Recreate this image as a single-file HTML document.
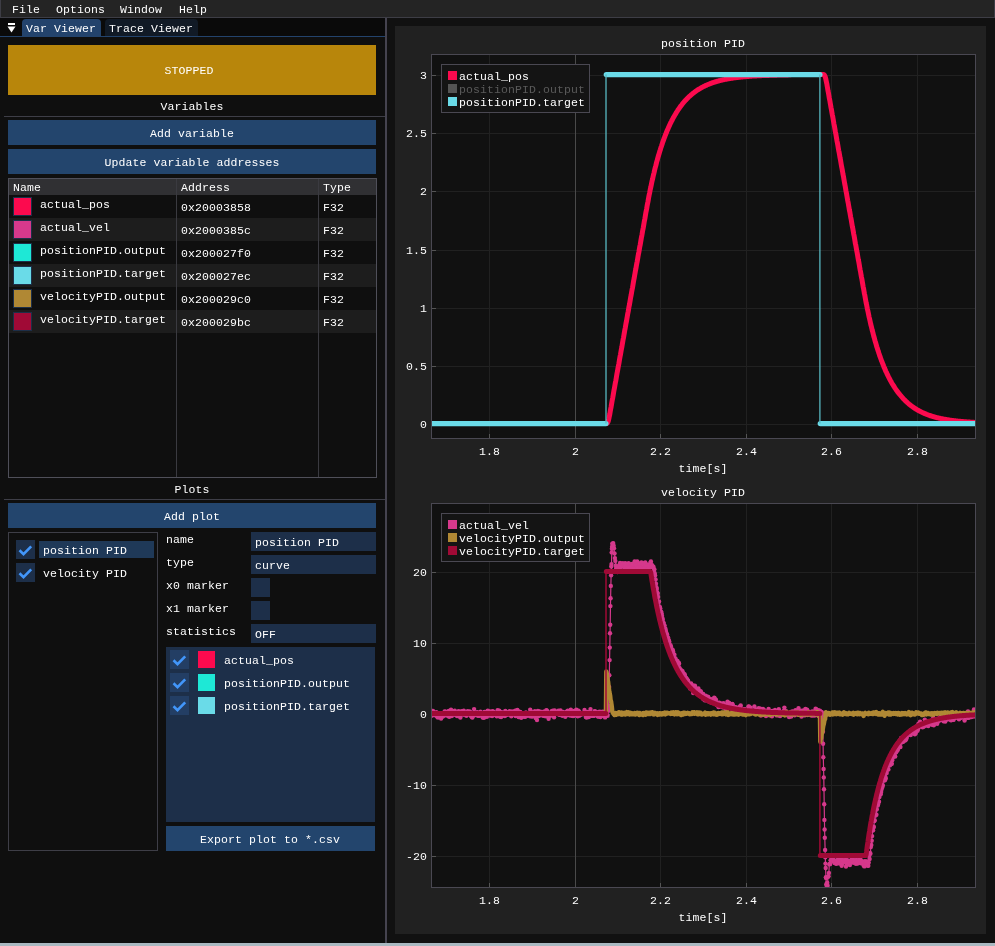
<!DOCTYPE html><html><head><meta charset="utf-8"><style>
html,body{margin:0;padding:0;background:#0f0f0f;width:995px;height:946px;overflow:hidden;position:relative}
.t{position:absolute;white-space:pre;font-family:"Liberation Mono", monospace;font-size:11.5px;line-height:14px;letter-spacing:0.1px;height:14px}
</style></head><body>
<div style="position:absolute;left:0px;top:0px;width:995px;height:17px;background:#242424;"></div><div style="position:absolute;left:0px;top:17px;width:995px;height:1px;background:#3d3d45;"></div><div style="position:absolute;left:0px;top:0px;width:1px;height:17px;background:#3d3d45;"></div><div style="position:absolute;left:994px;top:0px;width:1px;height:17px;background:#3d3d45;"></div><div style="position:absolute;left:0px;top:18px;width:385px;height:925px;background:#0f0f0f;"></div><div style="position:absolute;left:0px;top:18px;width:385px;height:18px;background:#0a0a0a;"></div><div style="position:absolute;left:0px;top:36px;width:385px;height:1px;background:#23436c;"></div><div style="position:absolute;left:8px;top:23px;width:7px;height:2px;background:#fff;"></div><svg style="position:absolute;left:7px;top:26px" width="10" height="8"><path d="M0.5 0.5 L8.5 0.5 L4.5 6.5 Z" fill="#fff"/></svg><div style="position:absolute;left:22px;top:19px;width:79px;height:17px;background:#23436c;border-radius:4px 4px 0 0;"></div><div style="position:absolute;left:105px;top:19px;width:93px;height:17px;background:#111a26;border-radius:4px 4px 0 0;"></div><div style="position:absolute;left:8px;top:45px;width:368px;height:50px;background:#b8860b;"></div><div style="position:absolute;left:4px;top:116px;width:381px;height:1px;background:#3e3e47;"></div><div style="position:absolute;left:8px;top:120px;width:368px;height:25px;background:#23456d;"></div><div style="position:absolute;left:8px;top:149px;width:368px;height:25px;background:#23456d;"></div><div style="position:absolute;left:8px;top:178px;width:369px;height:17px;background:#303033;"></div><div style="position:absolute;left:13px;top:197px;width:19px;height:19px;background:#1d2f49;"></div><div style="position:absolute;left:14px;top:198px;width:17px;height:17px;background:#fc0a4e;"></div><div style="position:absolute;left:9px;top:218px;width:367px;height:23px;background:#1d1d1d;"></div><div style="position:absolute;left:13px;top:220px;width:19px;height:19px;background:#1d2f49;"></div><div style="position:absolute;left:14px;top:221px;width:17px;height:17px;background:#d6398c;"></div><div style="position:absolute;left:13px;top:243px;width:19px;height:19px;background:#1d2f49;"></div><div style="position:absolute;left:14px;top:244px;width:17px;height:17px;background:#1ee8d6;"></div><div style="position:absolute;left:9px;top:264px;width:367px;height:23px;background:#1d1d1d;"></div><div style="position:absolute;left:13px;top:266px;width:19px;height:19px;background:#1d2f49;"></div><div style="position:absolute;left:14px;top:267px;width:17px;height:17px;background:#6adbe8;"></div><div style="position:absolute;left:13px;top:289px;width:19px;height:19px;background:#1d2f49;"></div><div style="position:absolute;left:14px;top:290px;width:17px;height:17px;background:#b08834;"></div><div style="position:absolute;left:9px;top:310px;width:367px;height:23px;background:#1d1d1d;"></div><div style="position:absolute;left:13px;top:312px;width:19px;height:19px;background:#1d2f49;"></div><div style="position:absolute;left:14px;top:313px;width:17px;height:17px;background:#a00a36;"></div><div style="position:absolute;left:176px;top:179px;width:1px;height:298px;background:#3a3a40;"></div><div style="position:absolute;left:318px;top:179px;width:1px;height:298px;background:#3a3a40;"></div><div style="position:absolute;left:8px;top:178px;width:369px;height:300px;background:transparent;box-shadow:inset 0 0 0 1px #4f4f59;"></div><div style="position:absolute;left:4px;top:499px;width:381px;height:1px;background:#3e3e47;"></div><div style="position:absolute;left:8px;top:503px;width:368px;height:25px;background:#23456d;"></div><div style="position:absolute;left:8px;top:532px;width:150px;height:319px;background:transparent;box-shadow:inset 0 0 0 1px #3e3e47;"></div><div style="position:absolute;left:39px;top:541px;width:115px;height:17px;background:#1f3958;"></div><div style="position:absolute;left:16px;top:540px;width:19px;height:19px;background:#1d2f49;"></div><svg style="position:absolute;left:16px;top:540px" width="19" height="19"><path d="M3.5 10.3 L7.5 14.2 L15.2 6.3" stroke="#4296fa" stroke-width="2.6" fill="none"/></svg><div style="position:absolute;left:16px;top:563px;width:19px;height:19px;background:#1d2f49;"></div><svg style="position:absolute;left:16px;top:563px" width="19" height="19"><path d="M3.5 10.3 L7.5 14.2 L15.2 6.3" stroke="#4296fa" stroke-width="2.6" fill="none"/></svg><div style="position:absolute;left:251px;top:532px;width:125px;height:19px;background:#1d2f49;"></div><div style="position:absolute;left:251px;top:555px;width:125px;height:19px;background:#1d2f49;"></div><div style="position:absolute;left:251px;top:578px;width:19px;height:19px;background:#1d2f49;"></div><div style="position:absolute;left:251px;top:601px;width:19px;height:19px;background:#1d2f49;"></div><div style="position:absolute;left:251px;top:624px;width:125px;height:19px;background:#1d2f49;"></div><div style="position:absolute;left:166px;top:647px;width:209px;height:175px;background:#1d2f49;"></div><div style="position:absolute;left:170px;top:650px;width:19px;height:19px;background:#233e64;"></div><svg style="position:absolute;left:170px;top:650px" width="19" height="19"><path d="M3.5 10.3 L7.5 14.2 L15.2 6.3" stroke="#4296fa" stroke-width="2.6" fill="none"/></svg><div style="position:absolute;left:198px;top:651px;width:17px;height:17px;background:#fc0a4e;"></div><div style="position:absolute;left:170px;top:673px;width:19px;height:19px;background:#233e64;"></div><svg style="position:absolute;left:170px;top:673px" width="19" height="19"><path d="M3.5 10.3 L7.5 14.2 L15.2 6.3" stroke="#4296fa" stroke-width="2.6" fill="none"/></svg><div style="position:absolute;left:198px;top:674px;width:17px;height:17px;background:#1ee8d6;"></div><div style="position:absolute;left:170px;top:696px;width:19px;height:19px;background:#233e64;"></div><svg style="position:absolute;left:170px;top:696px" width="19" height="19"><path d="M3.5 10.3 L7.5 14.2 L15.2 6.3" stroke="#4296fa" stroke-width="2.6" fill="none"/></svg><div style="position:absolute;left:198px;top:697px;width:17px;height:17px;background:#6adbe8;"></div><div style="position:absolute;left:166px;top:826px;width:209px;height:25px;background:#23456d;"></div><div style="position:absolute;left:385px;top:18px;width:2px;height:925px;background:#45434f;"></div><div style="position:absolute;left:387px;top:18px;width:608px;height:925px;background:#111111;"></div><div style="position:absolute;left:395px;top:26px;width:591px;height:908px;background:#212121;"></div><div style="position:absolute;left:0px;top:943px;width:995px;height:3px;background:#a9b9c1;"></div><svg style="position:absolute;left:0;top:0" width="995" height="946"><defs><clipPath id="c1"><rect x="432" y="55" width="543" height="383"/></clipPath><clipPath id="c2"><rect x="432" y="504" width="543" height="383"/></clipPath></defs><rect x="431" y="54" width="545" height="385" fill="#111111"/><line x1="489.5" y1="55" x2="489.5" y2="438" stroke="#212121" stroke-width="1"/><line x1="489.5" y1="434" x2="489.5" y2="438" stroke="#555555" stroke-width="1"/><line x1="575.5" y1="55" x2="575.5" y2="438" stroke="#4a4a4a" stroke-width="1"/><line x1="575.5" y1="434" x2="575.5" y2="438" stroke="#555555" stroke-width="1"/><line x1="660.5" y1="55" x2="660.5" y2="438" stroke="#212121" stroke-width="1"/><line x1="660.5" y1="434" x2="660.5" y2="438" stroke="#555555" stroke-width="1"/><line x1="746.5" y1="55" x2="746.5" y2="438" stroke="#212121" stroke-width="1"/><line x1="746.5" y1="434" x2="746.5" y2="438" stroke="#555555" stroke-width="1"/><line x1="831.5" y1="55" x2="831.5" y2="438" stroke="#212121" stroke-width="1"/><line x1="831.5" y1="434" x2="831.5" y2="438" stroke="#555555" stroke-width="1"/><line x1="917.5" y1="55" x2="917.5" y2="438" stroke="#212121" stroke-width="1"/><line x1="917.5" y1="434" x2="917.5" y2="438" stroke="#555555" stroke-width="1"/><line x1="432" y1="424.5" x2="975" y2="424.5" stroke="#212121" stroke-width="1"/><line x1="432" y1="424.5" x2="436" y2="424.5" stroke="#555555" stroke-width="1"/><line x1="432" y1="366.5" x2="975" y2="366.5" stroke="#212121" stroke-width="1"/><line x1="432" y1="366.5" x2="436" y2="366.5" stroke="#555555" stroke-width="1"/><line x1="432" y1="308.5" x2="975" y2="308.5" stroke="#212121" stroke-width="1"/><line x1="432" y1="308.5" x2="436" y2="308.5" stroke="#555555" stroke-width="1"/><line x1="432" y1="250.5" x2="975" y2="250.5" stroke="#212121" stroke-width="1"/><line x1="432" y1="250.5" x2="436" y2="250.5" stroke="#555555" stroke-width="1"/><line x1="432" y1="191.5" x2="975" y2="191.5" stroke="#212121" stroke-width="1"/><line x1="432" y1="191.5" x2="436" y2="191.5" stroke="#555555" stroke-width="1"/><line x1="432" y1="133.5" x2="975" y2="133.5" stroke="#212121" stroke-width="1"/><line x1="432" y1="133.5" x2="436" y2="133.5" stroke="#555555" stroke-width="1"/><line x1="432" y1="75.5" x2="975" y2="75.5" stroke="#212121" stroke-width="1"/><line x1="432" y1="75.5" x2="436" y2="75.5" stroke="#555555" stroke-width="1"/><line x1="575.5" y1="55" x2="575.5" y2="438" stroke="#4a4a4a" stroke-width="1"/><rect x="431.5" y="54.5" width="544" height="384" fill="none" stroke="#4a4852" stroke-width="1"/><rect x="431" y="503" width="545" height="385" fill="#111111"/><line x1="489.5" y1="504" x2="489.5" y2="887" stroke="#212121" stroke-width="1"/><line x1="489.5" y1="883" x2="489.5" y2="887" stroke="#555555" stroke-width="1"/><line x1="575.5" y1="504" x2="575.5" y2="887" stroke="#4a4a4a" stroke-width="1"/><line x1="575.5" y1="883" x2="575.5" y2="887" stroke="#555555" stroke-width="1"/><line x1="660.5" y1="504" x2="660.5" y2="887" stroke="#212121" stroke-width="1"/><line x1="660.5" y1="883" x2="660.5" y2="887" stroke="#555555" stroke-width="1"/><line x1="746.5" y1="504" x2="746.5" y2="887" stroke="#212121" stroke-width="1"/><line x1="746.5" y1="883" x2="746.5" y2="887" stroke="#555555" stroke-width="1"/><line x1="831.5" y1="504" x2="831.5" y2="887" stroke="#212121" stroke-width="1"/><line x1="831.5" y1="883" x2="831.5" y2="887" stroke="#555555" stroke-width="1"/><line x1="917.5" y1="504" x2="917.5" y2="887" stroke="#212121" stroke-width="1"/><line x1="917.5" y1="883" x2="917.5" y2="887" stroke="#555555" stroke-width="1"/><line x1="432" y1="856.5" x2="975" y2="856.5" stroke="#212121" stroke-width="1"/><line x1="432" y1="856.5" x2="436" y2="856.5" stroke="#555555" stroke-width="1"/><line x1="432" y1="785.5" x2="975" y2="785.5" stroke="#212121" stroke-width="1"/><line x1="432" y1="785.5" x2="436" y2="785.5" stroke="#555555" stroke-width="1"/><line x1="432" y1="714.5" x2="975" y2="714.5" stroke="#212121" stroke-width="1"/><line x1="432" y1="714.5" x2="436" y2="714.5" stroke="#555555" stroke-width="1"/><line x1="432" y1="643.5" x2="975" y2="643.5" stroke="#212121" stroke-width="1"/><line x1="432" y1="643.5" x2="436" y2="643.5" stroke="#555555" stroke-width="1"/><line x1="432" y1="572.5" x2="975" y2="572.5" stroke="#212121" stroke-width="1"/><line x1="432" y1="572.5" x2="436" y2="572.5" stroke="#555555" stroke-width="1"/><line x1="575.5" y1="504" x2="575.5" y2="887" stroke="#4a4a4a" stroke-width="1"/><rect x="431.5" y="503.5" width="544" height="384" fill="none" stroke="#4a4852" stroke-width="1"/><g clip-path="url(#c1)"><polyline points="430.0,423.6 430.4,423.6 430.9,423.6 431.3,423.6 431.7,423.6 432.1,423.6 432.6,423.6 433.0,423.6 433.4,423.6 433.9,423.6 434.3,423.6 434.7,423.6 435.1,423.6 435.6,423.6 436.0,423.6 436.4,423.6 436.9,423.6 437.3,423.6 437.7,423.6 438.1,423.6 438.6,423.6 439.0,423.6 439.4,423.6 439.9,423.6 440.3,423.6 440.7,423.6 441.1,423.6 441.6,423.6 442.0,423.6 442.4,423.6 442.8,423.6 443.3,423.6 443.7,423.6 444.1,423.6 444.6,423.6 445.0,423.6 445.4,423.6 445.8,423.6 446.3,423.6 446.7,423.6 447.1,423.6 447.6,423.6 448.0,423.6 448.4,423.6 448.8,423.6 449.3,423.6 449.7,423.6 450.1,423.6 450.6,423.6 451.0,423.6 451.4,423.6 451.8,423.6 452.3,423.6 452.7,423.6 453.1,423.6 453.5,423.6 454.0,423.6 454.4,423.6 454.8,423.6 455.3,423.6 455.7,423.6 456.1,423.6 456.5,423.6 457.0,423.6 457.4,423.6 457.8,423.6 458.3,423.6 458.7,423.6 459.1,423.6 459.5,423.6 460.0,423.6 460.4,423.6 460.8,423.6 461.3,423.6 461.7,423.6 462.1,423.6 462.5,423.6 463.0,423.6 463.4,423.6 463.8,423.6 464.2,423.6 464.7,423.6 465.1,423.6 465.5,423.6 466.0,423.6 466.4,423.6 466.8,423.6 467.2,423.6 467.7,423.6 468.1,423.6 468.5,423.6 469.0,423.6 469.4,423.6 469.8,423.6 470.2,423.6 470.7,423.6 471.1,423.6 471.5,423.6 472.0,423.6 472.4,423.6 472.8,423.6 473.2,423.6 473.7,423.6 474.1,423.6 474.5,423.6 474.9,423.6 475.4,423.6 475.8,423.6 476.2,423.6 476.7,423.6 477.1,423.6 477.5,423.6 477.9,423.6 478.4,423.6 478.8,423.6 479.2,423.6 479.7,423.6 480.1,423.6 480.5,423.6 480.9,423.6 481.4,423.6 481.8,423.6 482.2,423.6 482.7,423.6 483.1,423.6 483.5,423.6 483.9,423.6 484.4,423.6 484.8,423.6 485.2,423.6 485.6,423.6 486.1,423.6 486.5,423.6 486.9,423.6 487.4,423.6 487.8,423.6 488.2,423.6 488.6,423.6 489.1,423.6 489.5,423.6 489.9,423.6 490.4,423.6 490.8,423.6 491.2,423.6 491.6,423.6 492.1,423.6 492.5,423.6 492.9,423.6 493.4,423.6 493.8,423.6 494.2,423.6 494.6,423.6 495.1,423.6 495.5,423.6 495.9,423.6 496.3,423.6 496.8,423.6 497.2,423.6 497.6,423.6 498.1,423.6 498.5,423.6 498.9,423.6 499.3,423.6 499.8,423.6 500.2,423.6 500.6,423.6 501.1,423.6 501.5,423.6 501.9,423.6 502.3,423.6 502.8,423.6 503.2,423.6 503.6,423.6 504.1,423.6 504.5,423.6 504.9,423.6 505.3,423.6 505.8,423.6 506.2,423.6 506.6,423.6 507.0,423.6 507.5,423.6 507.9,423.6 508.3,423.6 508.8,423.6 509.2,423.6 509.6,423.6 510.0,423.6 510.5,423.6 510.9,423.6 511.3,423.6 511.8,423.6 512.2,423.6 512.6,423.6 513.0,423.6 513.5,423.6 513.9,423.6 514.3,423.6 514.8,423.6 515.2,423.6 515.6,423.6 516.0,423.6 516.5,423.6 516.9,423.6 517.3,423.6 517.7,423.6 518.2,423.6 518.6,423.6 519.0,423.6 519.5,423.6 519.9,423.6 520.3,423.6 520.7,423.6 521.2,423.6 521.6,423.6 522.0,423.6 522.5,423.6 522.9,423.6 523.3,423.6 523.7,423.6 524.2,423.6 524.6,423.6 525.0,423.6 525.5,423.6 525.9,423.6 526.3,423.6 526.7,423.6 527.2,423.6 527.6,423.6 528.0,423.6 528.4,423.6 528.9,423.6 529.3,423.6 529.7,423.6 530.2,423.6 530.6,423.6 531.0,423.6 531.4,423.6 531.9,423.6 532.3,423.6 532.7,423.6 533.2,423.6 533.6,423.6 534.0,423.6 534.4,423.6 534.9,423.6 535.3,423.6 535.7,423.6 536.2,423.6 536.6,423.6 537.0,423.6 537.4,423.6 537.9,423.6 538.3,423.6 538.7,423.6 539.1,423.6 539.6,423.6 540.0,423.6 540.4,423.6 540.9,423.6 541.3,423.6 541.7,423.6 542.1,423.6 542.6,423.6 543.0,423.6 543.4,423.6 543.9,423.6 544.3,423.6 544.7,423.6 545.1,423.6 545.6,423.6 546.0,423.6 546.4,423.6 546.9,423.6 547.3,423.6 547.7,423.6 548.1,423.6 548.6,423.6 549.0,423.6 549.4,423.6 549.8,423.6 550.3,423.6 550.7,423.6 551.1,423.6 551.6,423.6 552.0,423.6 552.4,423.6 552.8,423.6 553.3,423.6 553.7,423.6 554.1,423.6 554.6,423.6 555.0,423.6 555.4,423.6 555.8,423.6 556.3,423.6 556.7,423.6 557.1,423.6 557.6,423.6 558.0,423.6 558.4,423.6 558.8,423.6 559.3,423.6 559.7,423.6 560.1,423.6 560.5,423.6 561.0,423.6 561.4,423.6 561.8,423.6 562.3,423.6 562.7,423.6 563.1,423.6 563.5,423.6 564.0,423.6 564.4,423.6 564.8,423.6 565.3,423.6 565.7,423.6 566.1,423.6 566.5,423.6 567.0,423.6 567.4,423.6 567.8,423.6 568.3,423.6 568.7,423.6 569.1,423.6 569.5,423.6 570.0,423.6 570.4,423.6 570.8,423.6 571.2,423.6 571.7,423.6 572.1,423.6 572.5,423.6 573.0,423.6 573.4,423.6 573.8,423.6 574.2,423.6 574.7,423.6 575.1,423.6 575.5,423.6 576.0,423.6 576.4,423.6 576.8,423.6 577.2,423.6 577.7,423.6 578.1,423.6 578.5,423.6 579.0,423.6 579.4,423.6 579.8,423.6 580.2,423.6 580.7,423.6 581.1,423.6 581.5,423.6 581.9,423.6 582.4,423.6 582.8,423.6 583.2,423.6 583.7,423.6 584.1,423.6 584.5,423.6 584.9,423.6 585.4,423.6 585.8,423.6 586.2,423.6 586.7,423.6 587.1,423.6 587.5,423.6 587.9,423.6 588.4,423.6 588.8,423.6 589.2,423.6 589.7,423.6 590.1,423.6 590.5,423.6 590.9,423.6 591.4,423.6 591.8,423.6 592.2,423.6 592.6,423.6 593.1,423.6 593.5,423.6 593.9,423.6 594.4,423.6 594.8,423.6 595.2,423.6 595.6,423.6 596.1,423.6 596.5,423.6 596.9,423.6 597.4,423.6 597.8,423.6 598.2,423.6 598.6,423.6 599.1,423.6 599.5,423.6 599.9,423.6 600.4,423.6 600.8,423.6 601.2,423.6 601.6,423.6 602.1,423.6 602.5,423.6 602.9,423.6 603.3,423.6 603.8,423.6 604.2,423.6 604.6,423.6 605.1,423.6 605.5,423.6 605.9,423.6 606.3,423.6 606.8,423.6 607.2,423.3 607.6,422.6 608.1,421.6 608.5,420.2 608.9,418.5 609.3,416.4 609.8,414.1 610.2,411.7 610.6,409.3 611.1,406.9 611.5,404.5 611.9,402.1 612.3,399.8 612.8,397.4 613.2,395.0 613.6,392.6 614.0,390.2 614.5,387.8 614.9,385.4 615.3,383.1 615.8,380.7 616.2,378.3 616.6,375.9 617.0,373.5 617.5,371.1 617.9,368.8 618.3,366.4 618.8,364.0 619.2,361.6 619.6,359.2 620.0,356.8 620.5,354.4 620.9,352.1 621.3,349.7 621.8,347.3 622.2,344.9 622.6,342.5 623.0,340.1 623.5,337.7 623.9,335.4 624.3,333.0 624.7,330.6 625.2,328.2 625.6,325.8 626.0,323.4 626.5,321.1 626.9,318.7 627.3,316.3 627.7,313.9 628.2,311.5 628.6,309.1 629.0,306.7 629.5,304.4 629.9,302.0 630.3,299.6 630.7,297.2 631.2,294.8 631.6,292.4 632.0,290.1 632.5,287.7 632.9,285.3 633.3,282.9 633.7,280.5 634.2,278.1 634.6,275.7 635.0,273.4 635.4,271.0 635.9,268.6 636.3,266.2 636.7,263.8 637.2,261.4 637.6,259.1 638.0,256.7 638.4,254.3 638.9,251.9 639.3,249.5 639.7,247.1 640.2,244.7 640.6,242.4 641.0,240.0 641.4,237.6 641.9,235.2 642.3,232.8 642.7,230.4 643.2,228.0 643.6,225.7 644.0,223.3 644.4,220.9 644.9,218.5 645.3,216.1 645.7,213.7 646.1,211.4 646.6,209.0 647.0,206.6 647.4,204.3 647.9,202.0 648.3,199.7 648.7,197.4 649.1,195.2 649.6,193.0 650.0,190.9 650.4,188.8 650.9,186.7 651.3,184.7 651.7,182.7 652.1,180.8 652.6,178.9 653.0,177.0 653.4,175.2 653.9,173.3 654.3,171.6 654.7,169.8 655.1,168.1 655.6,166.4 656.0,164.8 656.4,163.1 656.8,161.5 657.3,160.0 657.7,158.4 658.1,156.9 658.6,155.4 659.0,154.0 659.4,152.6 659.8,151.2 660.3,149.8 660.7,148.4 661.1,147.1 661.6,145.8 662.0,144.5 662.4,143.2 662.8,142.0 663.3,140.8 663.7,139.6 664.1,138.4 664.6,137.3 665.0,136.1 665.4,135.0 665.8,134.0 666.3,132.9 666.7,131.8 667.1,130.8 667.5,129.8 668.0,128.8 668.4,127.8 668.8,126.9 669.3,125.9 669.7,125.0 670.1,124.1 670.5,123.2 671.0,122.3 671.4,121.5 671.8,120.6 672.3,119.8 672.7,119.0 673.1,118.2 673.5,117.4 674.0,116.6 674.4,115.9 674.8,115.1 675.3,114.4 675.7,113.7 676.1,113.0 676.5,112.3 677.0,111.6 677.4,110.9 677.8,110.3 678.2,109.6 678.7,109.0 679.1,108.4 679.5,107.8 680.0,107.2 680.4,106.6 680.8,106.0 681.2,105.4 681.7,104.9 682.1,104.3 682.5,103.8 683.0,103.3 683.4,102.8 683.8,102.3 684.2,101.8 684.7,101.3 685.1,100.8 685.5,100.3 686.0,99.9 686.4,99.4 686.8,99.0 687.2,98.5 687.7,98.1 688.1,97.7 688.5,97.2 688.9,96.8 689.4,96.4 689.8,96.0 690.2,95.7 690.7,95.3 691.1,94.9 691.5,94.5 691.9,94.2 692.4,93.8 692.8,93.5 693.2,93.1 693.7,92.8 694.1,92.5 694.5,92.2 694.9,91.8 695.4,91.5 695.8,91.2 696.2,90.9 696.7,90.6 697.1,90.3 697.5,90.1 697.9,89.8 698.4,89.5 698.8,89.2 699.2,89.0 699.6,88.7 700.1,88.5 700.5,88.2 700.9,88.0 701.4,87.7 701.8,87.5 702.2,87.3 702.6,87.0 703.1,86.8 703.5,86.6 703.9,86.4 704.4,86.2 704.8,86.0 705.2,85.8 705.6,85.5 706.1,85.4 706.5,85.2 706.9,85.0 707.4,84.8 707.8,84.6 708.2,84.4 708.6,84.2 709.1,84.1 709.5,83.9 709.9,83.7 710.3,83.6 710.8,83.4 711.2,83.2 711.6,83.1 712.1,82.9 712.5,82.8 712.9,82.6 713.3,82.5 713.8,82.4 714.2,82.2 714.6,82.1 715.1,81.9 715.5,81.8 715.9,81.7 716.3,81.6 716.8,81.4 717.2,81.3 717.6,81.2 718.1,81.1 718.5,81.0 718.9,80.8 719.3,80.7 719.8,80.6 720.2,80.5 720.6,80.4 721.0,80.3 721.5,80.2 721.9,80.1 722.3,80.0 722.8,79.9 723.2,79.8 723.6,79.7 724.0,79.6 724.5,79.5 724.9,79.4 725.3,79.3 725.8,79.3 726.2,79.2 726.6,79.1 727.0,79.0 727.5,78.9 727.9,78.9 728.3,78.8 728.8,78.7 729.2,78.6 729.6,78.6 730.0,78.5 730.5,78.4 730.9,78.4 731.3,78.3 731.7,78.2 732.2,78.2 732.6,78.1 733.0,78.0 733.5,78.0 733.9,77.9 734.3,77.8 734.7,77.8 735.2,77.7 735.6,77.7 736.0,77.6 736.5,77.6 736.9,77.5 737.3,77.5 737.7,77.4 738.2,77.4 738.6,77.3 739.0,77.3 739.5,77.2 739.9,77.2 740.3,77.1 740.7,77.1 741.2,77.0 741.6,77.0 742.0,76.9 742.4,76.9 742.9,76.9 743.3,76.8 743.7,76.8 744.2,76.7 744.6,76.7 745.0,76.7 745.4,76.6 745.9,76.6 746.3,76.6 746.7,76.5 747.2,76.5 747.6,76.5 748.0,76.4 748.4,76.4 748.9,76.4 749.3,76.3 749.7,76.3 750.2,76.3 750.6,76.2 751.0,76.2 751.4,76.2 751.9,76.1 752.3,76.1 752.7,76.1 753.1,76.1 753.6,76.0 754.0,76.0 754.4,76.0 754.9,76.0 755.3,75.9 755.7,75.9 756.1,75.9 756.6,75.9 757.0,75.8 757.4,75.8 757.9,75.8 758.3,75.8 758.7,75.8 759.1,75.7 759.6,75.7 760.0,75.7 760.4,75.7 760.9,75.7 761.3,75.6 761.7,75.6 762.1,75.6 762.6,75.6 763.0,75.6 763.4,75.5 763.8,75.5 764.3,75.5 764.7,75.5 765.1,75.5 765.6,75.5 766.0,75.5 766.4,75.4 766.8,75.4 767.3,75.4 767.7,75.4 768.1,75.4 768.6,75.4 769.0,75.4 769.4,75.3 769.8,75.3 770.3,75.3 770.7,75.3 771.1,75.3 771.6,75.3 772.0,75.3 772.4,75.3 772.8,75.2 773.3,75.2 773.7,75.2 774.1,75.2 774.5,75.2 775.0,75.2 775.4,75.2 775.8,75.2 776.3,75.2 776.7,75.1 777.1,75.1 777.5,75.1 778.0,75.1 778.4,75.1 778.8,75.1 779.3,75.1 779.7,75.1 780.1,75.1 780.5,75.1 781.0,75.1 781.4,75.0 781.8,75.0 782.3,75.0 782.7,75.0 783.1,75.0 783.5,75.0 784.0,75.0 784.4,75.0 784.8,75.0 785.2,75.0 785.7,75.0 786.1,75.0 786.5,75.0 787.0,75.0 787.4,74.9 787.8,74.9 788.2,74.9 788.7,74.8 789.1,74.8 789.5,74.7 790.0,74.7 790.4,74.7 790.8,74.6 791.2,74.6 791.7,74.6 792.1,74.6 792.5,74.6 793.0,74.6 793.4,74.6 793.8,74.6 794.2,74.6 794.7,74.6 795.1,74.6 795.5,74.6 795.9,74.6 796.4,74.6 796.8,74.6 797.2,74.6 797.7,74.6 798.1,74.6 798.5,74.6 798.9,74.6 799.4,74.6 799.8,74.6 800.2,74.6 800.7,74.6 801.1,74.6 801.5,74.6 801.9,74.6 802.4,74.6 802.8,74.6 803.2,74.6 803.7,74.6 804.1,74.6 804.5,74.6 804.9,74.6 805.4,74.6 805.8,74.6 806.2,74.6 806.6,74.6 807.1,74.6 807.5,74.6 807.9,74.6 808.4,74.6 808.8,74.6 809.2,74.6 809.6,74.6 810.1,74.6 810.5,74.6 810.9,74.6 811.4,74.6 811.8,74.6 812.2,74.6 812.6,74.6 813.1,74.6 813.5,74.6 813.9,74.6 814.4,74.6 814.8,74.6 815.2,74.6 815.6,74.6 816.1,74.6 816.5,74.6 816.9,74.6 817.3,74.6 817.8,74.6 818.2,74.6 818.6,74.6 819.1,74.6 819.5,74.6 819.9,74.6 820.3,74.6 820.8,74.6 821.2,74.6 821.6,74.6 822.1,74.6 822.5,74.6 822.9,74.6 823.3,74.6 823.8,74.6 824.2,74.9 824.6,75.5 825.1,76.4 825.5,77.7 825.9,79.4 826.3,81.4 826.8,83.7 827.2,86.1 827.6,88.4 828.0,90.8 828.5,93.2 828.9,95.6 829.3,98.0 829.8,100.4 830.2,102.8 830.6,105.1 831.0,107.5 831.5,109.9 831.9,112.3 832.3,114.7 832.8,117.1 833.2,119.4 833.6,121.8 834.0,124.2 834.5,126.6 834.9,129.0 835.3,131.4 835.8,133.8 836.2,136.1 836.6,138.5 837.0,140.9 837.5,143.3 837.9,145.7 838.3,148.1 838.7,150.4 839.2,152.8 839.6,155.2 840.0,157.6 840.5,160.0 840.9,162.4 841.3,164.8 841.7,167.1 842.2,169.5 842.6,171.9 843.0,174.3 843.5,176.7 843.9,179.1 844.3,181.4 844.7,183.8 845.2,186.2 845.6,188.6 846.0,191.0 846.5,193.4 846.9,195.8 847.3,198.1 847.7,200.5 848.2,202.9 848.6,205.3 849.0,207.7 849.4,210.1 849.9,212.4 850.3,214.8 850.7,217.2 851.2,219.6 851.6,222.0 852.0,224.4 852.4,226.8 852.9,229.1 853.3,231.5 853.7,233.9 854.2,236.3 854.6,238.7 855.0,241.1 855.4,243.5 855.9,245.8 856.3,248.2 856.7,250.6 857.2,253.0 857.6,255.4 858.0,257.8 858.4,260.1 858.9,262.5 859.3,264.9 859.7,267.3 860.1,269.7 860.6,272.1 861.0,274.5 861.4,276.8 861.9,279.2 862.3,281.6 862.7,284.0 863.1,286.4 863.6,288.8 864.0,291.1 864.4,293.5 864.9,295.8 865.3,298.1 865.7,300.4 866.1,302.6 866.6,304.8 867.0,306.9 867.4,309.0 867.9,311.1 868.3,313.1 868.7,315.1 869.1,317.0 869.6,319.0 870.0,320.8 870.4,322.7 870.8,324.5 871.3,326.3 871.7,328.0 872.1,329.8 872.6,331.5 873.0,333.1 873.4,334.8 873.8,336.4 874.3,337.9 874.7,339.5 875.1,341.0 875.6,342.5 876.0,343.9 876.4,345.4 876.8,346.8 877.3,348.2 877.7,349.5 878.1,350.9 878.6,352.2 879.0,353.5 879.4,354.7 879.8,356.0 880.3,357.2 880.7,358.4 881.1,359.5 881.5,360.7 882.0,361.8 882.4,362.9 882.8,364.0 883.3,365.1 883.7,366.2 884.1,367.2 884.5,368.2 885.0,369.2 885.4,370.2 885.8,371.2 886.3,372.1 886.7,373.0 887.1,373.9 887.5,374.8 888.0,375.7 888.4,376.6 888.8,377.4 889.3,378.3 889.7,379.1 890.1,379.9 890.5,380.7 891.0,381.4 891.4,382.2 891.8,382.9 892.2,383.7 892.7,384.4 893.1,385.1 893.5,385.8 894.0,386.5 894.4,387.1 894.8,387.8 895.2,388.4 895.7,389.1 896.1,389.7 896.5,390.3 897.0,390.9 897.4,391.5 897.8,392.1 898.2,392.6 898.7,393.2 899.1,393.8 899.5,394.3 900.0,394.8 900.4,395.3 900.8,395.8 901.2,396.3 901.7,396.8 902.1,397.3 902.5,397.8 902.9,398.3 903.4,398.7 903.8,399.2 904.2,399.6 904.7,400.0 905.1,400.5 905.5,400.9 905.9,401.3 906.4,401.7 906.8,402.1 907.2,402.5 907.7,402.9 908.1,403.2 908.5,403.6 908.9,404.0 909.4,404.3 909.8,404.7 910.2,405.0 910.7,405.3 911.1,405.7 911.5,406.0 911.9,406.3 912.4,406.6 912.8,406.9 913.2,407.2 913.6,407.5 914.1,407.8 914.5,408.1 914.9,408.4 915.4,408.6 915.8,408.9 916.2,409.2 916.6,409.4 917.1,409.7 917.5,409.9 917.9,410.2 918.4,410.4 918.8,410.7 919.2,410.9 919.6,411.1 920.1,411.4 920.5,411.6 920.9,411.8 921.4,412.0 921.8,412.2 922.2,412.4 922.6,412.6 923.1,412.8 923.5,413.0 923.9,413.2 924.3,413.4 924.8,413.6 925.2,413.8 925.6,413.9 926.1,414.1 926.5,414.3 926.9,414.4 927.3,414.6 927.8,414.8 928.2,414.9 928.6,415.1 929.1,415.2 929.5,415.4 929.9,415.5 930.3,415.7 930.8,415.8 931.2,416.0 931.6,416.1 932.1,416.2 932.5,416.4 932.9,416.5 933.3,416.6 933.8,416.8 934.2,416.9 934.6,417.0 935.0,417.1 935.5,417.2 935.9,417.4 936.3,417.5 936.8,417.6 937.2,417.7 937.6,417.8 938.0,417.9 938.5,418.0 938.9,418.1 939.3,418.2 939.8,418.3 940.2,418.4 940.6,418.5 941.0,418.6 941.5,418.7 941.9,418.8 942.3,418.8 942.8,418.9 943.2,419.0 943.6,419.1 944.0,419.2 944.5,419.3 944.9,419.3 945.3,419.4 945.7,419.5 946.2,419.6 946.6,419.6 947.0,419.7 947.5,419.8 947.9,419.8 948.3,419.9 948.7,420.0 949.2,420.0 949.6,420.1 950.0,420.2 950.5,420.2 950.9,420.3 951.3,420.4 951.7,420.4 952.2,420.5 952.6,420.5 953.0,420.6 953.5,420.6 953.9,420.7 954.3,420.7 954.7,420.8 955.2,420.8 955.6,420.9 956.0,420.9 956.4,421.0 956.9,421.0 957.3,421.1 957.7,421.1 958.2,421.2 958.6,421.2 959.0,421.3 959.4,421.3 959.9,421.3 960.3,421.4 960.7,421.4 961.2,421.5 961.6,421.5 962.0,421.5 962.4,421.6 962.9,421.6 963.3,421.6 963.7,421.7 964.2,421.7 964.6,421.8 965.0,421.8 965.4,421.8 965.9,421.8 966.3,421.9 966.7,421.9 967.1,421.9 967.6,422.0 968.0,422.0 968.4,422.0 968.9,422.1 969.3,422.1 969.7,422.1 970.1,422.1 970.6,422.2 971.0,422.2 971.4,422.2 971.9,422.2 972.3,422.3 972.7,422.3 973.1,422.3 973.6,422.3 974.0,422.4 974.4,422.4 974.9,422.4 975.3,422.4 975.7,422.4 976.1,422.5 976.6,422.5 977.0,422.5 977.4,422.5" fill="none" stroke="#fc0a4e" stroke-width="5" stroke-linejoin="round" stroke-linecap="round"/><polyline points="430.0,423.6 430.4,423.6 430.9,423.6 431.3,423.6 431.7,423.6 432.1,423.6 432.6,423.6 433.0,423.6 433.4,423.6 433.9,423.6 434.3,423.6 434.7,423.6 435.1,423.6 435.6,423.6 436.0,423.6 436.4,423.6 436.9,423.6 437.3,423.6 437.7,423.6 438.1,423.6 438.6,423.6 439.0,423.6 439.4,423.6 439.9,423.6 440.3,423.6 440.7,423.6 441.1,423.6 441.6,423.6 442.0,423.6 442.4,423.6 442.8,423.6 443.3,423.6 443.7,423.6 444.1,423.6 444.6,423.6 445.0,423.6 445.4,423.6 445.8,423.6 446.3,423.6 446.7,423.6 447.1,423.6 447.6,423.6 448.0,423.6 448.4,423.6 448.8,423.6 449.3,423.6 449.7,423.6 450.1,423.6 450.6,423.6 451.0,423.6 451.4,423.6 451.8,423.6 452.3,423.6 452.7,423.6 453.1,423.6 453.5,423.6 454.0,423.6 454.4,423.6 454.8,423.6 455.3,423.6 455.7,423.6 456.1,423.6 456.5,423.6 457.0,423.6 457.4,423.6 457.8,423.6 458.3,423.6 458.7,423.6 459.1,423.6 459.5,423.6 460.0,423.6 460.4,423.6 460.8,423.6 461.3,423.6 461.7,423.6 462.1,423.6 462.5,423.6 463.0,423.6 463.4,423.6 463.8,423.6 464.2,423.6 464.7,423.6 465.1,423.6 465.5,423.6 466.0,423.6 466.4,423.6 466.8,423.6 467.2,423.6 467.7,423.6 468.1,423.6 468.5,423.6 469.0,423.6 469.4,423.6 469.8,423.6 470.2,423.6 470.7,423.6 471.1,423.6 471.5,423.6 472.0,423.6 472.4,423.6 472.8,423.6 473.2,423.6 473.7,423.6 474.1,423.6 474.5,423.6 474.9,423.6 475.4,423.6 475.8,423.6 476.2,423.6 476.7,423.6 477.1,423.6 477.5,423.6 477.9,423.6 478.4,423.6 478.8,423.6 479.2,423.6 479.7,423.6 480.1,423.6 480.5,423.6 480.9,423.6 481.4,423.6 481.8,423.6 482.2,423.6 482.7,423.6 483.1,423.6 483.5,423.6 483.9,423.6 484.4,423.6 484.8,423.6 485.2,423.6 485.6,423.6 486.1,423.6 486.5,423.6 486.9,423.6 487.4,423.6 487.8,423.6 488.2,423.6 488.6,423.6 489.1,423.6 489.5,423.6 489.9,423.6 490.4,423.6 490.8,423.6 491.2,423.6 491.6,423.6 492.1,423.6 492.5,423.6 492.9,423.6 493.4,423.6 493.8,423.6 494.2,423.6 494.6,423.6 495.1,423.6 495.5,423.6 495.9,423.6 496.3,423.6 496.8,423.6 497.2,423.6 497.6,423.6 498.1,423.6 498.5,423.6 498.9,423.6 499.3,423.6 499.8,423.6 500.2,423.6 500.6,423.6 501.1,423.6 501.5,423.6 501.9,423.6 502.3,423.6 502.8,423.6 503.2,423.6 503.6,423.6 504.1,423.6 504.5,423.6 504.9,423.6 505.3,423.6 505.8,423.6 506.2,423.6 506.6,423.6 507.0,423.6 507.5,423.6 507.9,423.6 508.3,423.6 508.8,423.6 509.2,423.6 509.6,423.6 510.0,423.6 510.5,423.6 510.9,423.6 511.3,423.6 511.8,423.6 512.2,423.6 512.6,423.6 513.0,423.6 513.5,423.6 513.9,423.6 514.3,423.6 514.8,423.6 515.2,423.6 515.6,423.6 516.0,423.6 516.5,423.6 516.9,423.6 517.3,423.6 517.7,423.6 518.2,423.6 518.6,423.6 519.0,423.6 519.5,423.6 519.9,423.6 520.3,423.6 520.7,423.6 521.2,423.6 521.6,423.6 522.0,423.6 522.5,423.6 522.9,423.6 523.3,423.6 523.7,423.6 524.2,423.6 524.6,423.6 525.0,423.6 525.5,423.6 525.9,423.6 526.3,423.6 526.7,423.6 527.2,423.6 527.6,423.6 528.0,423.6 528.4,423.6 528.9,423.6 529.3,423.6 529.7,423.6 530.2,423.6 530.6,423.6 531.0,423.6 531.4,423.6 531.9,423.6 532.3,423.6 532.7,423.6 533.2,423.6 533.6,423.6 534.0,423.6 534.4,423.6 534.9,423.6 535.3,423.6 535.7,423.6 536.2,423.6 536.6,423.6 537.0,423.6 537.4,423.6 537.9,423.6 538.3,423.6 538.7,423.6 539.1,423.6 539.6,423.6 540.0,423.6 540.4,423.6 540.9,423.6 541.3,423.6 541.7,423.6 542.1,423.6 542.6,423.6 543.0,423.6 543.4,423.6 543.9,423.6 544.3,423.6 544.7,423.6 545.1,423.6 545.6,423.6 546.0,423.6 546.4,423.6 546.9,423.6 547.3,423.6 547.7,423.6 548.1,423.6 548.6,423.6 549.0,423.6 549.4,423.6 549.8,423.6 550.3,423.6 550.7,423.6 551.1,423.6 551.6,423.6 552.0,423.6 552.4,423.6 552.8,423.6 553.3,423.6 553.7,423.6 554.1,423.6 554.6,423.6 555.0,423.6 555.4,423.6 555.8,423.6 556.3,423.6 556.7,423.6 557.1,423.6 557.6,423.6 558.0,423.6 558.4,423.6 558.8,423.6 559.3,423.6 559.7,423.6 560.1,423.6 560.5,423.6 561.0,423.6 561.4,423.6 561.8,423.6 562.3,423.6 562.7,423.6 563.1,423.6 563.5,423.6 564.0,423.6 564.4,423.6 564.8,423.6 565.3,423.6 565.7,423.6 566.1,423.6 566.5,423.6 567.0,423.6 567.4,423.6 567.8,423.6 568.3,423.6 568.7,423.6 569.1,423.6 569.5,423.6 570.0,423.6 570.4,423.6 570.8,423.6 571.2,423.6 571.7,423.6 572.1,423.6 572.5,423.6 573.0,423.6 573.4,423.6 573.8,423.6 574.2,423.6 574.7,423.6 575.1,423.6 575.5,423.6 576.0,423.6 576.4,423.6 576.8,423.6 577.2,423.6 577.7,423.6 578.1,423.6 578.5,423.6 579.0,423.6 579.4,423.6 579.8,423.6 580.2,423.6 580.7,423.6 581.1,423.6 581.5,423.6 581.9,423.6 582.4,423.6 582.8,423.6 583.2,423.6 583.7,423.6 584.1,423.6 584.5,423.6 584.9,423.6 585.4,423.6 585.8,423.6 586.2,423.6 586.7,423.6 587.1,423.6 587.5,423.6 587.9,423.6 588.4,423.6 588.8,423.6 589.2,423.6 589.7,423.6 590.1,423.6 590.5,423.6 590.9,423.6 591.4,423.6 591.8,423.6 592.2,423.6 592.6,423.6 593.1,423.6 593.5,423.6 593.9,423.6 594.4,423.6 594.8,423.6 595.2,423.6 595.6,423.6 596.1,423.6 596.5,423.6 596.9,423.6 597.4,423.6 597.8,423.6 598.2,423.6 598.6,423.6 599.1,423.6 599.5,423.6 599.9,423.6 600.4,423.6 600.8,423.6 601.2,423.6 601.6,423.6 602.1,423.6 602.5,423.6 602.9,423.6 603.3,423.6 603.8,423.6 604.2,423.6 604.6,423.6 605.1,423.6 605.5,423.6 605.9,423.6" fill="none" stroke="#6adbe8" stroke-width="5.3" stroke-linejoin="round" stroke-linecap="round"/><polyline points="606.3,74.6 606.8,74.6 607.2,74.6 607.6,74.6 608.1,74.6 608.5,74.6 608.9,74.6 609.3,74.6 609.8,74.6 610.2,74.6 610.6,74.6 611.1,74.6 611.5,74.6 611.9,74.6 612.3,74.6 612.8,74.6 613.2,74.6 613.6,74.6 614.0,74.6 614.5,74.6 614.9,74.6 615.3,74.6 615.8,74.6 616.2,74.6 616.6,74.6 617.0,74.6 617.5,74.6 617.9,74.6 618.3,74.6 618.8,74.6 619.2,74.6 619.6,74.6 620.0,74.6 620.5,74.6 620.9,74.6 621.3,74.6 621.8,74.6 622.2,74.6 622.6,74.6 623.0,74.6 623.5,74.6 623.9,74.6 624.3,74.6 624.7,74.6 625.2,74.6 625.6,74.6 626.0,74.6 626.5,74.6 626.9,74.6 627.3,74.6 627.7,74.6 628.2,74.6 628.6,74.6 629.0,74.6 629.5,74.6 629.9,74.6 630.3,74.6 630.7,74.6 631.2,74.6 631.6,74.6 632.0,74.6 632.5,74.6 632.9,74.6 633.3,74.6 633.7,74.6 634.2,74.6 634.6,74.6 635.0,74.6 635.4,74.6 635.9,74.6 636.3,74.6 636.7,74.6 637.2,74.6 637.6,74.6 638.0,74.6 638.4,74.6 638.9,74.6 639.3,74.6 639.7,74.6 640.2,74.6 640.6,74.6 641.0,74.6 641.4,74.6 641.9,74.6 642.3,74.6 642.7,74.6 643.2,74.6 643.6,74.6 644.0,74.6 644.4,74.6 644.9,74.6 645.3,74.6 645.7,74.6 646.1,74.6 646.6,74.6 647.0,74.6 647.4,74.6 647.9,74.6 648.3,74.6 648.7,74.6 649.1,74.6 649.6,74.6 650.0,74.6 650.4,74.6 650.9,74.6 651.3,74.6 651.7,74.6 652.1,74.6 652.6,74.6 653.0,74.6 653.4,74.6 653.9,74.6 654.3,74.6 654.7,74.6 655.1,74.6 655.6,74.6 656.0,74.6 656.4,74.6 656.8,74.6 657.3,74.6 657.7,74.6 658.1,74.6 658.6,74.6 659.0,74.6 659.4,74.6 659.8,74.6 660.3,74.6 660.7,74.6 661.1,74.6 661.6,74.6 662.0,74.6 662.4,74.6 662.8,74.6 663.3,74.6 663.7,74.6 664.1,74.6 664.6,74.6 665.0,74.6 665.4,74.6 665.8,74.6 666.3,74.6 666.7,74.6 667.1,74.6 667.5,74.6 668.0,74.6 668.4,74.6 668.8,74.6 669.3,74.6 669.7,74.6 670.1,74.6 670.5,74.6 671.0,74.6 671.4,74.6 671.8,74.6 672.3,74.6 672.7,74.6 673.1,74.6 673.5,74.6 674.0,74.6 674.4,74.6 674.8,74.6 675.3,74.6 675.7,74.6 676.1,74.6 676.5,74.6 677.0,74.6 677.4,74.6 677.8,74.6 678.2,74.6 678.7,74.6 679.1,74.6 679.5,74.6 680.0,74.6 680.4,74.6 680.8,74.6 681.2,74.6 681.7,74.6 682.1,74.6 682.5,74.6 683.0,74.6 683.4,74.6 683.8,74.6 684.2,74.6 684.7,74.6 685.1,74.6 685.5,74.6 686.0,74.6 686.4,74.6 686.8,74.6 687.2,74.6 687.7,74.6 688.1,74.6 688.5,74.6 688.9,74.6 689.4,74.6 689.8,74.6 690.2,74.6 690.7,74.6 691.1,74.6 691.5,74.6 691.9,74.6 692.4,74.6 692.8,74.6 693.2,74.6 693.7,74.6 694.1,74.6 694.5,74.6 694.9,74.6 695.4,74.6 695.8,74.6 696.2,74.6 696.7,74.6 697.1,74.6 697.5,74.6 697.9,74.6 698.4,74.6 698.8,74.6 699.2,74.6 699.6,74.6 700.1,74.6 700.5,74.6 700.9,74.6 701.4,74.6 701.8,74.6 702.2,74.6 702.6,74.6 703.1,74.6 703.5,74.6 703.9,74.6 704.4,74.6 704.8,74.6 705.2,74.6 705.6,74.6 706.1,74.6 706.5,74.6 706.9,74.6 707.4,74.6 707.8,74.6 708.2,74.6 708.6,74.6 709.1,74.6 709.5,74.6 709.9,74.6 710.3,74.6 710.8,74.6 711.2,74.6 711.6,74.6 712.1,74.6 712.5,74.6 712.9,74.6 713.3,74.6 713.8,74.6 714.2,74.6 714.6,74.6 715.1,74.6 715.5,74.6 715.9,74.6 716.3,74.6 716.8,74.6 717.2,74.6 717.6,74.6 718.1,74.6 718.5,74.6 718.9,74.6 719.3,74.6 719.8,74.6 720.2,74.6 720.6,74.6 721.0,74.6 721.5,74.6 721.9,74.6 722.3,74.6 722.8,74.6 723.2,74.6 723.6,74.6 724.0,74.6 724.5,74.6 724.9,74.6 725.3,74.6 725.8,74.6 726.2,74.6 726.6,74.6 727.0,74.6 727.5,74.6 727.9,74.6 728.3,74.6 728.8,74.6 729.2,74.6 729.6,74.6 730.0,74.6 730.5,74.6 730.9,74.6 731.3,74.6 731.7,74.6 732.2,74.6 732.6,74.6 733.0,74.6 733.5,74.6 733.9,74.6 734.3,74.6 734.7,74.6 735.2,74.6 735.6,74.6 736.0,74.6 736.5,74.6 736.9,74.6 737.3,74.6 737.7,74.6 738.2,74.6 738.6,74.6 739.0,74.6 739.5,74.6 739.9,74.6 740.3,74.6 740.7,74.6 741.2,74.6 741.6,74.6 742.0,74.6 742.4,74.6 742.9,74.6 743.3,74.6 743.7,74.6 744.2,74.6 744.6,74.6 745.0,74.6 745.4,74.6 745.9,74.6 746.3,74.6 746.7,74.6 747.2,74.6 747.6,74.6 748.0,74.6 748.4,74.6 748.9,74.6 749.3,74.6 749.7,74.6 750.2,74.6 750.6,74.6 751.0,74.6 751.4,74.6 751.9,74.6 752.3,74.6 752.7,74.6 753.1,74.6 753.6,74.6 754.0,74.6 754.4,74.6 754.9,74.6 755.3,74.6 755.7,74.6 756.1,74.6 756.6,74.6 757.0,74.6 757.4,74.6 757.9,74.6 758.3,74.6 758.7,74.6 759.1,74.6 759.6,74.6 760.0,74.6 760.4,74.6 760.9,74.6 761.3,74.6 761.7,74.6 762.1,74.6 762.6,74.6 763.0,74.6 763.4,74.6 763.8,74.6 764.3,74.6 764.7,74.6 765.1,74.6 765.6,74.6 766.0,74.6 766.4,74.6 766.8,74.6 767.3,74.6 767.7,74.6 768.1,74.6 768.6,74.6 769.0,74.6 769.4,74.6 769.8,74.6 770.3,74.6 770.7,74.6 771.1,74.6 771.6,74.6 772.0,74.6 772.4,74.6 772.8,74.6 773.3,74.6 773.7,74.6 774.1,74.6 774.5,74.6 775.0,74.6 775.4,74.6 775.8,74.6 776.3,74.6 776.7,74.6 777.1,74.6 777.5,74.6 778.0,74.6 778.4,74.6 778.8,74.6 779.3,74.6 779.7,74.6 780.1,74.6 780.5,74.6 781.0,74.6 781.4,74.6 781.8,74.6 782.3,74.6 782.7,74.6 783.1,74.6 783.5,74.6 784.0,74.6 784.4,74.6 784.8,74.6 785.2,74.6 785.7,74.6 786.1,74.6 786.5,74.6 787.0,74.6 787.4,74.6 787.8,74.6 788.2,74.6 788.7,74.6 789.1,74.6 789.5,74.6 790.0,74.6 790.4,74.6 790.8,74.6 791.2,74.6 791.7,74.6 792.1,74.6 792.5,74.6 793.0,74.6 793.4,74.6 793.8,74.6 794.2,74.6 794.7,74.6 795.1,74.6 795.5,74.6 795.9,74.6 796.4,74.6 796.8,74.6 797.2,74.6 797.7,74.6 798.1,74.6 798.5,74.6 798.9,74.6 799.4,74.6 799.8,74.6 800.2,74.6 800.7,74.6 801.1,74.6 801.5,74.6 801.9,74.6 802.4,74.6 802.8,74.6 803.2,74.6 803.7,74.6 804.1,74.6 804.5,74.6 804.9,74.6 805.4,74.6 805.8,74.6 806.2,74.6 806.6,74.6 807.1,74.6 807.5,74.6 807.9,74.6 808.4,74.6 808.8,74.6 809.2,74.6 809.6,74.6 810.1,74.6 810.5,74.6 810.9,74.6 811.4,74.6 811.8,74.6 812.2,74.6 812.6,74.6 813.1,74.6 813.5,74.6 813.9,74.6 814.4,74.6 814.8,74.6 815.2,74.6 815.6,74.6 816.1,74.6 816.5,74.6 816.9,74.6 817.3,74.6 817.8,74.6 818.2,74.6 818.6,74.6 819.1,74.6 819.5,74.6 819.9,74.6" fill="none" stroke="#6adbe8" stroke-width="5.3" stroke-linejoin="round" stroke-linecap="round"/><polyline points="820.3,423.6 820.8,423.6 821.2,423.6 821.6,423.6 822.1,423.6 822.5,423.6 822.9,423.6 823.3,423.6 823.8,423.6 824.2,423.6 824.6,423.6 825.1,423.6 825.5,423.6 825.9,423.6 826.3,423.6 826.8,423.6 827.2,423.6 827.6,423.6 828.0,423.6 828.5,423.6 828.9,423.6 829.3,423.6 829.8,423.6 830.2,423.6 830.6,423.6 831.0,423.6 831.5,423.6 831.9,423.6 832.3,423.6 832.8,423.6 833.2,423.6 833.6,423.6 834.0,423.6 834.5,423.6 834.9,423.6 835.3,423.6 835.8,423.6 836.2,423.6 836.6,423.6 837.0,423.6 837.5,423.6 837.9,423.6 838.3,423.6 838.7,423.6 839.2,423.6 839.6,423.6 840.0,423.6 840.5,423.6 840.9,423.6 841.3,423.6 841.7,423.6 842.2,423.6 842.6,423.6 843.0,423.6 843.5,423.6 843.9,423.6 844.3,423.6 844.7,423.6 845.2,423.6 845.6,423.6 846.0,423.6 846.5,423.6 846.9,423.6 847.3,423.6 847.7,423.6 848.2,423.6 848.6,423.6 849.0,423.6 849.4,423.6 849.9,423.6 850.3,423.6 850.7,423.6 851.2,423.6 851.6,423.6 852.0,423.6 852.4,423.6 852.9,423.6 853.3,423.6 853.7,423.6 854.2,423.6 854.6,423.6 855.0,423.6 855.4,423.6 855.9,423.6 856.3,423.6 856.7,423.6 857.2,423.6 857.6,423.6 858.0,423.6 858.4,423.6 858.9,423.6 859.3,423.6 859.7,423.6 860.1,423.6 860.6,423.6 861.0,423.6 861.4,423.6 861.9,423.6 862.3,423.6 862.7,423.6 863.1,423.6 863.6,423.6 864.0,423.6 864.4,423.6 864.9,423.6 865.3,423.6 865.7,423.6 866.1,423.6 866.6,423.6 867.0,423.6 867.4,423.6 867.9,423.6 868.3,423.6 868.7,423.6 869.1,423.6 869.6,423.6 870.0,423.6 870.4,423.6 870.8,423.6 871.3,423.6 871.7,423.6 872.1,423.6 872.6,423.6 873.0,423.6 873.4,423.6 873.8,423.6 874.3,423.6 874.7,423.6 875.1,423.6 875.6,423.6 876.0,423.6 876.4,423.6 876.8,423.6 877.3,423.6 877.7,423.6 878.1,423.6 878.6,423.6 879.0,423.6 879.4,423.6 879.8,423.6 880.3,423.6 880.7,423.6 881.1,423.6 881.5,423.6 882.0,423.6 882.4,423.6 882.8,423.6 883.3,423.6 883.7,423.6 884.1,423.6 884.5,423.6 885.0,423.6 885.4,423.6 885.8,423.6 886.3,423.6 886.7,423.6 887.1,423.6 887.5,423.6 888.0,423.6 888.4,423.6 888.8,423.6 889.3,423.6 889.7,423.6 890.1,423.6 890.5,423.6 891.0,423.6 891.4,423.6 891.8,423.6 892.2,423.6 892.7,423.6 893.1,423.6 893.5,423.6 894.0,423.6 894.4,423.6 894.8,423.6 895.2,423.6 895.7,423.6 896.1,423.6 896.5,423.6 897.0,423.6 897.4,423.6 897.8,423.6 898.2,423.6 898.7,423.6 899.1,423.6 899.5,423.6 900.0,423.6 900.4,423.6 900.8,423.6 901.2,423.6 901.7,423.6 902.1,423.6 902.5,423.6 902.9,423.6 903.4,423.6 903.8,423.6 904.2,423.6 904.7,423.6 905.1,423.6 905.5,423.6 905.9,423.6 906.4,423.6 906.8,423.6 907.2,423.6 907.7,423.6 908.1,423.6 908.5,423.6 908.9,423.6 909.4,423.6 909.8,423.6 910.2,423.6 910.7,423.6 911.1,423.6 911.5,423.6 911.9,423.6 912.4,423.6 912.8,423.6 913.2,423.6 913.6,423.6 914.1,423.6 914.5,423.6 914.9,423.6 915.4,423.6 915.8,423.6 916.2,423.6 916.6,423.6 917.1,423.6 917.5,423.6 917.9,423.6 918.4,423.6 918.8,423.6 919.2,423.6 919.6,423.6 920.1,423.6 920.5,423.6 920.9,423.6 921.4,423.6 921.8,423.6 922.2,423.6 922.6,423.6 923.1,423.6 923.5,423.6 923.9,423.6 924.3,423.6 924.8,423.6 925.2,423.6 925.6,423.6 926.1,423.6 926.5,423.6 926.9,423.6 927.3,423.6 927.8,423.6 928.2,423.6 928.6,423.6 929.1,423.6 929.5,423.6 929.9,423.6 930.3,423.6 930.8,423.6 931.2,423.6 931.6,423.6 932.1,423.6 932.5,423.6 932.9,423.6 933.3,423.6 933.8,423.6 934.2,423.6 934.6,423.6 935.0,423.6 935.5,423.6 935.9,423.6 936.3,423.6 936.8,423.6 937.2,423.6 937.6,423.6 938.0,423.6 938.5,423.6 938.9,423.6 939.3,423.6 939.8,423.6 940.2,423.6 940.6,423.6 941.0,423.6 941.5,423.6 941.9,423.6 942.3,423.6 942.8,423.6 943.2,423.6 943.6,423.6 944.0,423.6 944.5,423.6 944.9,423.6 945.3,423.6 945.7,423.6 946.2,423.6 946.6,423.6 947.0,423.6 947.5,423.6 947.9,423.6 948.3,423.6 948.7,423.6 949.2,423.6 949.6,423.6 950.0,423.6 950.5,423.6 950.9,423.6 951.3,423.6 951.7,423.6 952.2,423.6 952.6,423.6 953.0,423.6 953.5,423.6 953.9,423.6 954.3,423.6 954.7,423.6 955.2,423.6 955.6,423.6 956.0,423.6 956.4,423.6 956.9,423.6 957.3,423.6 957.7,423.6 958.2,423.6 958.6,423.6 959.0,423.6 959.4,423.6 959.9,423.6 960.3,423.6 960.7,423.6 961.2,423.6 961.6,423.6 962.0,423.6 962.4,423.6 962.9,423.6 963.3,423.6 963.7,423.6 964.2,423.6 964.6,423.6 965.0,423.6 965.4,423.6 965.9,423.6 966.3,423.6 966.7,423.6 967.1,423.6 967.6,423.6 968.0,423.6 968.4,423.6 968.9,423.6 969.3,423.6 969.7,423.6 970.1,423.6 970.6,423.6 971.0,423.6 971.4,423.6 971.9,423.6 972.3,423.6 972.7,423.6 973.1,423.6 973.6,423.6 974.0,423.6 974.4,423.6 974.9,423.6 975.3,423.6 975.7,423.6 976.1,423.6 976.6,423.6 977.0,423.6 977.4,423.6" fill="none" stroke="#6adbe8" stroke-width="5.3" stroke-linejoin="round" stroke-linecap="round"/><line x1="606.0" y1="423.6" x2="606.0" y2="74.6" stroke="#58b8c2" stroke-width="1.3"/><line x1="819.9" y1="423.6" x2="819.9" y2="74.6" stroke="#58b8c2" stroke-width="1.3"/></g><g clip-path="url(#c2)"><polyline points="430.0,713.6 430.4,713.0 430.9,714.1 431.3,715.4 431.7,714.5 432.1,715.6 432.6,713.5 433.0,710.9 433.4,714.6 433.9,714.8 434.3,712.6 434.7,712.9 435.1,713.4 435.6,715.4 436.0,713.7 436.4,712.2 436.9,716.3 437.3,714.5 437.7,717.4 438.1,716.2 438.6,717.3 439.0,714.1 439.4,716.1 439.9,713.1 440.3,713.3 440.7,714.0 441.1,718.6 441.6,714.7 442.0,713.7 442.4,713.4 442.8,716.6 443.3,714.5 443.7,715.5 444.1,715.2 444.6,711.5 445.0,715.2 445.4,713.7 445.8,711.8 446.3,714.8 446.7,713.8 447.1,713.4 447.6,713.5 448.0,716.0 448.4,713.4 448.8,710.9 449.3,716.7 449.7,711.9 450.1,713.4 450.6,714.9 451.0,709.6 451.4,712.1 451.8,716.0 452.3,713.5 452.7,712.5 453.1,714.0 453.5,712.2 454.0,713.7 454.4,712.3 454.8,710.7 455.3,714.9 455.7,713.2 456.1,714.5 456.5,713.3 457.0,716.0 457.4,714.8 457.8,714.0 458.3,711.8 458.7,711.3 459.1,716.2 459.5,715.2 460.0,712.3 460.4,717.6 460.8,714.5 461.3,713.8 461.7,711.1 462.1,712.2 462.5,714.3 463.0,714.3 463.4,714.1 463.8,710.6 464.2,714.5 464.7,714.2 465.1,712.9 465.5,713.8 466.0,714.0 466.4,715.8 466.8,713.6 467.2,714.5 467.7,711.3 468.1,712.3 468.5,713.6 469.0,712.3 469.4,714.3 469.8,711.5 470.2,713.6 470.7,712.4 471.1,716.2 471.5,712.9 472.0,717.0 472.4,717.6 472.8,714.2 473.2,715.4 473.7,713.3 474.1,709.1 474.5,715.3 474.9,714.8 475.4,713.2 475.8,712.6 476.2,714.0 476.7,714.0 477.1,712.2 477.5,712.6 477.9,715.7 478.4,713.8 478.8,713.5 479.2,715.7 479.7,713.1 480.1,715.3 480.5,711.7 480.9,713.2 481.4,713.4 481.8,714.8 482.2,713.8 482.7,717.6 483.1,715.8 483.5,712.9 483.9,717.8 484.4,711.9 484.8,717.1 485.2,712.1 485.6,715.3 486.1,712.1 486.5,713.3 486.9,716.7 487.4,711.1 487.8,710.7 488.2,713.7 488.6,714.1 489.1,713.9 489.5,715.5 489.9,711.4 490.4,714.7 490.8,713.7 491.2,715.2 491.6,714.8 492.1,716.1 492.5,711.1 492.9,713.9 493.4,711.7 493.8,713.6 494.2,715.0 494.6,714.2 495.1,714.7 495.5,713.6 495.9,714.3 496.3,714.2 496.8,716.3 497.2,715.2 497.6,710.3 498.1,714.9 498.5,715.7 498.9,712.9 499.3,710.8 499.8,716.5 500.2,714.0 500.6,714.9 501.1,717.1 501.5,712.1 501.9,713.6 502.3,713.5 502.8,715.1 503.2,712.7 503.6,714.7 504.1,713.9 504.5,715.8 504.9,716.0 505.3,710.9 505.8,714.6 506.2,713.0 506.6,713.7 507.0,714.5 507.5,714.6 507.9,712.3 508.3,714.2 508.8,713.9 509.2,713.6 509.6,711.3 510.0,712.2 510.5,712.8 510.9,714.7 511.3,716.3 511.8,711.7 512.2,711.7 512.6,713.9 513.0,712.5 513.5,712.0 513.9,711.9 514.3,711.8 514.8,714.5 515.2,710.6 515.6,716.1 516.0,711.9 516.5,712.6 516.9,711.9 517.3,709.9 517.7,710.6 518.2,715.9 518.6,717.0 519.0,712.0 519.5,715.6 519.9,713.6 520.3,711.9 520.7,716.9 521.2,717.8 521.6,713.1 522.0,713.5 522.5,714.1 522.9,713.5 523.3,715.3 523.7,716.6 524.2,713.9 524.6,715.5 525.0,716.9 525.5,712.6 525.9,713.7 526.3,712.8 526.7,715.6 527.2,714.9 527.6,715.6 528.0,715.4 528.4,713.2 528.9,715.2 529.3,712.9 529.7,712.9 530.2,709.6 530.6,716.4 531.0,711.8 531.4,713.8 531.9,713.6 532.3,716.5 532.7,714.5 533.2,712.1 533.6,713.8 534.0,713.4 534.4,714.2 534.9,711.3 535.3,713.6 535.7,718.0 536.2,715.0 536.6,717.5 537.0,720.1 537.4,714.7 537.9,710.9 538.3,713.5 538.7,715.9 539.1,715.5 539.6,711.4 540.0,713.3 540.4,713.5 540.9,713.7 541.3,713.5 541.7,712.0 542.1,712.5 542.6,713.2 543.0,715.7 543.4,712.6 543.9,715.0 544.3,711.4 544.7,716.1 545.1,713.9 545.6,713.6 546.0,716.2 546.4,710.2 546.9,710.7 547.3,714.5 547.7,712.1 548.1,712.8 548.6,718.8 549.0,713.1 549.4,713.7 549.8,713.4 550.3,715.7 550.7,714.1 551.1,714.0 551.6,711.2 552.0,712.9 552.4,713.6 552.8,710.6 553.3,714.7 553.7,714.4 554.1,717.2 554.6,710.5 555.0,711.7 555.4,711.8 555.8,712.3 556.3,713.4 556.7,713.2 557.1,714.1 557.6,714.0 558.0,713.5 558.4,710.6 558.8,712.5 559.3,713.7 559.7,714.8 560.1,714.9 560.5,710.4 561.0,712.6 561.4,713.5 561.8,714.3 562.3,715.8 562.7,713.7 563.1,711.9 563.5,714.4 564.0,714.1 564.4,714.0 564.8,713.4 565.3,716.8 565.7,714.1 566.1,715.3 566.5,711.8 567.0,715.1 567.4,712.5 567.8,710.6 568.3,714.2 568.7,714.8 569.1,713.2 569.5,713.6 570.0,715.6 570.4,712.7 570.8,709.6 571.2,714.1 571.7,714.0 572.1,715.7 572.5,713.0 573.0,716.1 573.4,715.8 573.8,711.1 574.2,715.4 574.7,711.5 575.1,710.6 575.5,713.1 576.0,712.5 576.4,709.7 576.8,714.0 577.2,714.8 577.7,716.3 578.1,713.5 578.5,710.7 579.0,711.7 579.4,715.5 579.8,715.3 580.2,714.6 580.7,713.0 581.1,714.0 581.5,713.2 581.9,713.0 582.4,714.2 582.8,713.7 583.2,713.2 583.7,713.8 584.1,712.6 584.5,709.9 584.9,712.4 585.4,713.5 585.8,717.0 586.2,712.8 586.7,717.5 587.1,716.4 587.5,711.9 587.9,712.2 588.4,713.9 588.8,717.0 589.2,714.3 589.7,714.9 590.1,712.3 590.5,709.1 590.9,713.2 591.4,715.1 591.8,715.9 592.2,713.7 592.6,714.0 593.1,715.9 593.5,713.4 593.9,715.9 594.4,711.4 594.8,711.5 595.2,711.4 595.6,714.5 596.1,712.6 596.5,713.9 596.9,714.4 597.4,714.3 597.8,716.2 598.2,716.5 598.6,712.0 599.1,714.0 599.5,713.2 599.9,711.6 600.4,717.0 600.8,715.2 601.2,713.3 601.6,712.8 602.1,714.3 602.5,711.6 602.9,713.2 603.3,716.0 603.8,715.5 604.2,712.0 604.6,712.7 605.1,717.4 605.5,710.9 605.9,712.4 606.3,710.9 606.8,714.4 607.2,714.2 607.6,715.8 608.1,708.6 608.5,710.8 608.9,693.2 609.3,675.3 609.8,647.6 610.2,624.8 610.6,598.2 611.1,575.2 611.5,564.1 611.9,548.7 612.3,543.7 612.8,543.9 613.2,543.1 613.6,545.4 614.0,548.2 614.5,553.4 614.9,558.1 615.3,560.9 615.8,565.5 616.2,568.5 616.6,567.7 617.0,566.8 617.5,572.0 617.9,568.9 618.3,569.8 618.8,569.8 619.2,565.5 619.6,567.6 620.0,563.0 620.5,567.0 620.9,564.3 621.3,565.3 621.8,566.2 622.2,563.4 622.6,564.9 623.0,563.5 623.5,564.9 623.9,567.1 624.3,565.2 624.7,565.0 625.2,563.3 625.6,567.0 626.0,565.4 626.5,568.7 626.9,564.0 627.3,567.5 627.7,568.9 628.2,565.4 628.6,563.1 629.0,568.3 629.5,567.4 629.9,566.7 630.3,567.5 630.7,564.4 631.2,566.8 631.6,566.6 632.0,564.0 632.5,566.7 632.9,564.3 633.3,567.1 633.7,567.6 634.2,568.9 634.6,561.5 635.0,565.8 635.4,564.7 635.9,565.3 636.3,564.9 636.7,565.1 637.2,561.4 637.6,567.3 638.0,568.3 638.4,567.2 638.9,567.9 639.3,563.7 639.7,563.6 640.2,567.1 640.6,568.0 641.0,565.9 641.4,562.4 641.9,570.8 642.3,564.2 642.7,567.3 643.2,563.1 643.6,567.4 644.0,565.8 644.4,568.2 644.9,567.2 645.3,562.5 645.7,563.6 646.1,566.0 646.6,566.9 647.0,569.0 647.4,566.0 647.9,565.3 648.3,565.4 648.7,565.4 649.1,567.4 649.6,565.3 650.0,565.3 650.4,562.6 650.9,561.5 651.3,565.5 651.7,566.7 652.1,565.3 652.6,566.4 653.0,567.1 653.4,566.7 653.9,570.4 654.3,569.3 654.7,573.3 655.1,575.5 655.6,579.5 656.0,583.7 656.4,587.3 656.8,589.0 657.3,592.5 657.7,593.8 658.1,596.9 658.6,602.0 659.0,601.5 659.4,606.5 659.8,607.1 660.3,608.5 660.7,614.0 661.1,611.6 661.6,613.3 662.0,615.8 662.4,618.1 662.8,619.8 663.3,622.8 663.7,623.1 664.1,625.4 664.6,625.8 665.0,630.0 665.4,628.8 665.8,630.6 666.3,632.7 666.7,634.8 667.1,634.4 667.5,640.2 668.0,637.5 668.4,639.3 668.8,640.6 669.3,641.7 669.7,645.1 670.1,645.6 670.5,645.1 671.0,646.7 671.4,648.4 671.8,653.0 672.3,650.1 672.7,650.0 673.1,651.4 673.5,654.0 674.0,658.7 674.4,654.8 674.8,658.0 675.3,663.7 675.7,658.9 676.1,663.6 676.5,664.2 677.0,663.8 677.4,660.9 677.8,665.1 678.2,664.7 678.7,662.6 679.1,663.8 679.5,668.0 680.0,669.1 680.4,671.9 680.8,671.6 681.2,670.1 681.7,670.9 682.1,672.2 682.5,671.2 683.0,675.4 683.4,674.7 683.8,673.8 684.2,674.8 684.7,674.5 685.1,676.5 685.5,678.5 686.0,677.8 686.4,681.1 686.8,683.0 687.2,679.2 687.7,681.0 688.1,680.8 688.5,685.4 688.9,683.3 689.4,684.3 689.8,685.3 690.2,688.6 690.7,685.3 691.1,683.4 691.5,684.9 691.9,687.3 692.4,686.6 692.8,685.5 693.2,693.0 693.7,688.2 694.1,687.3 694.5,687.4 694.9,685.8 695.4,687.4 695.8,689.4 696.2,689.8 696.7,689.3 697.1,692.3 697.5,691.7 697.9,690.2 698.4,688.4 698.8,693.0 699.2,693.1 699.6,693.0 700.1,691.1 700.5,694.1 700.9,691.5 701.4,696.6 701.8,695.4 702.2,695.7 702.6,694.1 703.1,693.9 703.5,699.2 703.9,698.3 704.4,696.1 704.8,698.4 705.2,700.4 705.6,695.6 706.1,696.9 706.5,697.2 706.9,699.3 707.4,696.6 707.8,699.4 708.2,697.0 708.6,701.2 709.1,701.3 709.5,699.4 709.9,701.5 710.3,698.9 710.8,700.0 711.2,702.6 711.6,700.8 712.1,701.8 712.5,699.5 712.9,702.8 713.3,702.6 713.8,699.5 714.2,697.7 714.6,698.3 715.1,702.4 715.5,702.2 715.9,699.8 716.3,703.3 716.8,705.1 717.2,703.1 717.6,702.6 718.1,705.3 718.5,707.1 718.9,706.9 719.3,702.8 719.8,705.8 720.2,704.7 720.6,704.2 721.0,703.5 721.5,705.6 721.9,704.0 722.3,706.9 722.8,706.0 723.2,707.5 723.6,703.3 724.0,705.8 724.5,707.3 724.9,706.7 725.3,706.5 725.8,704.8 726.2,709.5 726.6,708.5 727.0,707.3 727.5,701.6 727.9,704.9 728.3,707.1 728.8,705.6 729.2,703.0 729.6,707.7 730.0,708.0 730.5,705.0 730.9,706.5 731.3,706.3 731.7,708.7 732.2,704.0 732.6,704.5 733.0,706.8 733.5,706.7 733.9,712.2 734.3,707.0 734.7,708.7 735.2,707.5 735.6,707.1 736.0,709.2 736.5,712.0 736.9,708.0 737.3,710.3 737.7,709.5 738.2,710.1 738.6,709.7 739.0,713.7 739.5,706.7 739.9,708.7 740.3,707.1 740.7,705.4 741.2,709.4 741.6,713.1 742.0,711.3 742.4,712.0 742.9,710.7 743.3,709.6 743.7,713.8 744.2,709.2 744.6,712.9 745.0,709.4 745.4,710.3 745.9,710.7 746.3,710.3 746.7,711.3 747.2,711.5 747.6,713.7 748.0,710.4 748.4,706.7 748.9,706.5 749.3,707.9 749.7,709.2 750.2,712.0 750.6,707.8 751.0,710.8 751.4,710.9 751.9,711.4 752.3,710.7 752.7,711.7 753.1,711.1 753.6,713.1 754.0,711.7 754.4,706.5 754.9,711.2 755.3,711.6 755.7,710.1 756.1,709.8 756.6,713.5 757.0,711.7 757.4,709.5 757.9,710.8 758.3,711.1 758.7,708.3 759.1,712.8 759.6,711.3 760.0,712.6 760.4,708.6 760.9,715.5 761.3,712.9 761.7,712.7 762.1,710.4 762.6,710.5 763.0,709.0 763.4,714.9 763.8,710.3 764.3,712.4 764.7,713.2 765.1,710.8 765.6,713.7 766.0,716.1 766.4,712.7 766.8,715.0 767.3,713.3 767.7,711.3 768.1,711.4 768.6,708.9 769.0,712.5 769.4,715.2 769.8,713.6 770.3,714.0 770.7,714.6 771.1,711.3 771.6,713.5 772.0,716.2 772.4,710.9 772.8,712.5 773.3,711.6 773.7,712.1 774.1,711.1 774.5,712.3 775.0,709.9 775.4,711.6 775.8,711.7 776.3,711.6 776.7,715.4 777.1,712.8 777.5,713.0 778.0,712.1 778.4,715.2 778.8,709.3 779.3,712.4 779.7,715.0 780.1,716.0 780.5,713.2 781.0,712.8 781.4,714.1 781.8,712.5 782.3,713.9 782.7,711.6 783.1,714.1 783.5,712.8 784.0,710.8 784.4,707.6 784.8,714.8 785.2,713.7 785.7,714.5 786.1,711.2 786.5,715.1 787.0,713.8 787.4,712.9 787.8,714.8 788.2,714.8 788.7,713.8 789.1,717.1 789.5,715.8 790.0,713.7 790.4,712.6 790.8,713.3 791.2,716.5 791.7,713.9 792.1,711.4 792.5,711.9 793.0,713.1 793.4,714.7 793.8,711.7 794.2,714.2 794.7,715.3 795.1,714.6 795.5,710.1 795.9,712.6 796.4,710.7 796.8,714.0 797.2,711.2 797.7,714.3 798.1,713.4 798.5,708.1 798.9,711.6 799.4,714.1 799.8,713.3 800.2,712.5 800.7,710.7 801.1,714.1 801.5,716.6 801.9,713.7 802.4,713.1 802.8,712.9 803.2,710.5 803.7,712.5 804.1,711.6 804.5,715.4 804.9,711.5 805.4,709.0 805.8,711.7 806.2,712.7 806.6,712.9 807.1,709.7 807.5,715.1 807.9,713.5 808.4,712.3 808.8,711.8 809.2,714.1 809.6,712.6 810.1,713.8 810.5,713.0 810.9,713.5 811.4,715.5 811.8,713.3 812.2,711.5 812.6,715.2 813.1,713.8 813.5,712.0 813.9,715.4 814.4,712.9 814.8,715.4 815.2,711.1 815.6,708.7 816.1,709.3 816.5,713.8 816.9,711.9 817.3,713.1 817.8,713.1 818.2,710.3 818.6,716.0 819.1,711.3 819.5,713.5 819.9,710.6 820.3,713.0 820.8,714.7 821.2,712.8 821.6,711.9 822.1,713.3 822.5,715.6 822.9,731.7 823.3,757.3 823.8,777.4 824.2,804.2 824.6,829.5 825.1,849.9 825.5,863.6 825.9,877.3 826.3,884.2 826.8,885.8 827.2,882.8 827.6,885.5 828.0,876.7 828.5,876.2 828.9,872.9 829.3,864.4 829.8,863.9 830.2,863.9 830.6,860.3 831.0,856.8 831.5,855.9 831.9,859.2 832.3,857.9 832.8,857.9 833.2,861.3 833.6,859.9 834.0,861.3 834.5,862.8 834.9,863.1 835.3,862.3 835.8,862.5 836.2,863.7 836.6,863.4 837.0,860.3 837.5,862.0 837.9,860.5 838.3,859.8 838.7,860.9 839.2,857.5 839.6,863.6 840.0,860.3 840.5,862.5 840.9,858.2 841.3,858.5 841.7,865.8 842.2,863.8 842.6,860.6 843.0,860.4 843.5,860.5 843.9,862.1 844.3,861.1 844.7,860.7 845.2,862.2 845.6,860.0 846.0,866.5 846.5,860.7 846.9,864.1 847.3,860.1 847.7,862.4 848.2,863.8 848.6,861.2 849.0,863.8 849.4,863.8 849.9,865.1 850.3,862.0 850.7,861.0 851.2,860.0 851.6,862.3 852.0,859.9 852.4,862.0 852.9,862.2 853.3,860.8 853.7,859.9 854.2,862.7 854.6,862.5 855.0,862.3 855.4,861.8 855.9,863.8 856.3,859.9 856.7,862.8 857.2,861.1 857.6,863.6 858.0,861.3 858.4,861.2 858.9,862.8 859.3,858.0 859.7,861.3 860.1,858.5 860.6,860.1 861.0,863.3 861.4,862.7 861.9,861.1 862.3,861.9 862.7,861.9 863.1,862.6 863.6,865.6 864.0,862.4 864.4,866.4 864.9,861.3 865.3,863.4 865.7,863.4 866.1,862.4 866.6,861.4 867.0,864.8 867.4,865.5 867.9,864.1 868.3,865.7 868.7,862.6 869.1,855.9 869.6,859.0 870.0,852.9 870.4,853.8 870.8,847.1 871.3,844.9 871.7,840.8 872.1,836.1 872.6,830.4 873.0,830.3 873.4,827.5 873.8,826.8 874.3,821.0 874.7,820.2 875.1,815.7 875.6,815.1 876.0,809.4 876.4,814.7 876.8,809.3 877.3,805.0 877.7,805.5 878.1,804.4 878.6,801.5 879.0,801.8 879.4,797.0 879.8,790.6 880.3,791.4 880.7,794.2 881.1,792.0 881.5,789.4 882.0,785.0 882.4,787.1 882.8,785.3 883.3,780.6 883.7,779.2 884.1,780.3 884.5,780.4 885.0,779.9 885.4,776.9 885.8,778.6 886.3,771.5 886.7,773.0 887.1,769.6 887.5,765.6 888.0,765.9 888.4,769.4 888.8,764.3 889.3,762.6 889.7,765.4 890.1,764.8 890.5,762.1 891.0,764.1 891.4,757.0 891.8,763.8 892.2,760.3 892.7,757.7 893.1,756.8 893.5,755.2 894.0,754.1 894.4,754.3 894.8,750.8 895.2,756.5 895.7,751.5 896.1,752.2 896.5,749.8 897.0,748.9 897.4,750.4 897.8,749.2 898.2,745.7 898.7,745.9 899.1,747.3 899.5,741.3 900.0,740.1 900.4,747.0 900.8,742.9 901.2,738.0 901.7,740.9 902.1,741.4 902.5,741.7 902.9,741.9 903.4,740.7 903.8,740.9 904.2,737.8 904.7,739.6 905.1,739.2 905.5,740.2 905.9,737.5 906.4,738.7 906.8,736.9 907.2,734.0 907.7,734.9 908.1,734.2 908.5,734.1 908.9,734.3 909.4,734.3 909.8,734.3 910.2,731.8 910.7,735.1 911.1,729.9 911.5,732.2 911.9,733.4 912.4,732.5 912.8,732.6 913.2,730.6 913.6,732.0 914.1,728.0 914.5,731.5 914.9,734.2 915.4,730.8 915.8,733.1 916.2,728.9 916.6,726.4 917.1,727.0 917.5,730.7 917.9,729.3 918.4,724.0 918.8,726.6 919.2,727.0 919.6,724.7 920.1,721.6 920.5,723.7 920.9,725.8 921.4,725.1 921.8,724.4 922.2,726.6 922.6,727.3 923.1,724.9 923.5,726.7 923.9,724.7 924.3,724.2 924.8,719.6 925.2,725.7 925.6,724.1 926.1,724.0 926.5,722.6 926.9,721.2 927.3,724.1 927.8,724.6 928.2,726.1 928.6,724.5 929.1,721.4 929.5,722.2 929.9,724.2 930.3,722.8 930.8,721.8 931.2,720.7 931.6,722.8 932.1,721.9 932.5,724.9 932.9,723.5 933.3,717.8 933.8,725.3 934.2,721.5 934.6,720.2 935.0,721.3 935.5,722.0 935.9,720.4 936.3,720.2 936.8,720.2 937.2,723.7 937.6,720.1 938.0,721.4 938.5,720.7 938.9,719.1 939.3,718.2 939.8,717.6 940.2,720.2 940.6,717.3 941.0,716.7 941.5,716.7 941.9,716.1 942.3,719.1 942.8,719.0 943.2,717.0 943.6,721.2 944.0,718.0 944.5,719.4 944.9,719.0 945.3,721.6 945.7,719.9 946.2,718.1 946.6,716.2 947.0,715.9 947.5,718.0 947.9,718.1 948.3,719.3 948.7,716.8 949.2,718.0 949.6,716.3 950.0,713.9 950.5,717.4 950.9,720.2 951.3,718.9 951.7,720.0 952.2,719.5 952.6,714.4 953.0,716.5 953.5,719.9 953.9,715.6 954.3,714.3 954.7,717.5 955.2,718.0 955.6,717.3 956.0,716.0 956.4,715.3 956.9,714.1 957.3,714.0 957.7,714.0 958.2,713.6 958.6,715.0 959.0,719.3 959.4,716.5 959.9,715.5 960.3,716.9 960.7,714.3 961.2,716.7 961.6,717.8 962.0,713.1 962.4,714.6 962.9,715.4 963.3,714.0 963.7,713.7 964.2,715.1 964.6,720.6 965.0,717.0 965.4,716.6 965.9,717.6 966.3,715.2 966.7,713.2 967.1,716.5 967.6,717.7 968.0,711.4 968.4,716.3 968.9,717.8 969.3,714.9 969.7,714.5 970.1,716.7 970.6,713.7 971.0,716.2 971.4,717.1 971.9,714.8 972.3,713.6 972.7,716.4 973.1,714.5 973.6,715.3 974.0,709.5 974.4,716.4 974.9,712.3 975.3,715.1 975.7,715.2 976.1,713.5 976.6,713.1 977.0,712.4 977.4,714.2" fill="none" stroke="#d6398c" stroke-width="1.2"/><g fill="#d6398c"><circle cx="430.0" cy="713.6" r="2.2"/><circle cx="430.4" cy="713.0" r="2.2"/><circle cx="430.9" cy="714.1" r="2.2"/><circle cx="431.3" cy="715.4" r="2.2"/><circle cx="431.7" cy="714.5" r="2.2"/><circle cx="432.1" cy="715.6" r="2.2"/><circle cx="432.6" cy="713.5" r="2.2"/><circle cx="433.0" cy="710.9" r="2.2"/><circle cx="433.4" cy="714.6" r="2.2"/><circle cx="433.9" cy="714.8" r="2.2"/><circle cx="434.3" cy="712.6" r="2.2"/><circle cx="434.7" cy="712.9" r="2.2"/><circle cx="435.1" cy="713.4" r="2.2"/><circle cx="435.6" cy="715.4" r="2.2"/><circle cx="436.0" cy="713.7" r="2.2"/><circle cx="436.4" cy="712.2" r="2.2"/><circle cx="436.9" cy="716.3" r="2.2"/><circle cx="437.3" cy="714.5" r="2.2"/><circle cx="437.7" cy="717.4" r="2.2"/><circle cx="438.1" cy="716.2" r="2.2"/><circle cx="438.6" cy="717.3" r="2.2"/><circle cx="439.0" cy="714.1" r="2.2"/><circle cx="439.4" cy="716.1" r="2.2"/><circle cx="439.9" cy="713.1" r="2.2"/><circle cx="440.3" cy="713.3" r="2.2"/><circle cx="440.7" cy="714.0" r="2.2"/><circle cx="441.1" cy="718.6" r="2.2"/><circle cx="441.6" cy="714.7" r="2.2"/><circle cx="442.0" cy="713.7" r="2.2"/><circle cx="442.4" cy="713.4" r="2.2"/><circle cx="442.8" cy="716.6" r="2.2"/><circle cx="443.3" cy="714.5" r="2.2"/><circle cx="443.7" cy="715.5" r="2.2"/><circle cx="444.1" cy="715.2" r="2.2"/><circle cx="444.6" cy="711.5" r="2.2"/><circle cx="445.0" cy="715.2" r="2.2"/><circle cx="445.4" cy="713.7" r="2.2"/><circle cx="445.8" cy="711.8" r="2.2"/><circle cx="446.3" cy="714.8" r="2.2"/><circle cx="446.7" cy="713.8" r="2.2"/><circle cx="447.1" cy="713.4" r="2.2"/><circle cx="447.6" cy="713.5" r="2.2"/><circle cx="448.0" cy="716.0" r="2.2"/><circle cx="448.4" cy="713.4" r="2.2"/><circle cx="448.8" cy="710.9" r="2.2"/><circle cx="449.3" cy="716.7" r="2.2"/><circle cx="449.7" cy="711.9" r="2.2"/><circle cx="450.1" cy="713.4" r="2.2"/><circle cx="450.6" cy="714.9" r="2.2"/><circle cx="451.0" cy="709.6" r="2.2"/><circle cx="451.4" cy="712.1" r="2.2"/><circle cx="451.8" cy="716.0" r="2.2"/><circle cx="452.3" cy="713.5" r="2.2"/><circle cx="452.7" cy="712.5" r="2.2"/><circle cx="453.1" cy="714.0" r="2.2"/><circle cx="453.5" cy="712.2" r="2.2"/><circle cx="454.0" cy="713.7" r="2.2"/><circle cx="454.4" cy="712.3" r="2.2"/><circle cx="454.8" cy="710.7" r="2.2"/><circle cx="455.3" cy="714.9" r="2.2"/><circle cx="455.7" cy="713.2" r="2.2"/><circle cx="456.1" cy="714.5" r="2.2"/><circle cx="456.5" cy="713.3" r="2.2"/><circle cx="457.0" cy="716.0" r="2.2"/><circle cx="457.4" cy="714.8" r="2.2"/><circle cx="457.8" cy="714.0" r="2.2"/><circle cx="458.3" cy="711.8" r="2.2"/><circle cx="458.7" cy="711.3" r="2.2"/><circle cx="459.1" cy="716.2" r="2.2"/><circle cx="459.5" cy="715.2" r="2.2"/><circle cx="460.0" cy="712.3" r="2.2"/><circle cx="460.4" cy="717.6" r="2.2"/><circle cx="460.8" cy="714.5" r="2.2"/><circle cx="461.3" cy="713.8" r="2.2"/><circle cx="461.7" cy="711.1" r="2.2"/><circle cx="462.1" cy="712.2" r="2.2"/><circle cx="462.5" cy="714.3" r="2.2"/><circle cx="463.0" cy="714.3" r="2.2"/><circle cx="463.4" cy="714.1" r="2.2"/><circle cx="463.8" cy="710.6" r="2.2"/><circle cx="464.2" cy="714.5" r="2.2"/><circle cx="464.7" cy="714.2" r="2.2"/><circle cx="465.1" cy="712.9" r="2.2"/><circle cx="465.5" cy="713.8" r="2.2"/><circle cx="466.0" cy="714.0" r="2.2"/><circle cx="466.4" cy="715.8" r="2.2"/><circle cx="466.8" cy="713.6" r="2.2"/><circle cx="467.2" cy="714.5" r="2.2"/><circle cx="467.7" cy="711.3" r="2.2"/><circle cx="468.1" cy="712.3" r="2.2"/><circle cx="468.5" cy="713.6" r="2.2"/><circle cx="469.0" cy="712.3" r="2.2"/><circle cx="469.4" cy="714.3" r="2.2"/><circle cx="469.8" cy="711.5" r="2.2"/><circle cx="470.2" cy="713.6" r="2.2"/><circle cx="470.7" cy="712.4" r="2.2"/><circle cx="471.1" cy="716.2" r="2.2"/><circle cx="471.5" cy="712.9" r="2.2"/><circle cx="472.0" cy="717.0" r="2.2"/><circle cx="472.4" cy="717.6" r="2.2"/><circle cx="472.8" cy="714.2" r="2.2"/><circle cx="473.2" cy="715.4" r="2.2"/><circle cx="473.7" cy="713.3" r="2.2"/><circle cx="474.1" cy="709.1" r="2.2"/><circle cx="474.5" cy="715.3" r="2.2"/><circle cx="474.9" cy="714.8" r="2.2"/><circle cx="475.4" cy="713.2" r="2.2"/><circle cx="475.8" cy="712.6" r="2.2"/><circle cx="476.2" cy="714.0" r="2.2"/><circle cx="476.7" cy="714.0" r="2.2"/><circle cx="477.1" cy="712.2" r="2.2"/><circle cx="477.5" cy="712.6" r="2.2"/><circle cx="477.9" cy="715.7" r="2.2"/><circle cx="478.4" cy="713.8" r="2.2"/><circle cx="478.8" cy="713.5" r="2.2"/><circle cx="479.2" cy="715.7" r="2.2"/><circle cx="479.7" cy="713.1" r="2.2"/><circle cx="480.1" cy="715.3" r="2.2"/><circle cx="480.5" cy="711.7" r="2.2"/><circle cx="480.9" cy="713.2" r="2.2"/><circle cx="481.4" cy="713.4" r="2.2"/><circle cx="481.8" cy="714.8" r="2.2"/><circle cx="482.2" cy="713.8" r="2.2"/><circle cx="482.7" cy="717.6" r="2.2"/><circle cx="483.1" cy="715.8" r="2.2"/><circle cx="483.5" cy="712.9" r="2.2"/><circle cx="483.9" cy="717.8" r="2.2"/><circle cx="484.4" cy="711.9" r="2.2"/><circle cx="484.8" cy="717.1" r="2.2"/><circle cx="485.2" cy="712.1" r="2.2"/><circle cx="485.6" cy="715.3" r="2.2"/><circle cx="486.1" cy="712.1" r="2.2"/><circle cx="486.5" cy="713.3" r="2.2"/><circle cx="486.9" cy="716.7" r="2.2"/><circle cx="487.4" cy="711.1" r="2.2"/><circle cx="487.8" cy="710.7" r="2.2"/><circle cx="488.2" cy="713.7" r="2.2"/><circle cx="488.6" cy="714.1" r="2.2"/><circle cx="489.1" cy="713.9" r="2.2"/><circle cx="489.5" cy="715.5" r="2.2"/><circle cx="489.9" cy="711.4" r="2.2"/><circle cx="490.4" cy="714.7" r="2.2"/><circle cx="490.8" cy="713.7" r="2.2"/><circle cx="491.2" cy="715.2" r="2.2"/><circle cx="491.6" cy="714.8" r="2.2"/><circle cx="492.1" cy="716.1" r="2.2"/><circle cx="492.5" cy="711.1" r="2.2"/><circle cx="492.9" cy="713.9" r="2.2"/><circle cx="493.4" cy="711.7" r="2.2"/><circle cx="493.8" cy="713.6" r="2.2"/><circle cx="494.2" cy="715.0" r="2.2"/><circle cx="494.6" cy="714.2" r="2.2"/><circle cx="495.1" cy="714.7" r="2.2"/><circle cx="495.5" cy="713.6" r="2.2"/><circle cx="495.9" cy="714.3" r="2.2"/><circle cx="496.3" cy="714.2" r="2.2"/><circle cx="496.8" cy="716.3" r="2.2"/><circle cx="497.2" cy="715.2" r="2.2"/><circle cx="497.6" cy="710.3" r="2.2"/><circle cx="498.1" cy="714.9" r="2.2"/><circle cx="498.5" cy="715.7" r="2.2"/><circle cx="498.9" cy="712.9" r="2.2"/><circle cx="499.3" cy="710.8" r="2.2"/><circle cx="499.8" cy="716.5" r="2.2"/><circle cx="500.2" cy="714.0" r="2.2"/><circle cx="500.6" cy="714.9" r="2.2"/><circle cx="501.1" cy="717.1" r="2.2"/><circle cx="501.5" cy="712.1" r="2.2"/><circle cx="501.9" cy="713.6" r="2.2"/><circle cx="502.3" cy="713.5" r="2.2"/><circle cx="502.8" cy="715.1" r="2.2"/><circle cx="503.2" cy="712.7" r="2.2"/><circle cx="503.6" cy="714.7" r="2.2"/><circle cx="504.1" cy="713.9" r="2.2"/><circle cx="504.5" cy="715.8" r="2.2"/><circle cx="504.9" cy="716.0" r="2.2"/><circle cx="505.3" cy="710.9" r="2.2"/><circle cx="505.8" cy="714.6" r="2.2"/><circle cx="506.2" cy="713.0" r="2.2"/><circle cx="506.6" cy="713.7" r="2.2"/><circle cx="507.0" cy="714.5" r="2.2"/><circle cx="507.5" cy="714.6" r="2.2"/><circle cx="507.9" cy="712.3" r="2.2"/><circle cx="508.3" cy="714.2" r="2.2"/><circle cx="508.8" cy="713.9" r="2.2"/><circle cx="509.2" cy="713.6" r="2.2"/><circle cx="509.6" cy="711.3" r="2.2"/><circle cx="510.0" cy="712.2" r="2.2"/><circle cx="510.5" cy="712.8" r="2.2"/><circle cx="510.9" cy="714.7" r="2.2"/><circle cx="511.3" cy="716.3" r="2.2"/><circle cx="511.8" cy="711.7" r="2.2"/><circle cx="512.2" cy="711.7" r="2.2"/><circle cx="512.6" cy="713.9" r="2.2"/><circle cx="513.0" cy="712.5" r="2.2"/><circle cx="513.5" cy="712.0" r="2.2"/><circle cx="513.9" cy="711.9" r="2.2"/><circle cx="514.3" cy="711.8" r="2.2"/><circle cx="514.8" cy="714.5" r="2.2"/><circle cx="515.2" cy="710.6" r="2.2"/><circle cx="515.6" cy="716.1" r="2.2"/><circle cx="516.0" cy="711.9" r="2.2"/><circle cx="516.5" cy="712.6" r="2.2"/><circle cx="516.9" cy="711.9" r="2.2"/><circle cx="517.3" cy="709.9" r="2.2"/><circle cx="517.7" cy="710.6" r="2.2"/><circle cx="518.2" cy="715.9" r="2.2"/><circle cx="518.6" cy="717.0" r="2.2"/><circle cx="519.0" cy="712.0" r="2.2"/><circle cx="519.5" cy="715.6" r="2.2"/><circle cx="519.9" cy="713.6" r="2.2"/><circle cx="520.3" cy="711.9" r="2.2"/><circle cx="520.7" cy="716.9" r="2.2"/><circle cx="521.2" cy="717.8" r="2.2"/><circle cx="521.6" cy="713.1" r="2.2"/><circle cx="522.0" cy="713.5" r="2.2"/><circle cx="522.5" cy="714.1" r="2.2"/><circle cx="522.9" cy="713.5" r="2.2"/><circle cx="523.3" cy="715.3" r="2.2"/><circle cx="523.7" cy="716.6" r="2.2"/><circle cx="524.2" cy="713.9" r="2.2"/><circle cx="524.6" cy="715.5" r="2.2"/><circle cx="525.0" cy="716.9" r="2.2"/><circle cx="525.5" cy="712.6" r="2.2"/><circle cx="525.9" cy="713.7" r="2.2"/><circle cx="526.3" cy="712.8" r="2.2"/><circle cx="526.7" cy="715.6" r="2.2"/><circle cx="527.2" cy="714.9" r="2.2"/><circle cx="527.6" cy="715.6" r="2.2"/><circle cx="528.0" cy="715.4" r="2.2"/><circle cx="528.4" cy="713.2" r="2.2"/><circle cx="528.9" cy="715.2" r="2.2"/><circle cx="529.3" cy="712.9" r="2.2"/><circle cx="529.7" cy="712.9" r="2.2"/><circle cx="530.2" cy="709.6" r="2.2"/><circle cx="530.6" cy="716.4" r="2.2"/><circle cx="531.0" cy="711.8" r="2.2"/><circle cx="531.4" cy="713.8" r="2.2"/><circle cx="531.9" cy="713.6" r="2.2"/><circle cx="532.3" cy="716.5" r="2.2"/><circle cx="532.7" cy="714.5" r="2.2"/><circle cx="533.2" cy="712.1" r="2.2"/><circle cx="533.6" cy="713.8" r="2.2"/><circle cx="534.0" cy="713.4" r="2.2"/><circle cx="534.4" cy="714.2" r="2.2"/><circle cx="534.9" cy="711.3" r="2.2"/><circle cx="535.3" cy="713.6" r="2.2"/><circle cx="535.7" cy="718.0" r="2.2"/><circle cx="536.2" cy="715.0" r="2.2"/><circle cx="536.6" cy="717.5" r="2.2"/><circle cx="537.0" cy="720.1" r="2.2"/><circle cx="537.4" cy="714.7" r="2.2"/><circle cx="537.9" cy="710.9" r="2.2"/><circle cx="538.3" cy="713.5" r="2.2"/><circle cx="538.7" cy="715.9" r="2.2"/><circle cx="539.1" cy="715.5" r="2.2"/><circle cx="539.6" cy="711.4" r="2.2"/><circle cx="540.0" cy="713.3" r="2.2"/><circle cx="540.4" cy="713.5" r="2.2"/><circle cx="540.9" cy="713.7" r="2.2"/><circle cx="541.3" cy="713.5" r="2.2"/><circle cx="541.7" cy="712.0" r="2.2"/><circle cx="542.1" cy="712.5" r="2.2"/><circle cx="542.6" cy="713.2" r="2.2"/><circle cx="543.0" cy="715.7" r="2.2"/><circle cx="543.4" cy="712.6" r="2.2"/><circle cx="543.9" cy="715.0" r="2.2"/><circle cx="544.3" cy="711.4" r="2.2"/><circle cx="544.7" cy="716.1" r="2.2"/><circle cx="545.1" cy="713.9" r="2.2"/><circle cx="545.6" cy="713.6" r="2.2"/><circle cx="546.0" cy="716.2" r="2.2"/><circle cx="546.4" cy="710.2" r="2.2"/><circle cx="546.9" cy="710.7" r="2.2"/><circle cx="547.3" cy="714.5" r="2.2"/><circle cx="547.7" cy="712.1" r="2.2"/><circle cx="548.1" cy="712.8" r="2.2"/><circle cx="548.6" cy="718.8" r="2.2"/><circle cx="549.0" cy="713.1" r="2.2"/><circle cx="549.4" cy="713.7" r="2.2"/><circle cx="549.8" cy="713.4" r="2.2"/><circle cx="550.3" cy="715.7" r="2.2"/><circle cx="550.7" cy="714.1" r="2.2"/><circle cx="551.1" cy="714.0" r="2.2"/><circle cx="551.6" cy="711.2" r="2.2"/><circle cx="552.0" cy="712.9" r="2.2"/><circle cx="552.4" cy="713.6" r="2.2"/><circle cx="552.8" cy="710.6" r="2.2"/><circle cx="553.3" cy="714.7" r="2.2"/><circle cx="553.7" cy="714.4" r="2.2"/><circle cx="554.1" cy="717.2" r="2.2"/><circle cx="554.6" cy="710.5" r="2.2"/><circle cx="555.0" cy="711.7" r="2.2"/><circle cx="555.4" cy="711.8" r="2.2"/><circle cx="555.8" cy="712.3" r="2.2"/><circle cx="556.3" cy="713.4" r="2.2"/><circle cx="556.7" cy="713.2" r="2.2"/><circle cx="557.1" cy="714.1" r="2.2"/><circle cx="557.6" cy="714.0" r="2.2"/><circle cx="558.0" cy="713.5" r="2.2"/><circle cx="558.4" cy="710.6" r="2.2"/><circle cx="558.8" cy="712.5" r="2.2"/><circle cx="559.3" cy="713.7" r="2.2"/><circle cx="559.7" cy="714.8" r="2.2"/><circle cx="560.1" cy="714.9" r="2.2"/><circle cx="560.5" cy="710.4" r="2.2"/><circle cx="561.0" cy="712.6" r="2.2"/><circle cx="561.4" cy="713.5" r="2.2"/><circle cx="561.8" cy="714.3" r="2.2"/><circle cx="562.3" cy="715.8" r="2.2"/><circle cx="562.7" cy="713.7" r="2.2"/><circle cx="563.1" cy="711.9" r="2.2"/><circle cx="563.5" cy="714.4" r="2.2"/><circle cx="564.0" cy="714.1" r="2.2"/><circle cx="564.4" cy="714.0" r="2.2"/><circle cx="564.8" cy="713.4" r="2.2"/><circle cx="565.3" cy="716.8" r="2.2"/><circle cx="565.7" cy="714.1" r="2.2"/><circle cx="566.1" cy="715.3" r="2.2"/><circle cx="566.5" cy="711.8" r="2.2"/><circle cx="567.0" cy="715.1" r="2.2"/><circle cx="567.4" cy="712.5" r="2.2"/><circle cx="567.8" cy="710.6" r="2.2"/><circle cx="568.3" cy="714.2" r="2.2"/><circle cx="568.7" cy="714.8" r="2.2"/><circle cx="569.1" cy="713.2" r="2.2"/><circle cx="569.5" cy="713.6" r="2.2"/><circle cx="570.0" cy="715.6" r="2.2"/><circle cx="570.4" cy="712.7" r="2.2"/><circle cx="570.8" cy="709.6" r="2.2"/><circle cx="571.2" cy="714.1" r="2.2"/><circle cx="571.7" cy="714.0" r="2.2"/><circle cx="572.1" cy="715.7" r="2.2"/><circle cx="572.5" cy="713.0" r="2.2"/><circle cx="573.0" cy="716.1" r="2.2"/><circle cx="573.4" cy="715.8" r="2.2"/><circle cx="573.8" cy="711.1" r="2.2"/><circle cx="574.2" cy="715.4" r="2.2"/><circle cx="574.7" cy="711.5" r="2.2"/><circle cx="575.1" cy="710.6" r="2.2"/><circle cx="575.5" cy="713.1" r="2.2"/><circle cx="576.0" cy="712.5" r="2.2"/><circle cx="576.4" cy="709.7" r="2.2"/><circle cx="576.8" cy="714.0" r="2.2"/><circle cx="577.2" cy="714.8" r="2.2"/><circle cx="577.7" cy="716.3" r="2.2"/><circle cx="578.1" cy="713.5" r="2.2"/><circle cx="578.5" cy="710.7" r="2.2"/><circle cx="579.0" cy="711.7" r="2.2"/><circle cx="579.4" cy="715.5" r="2.2"/><circle cx="579.8" cy="715.3" r="2.2"/><circle cx="580.2" cy="714.6" r="2.2"/><circle cx="580.7" cy="713.0" r="2.2"/><circle cx="581.1" cy="714.0" r="2.2"/><circle cx="581.5" cy="713.2" r="2.2"/><circle cx="581.9" cy="713.0" r="2.2"/><circle cx="582.4" cy="714.2" r="2.2"/><circle cx="582.8" cy="713.7" r="2.2"/><circle cx="583.2" cy="713.2" r="2.2"/><circle cx="583.7" cy="713.8" r="2.2"/><circle cx="584.1" cy="712.6" r="2.2"/><circle cx="584.5" cy="709.9" r="2.2"/><circle cx="584.9" cy="712.4" r="2.2"/><circle cx="585.4" cy="713.5" r="2.2"/><circle cx="585.8" cy="717.0" r="2.2"/><circle cx="586.2" cy="712.8" r="2.2"/><circle cx="586.7" cy="717.5" r="2.2"/><circle cx="587.1" cy="716.4" r="2.2"/><circle cx="587.5" cy="711.9" r="2.2"/><circle cx="587.9" cy="712.2" r="2.2"/><circle cx="588.4" cy="713.9" r="2.2"/><circle cx="588.8" cy="717.0" r="2.2"/><circle cx="589.2" cy="714.3" r="2.2"/><circle cx="589.7" cy="714.9" r="2.2"/><circle cx="590.1" cy="712.3" r="2.2"/><circle cx="590.5" cy="709.1" r="2.2"/><circle cx="590.9" cy="713.2" r="2.2"/><circle cx="591.4" cy="715.1" r="2.2"/><circle cx="591.8" cy="715.9" r="2.2"/><circle cx="592.2" cy="713.7" r="2.2"/><circle cx="592.6" cy="714.0" r="2.2"/><circle cx="593.1" cy="715.9" r="2.2"/><circle cx="593.5" cy="713.4" r="2.2"/><circle cx="593.9" cy="715.9" r="2.2"/><circle cx="594.4" cy="711.4" r="2.2"/><circle cx="594.8" cy="711.5" r="2.2"/><circle cx="595.2" cy="711.4" r="2.2"/><circle cx="595.6" cy="714.5" r="2.2"/><circle cx="596.1" cy="712.6" r="2.2"/><circle cx="596.5" cy="713.9" r="2.2"/><circle cx="596.9" cy="714.4" r="2.2"/><circle cx="597.4" cy="714.3" r="2.2"/><circle cx="597.8" cy="716.2" r="2.2"/><circle cx="598.2" cy="716.5" r="2.2"/><circle cx="598.6" cy="712.0" r="2.2"/><circle cx="599.1" cy="714.0" r="2.2"/><circle cx="599.5" cy="713.2" r="2.2"/><circle cx="599.9" cy="711.6" r="2.2"/><circle cx="600.4" cy="717.0" r="2.2"/><circle cx="600.8" cy="715.2" r="2.2"/><circle cx="601.2" cy="713.3" r="2.2"/><circle cx="601.6" cy="712.8" r="2.2"/><circle cx="602.1" cy="714.3" r="2.2"/><circle cx="602.5" cy="711.6" r="2.2"/><circle cx="602.9" cy="713.2" r="2.2"/><circle cx="603.3" cy="716.0" r="2.2"/><circle cx="603.8" cy="715.5" r="2.2"/><circle cx="604.2" cy="712.0" r="2.2"/><circle cx="604.6" cy="712.7" r="2.2"/><circle cx="605.1" cy="717.4" r="2.2"/><circle cx="605.5" cy="710.9" r="2.2"/><circle cx="605.9" cy="712.4" r="2.2"/><circle cx="606.3" cy="710.9" r="2.2"/><circle cx="606.8" cy="714.4" r="2.2"/><circle cx="607.2" cy="714.2" r="2.2"/><circle cx="607.6" cy="715.8" r="2.2"/><circle cx="608.1" cy="708.6" r="2.2"/><circle cx="608.5" cy="710.8" r="2.2"/><circle cx="608.9" cy="693.2" r="2.2"/><circle cx="609.3" cy="675.3" r="2.2"/><circle cx="609.8" cy="647.6" r="2.2"/><circle cx="610.2" cy="624.8" r="2.2"/><circle cx="610.6" cy="598.2" r="2.2"/><circle cx="611.1" cy="575.2" r="2.2"/><circle cx="611.5" cy="564.1" r="2.2"/><circle cx="611.9" cy="548.7" r="2.2"/><circle cx="612.3" cy="543.7" r="2.2"/><circle cx="612.8" cy="543.9" r="2.2"/><circle cx="613.2" cy="543.1" r="2.2"/><circle cx="613.6" cy="545.4" r="2.2"/><circle cx="614.0" cy="548.2" r="2.2"/><circle cx="614.5" cy="553.4" r="2.2"/><circle cx="614.9" cy="558.1" r="2.2"/><circle cx="615.3" cy="560.9" r="2.2"/><circle cx="615.8" cy="565.5" r="2.2"/><circle cx="616.2" cy="568.5" r="2.2"/><circle cx="616.6" cy="567.7" r="2.2"/><circle cx="617.0" cy="566.8" r="2.2"/><circle cx="617.5" cy="572.0" r="2.2"/><circle cx="617.9" cy="568.9" r="2.2"/><circle cx="618.3" cy="569.8" r="2.2"/><circle cx="618.8" cy="569.8" r="2.2"/><circle cx="619.2" cy="565.5" r="2.2"/><circle cx="619.6" cy="567.6" r="2.2"/><circle cx="620.0" cy="563.0" r="2.2"/><circle cx="620.5" cy="567.0" r="2.2"/><circle cx="620.9" cy="564.3" r="2.2"/><circle cx="621.3" cy="565.3" r="2.2"/><circle cx="621.8" cy="566.2" r="2.2"/><circle cx="622.2" cy="563.4" r="2.2"/><circle cx="622.6" cy="564.9" r="2.2"/><circle cx="623.0" cy="563.5" r="2.2"/><circle cx="623.5" cy="564.9" r="2.2"/><circle cx="623.9" cy="567.1" r="2.2"/><circle cx="624.3" cy="565.2" r="2.2"/><circle cx="624.7" cy="565.0" r="2.2"/><circle cx="625.2" cy="563.3" r="2.2"/><circle cx="625.6" cy="567.0" r="2.2"/><circle cx="626.0" cy="565.4" r="2.2"/><circle cx="626.5" cy="568.7" r="2.2"/><circle cx="626.9" cy="564.0" r="2.2"/><circle cx="627.3" cy="567.5" r="2.2"/><circle cx="627.7" cy="568.9" r="2.2"/><circle cx="628.2" cy="565.4" r="2.2"/><circle cx="628.6" cy="563.1" r="2.2"/><circle cx="629.0" cy="568.3" r="2.2"/><circle cx="629.5" cy="567.4" r="2.2"/><circle cx="629.9" cy="566.7" r="2.2"/><circle cx="630.3" cy="567.5" r="2.2"/><circle cx="630.7" cy="564.4" r="2.2"/><circle cx="631.2" cy="566.8" r="2.2"/><circle cx="631.6" cy="566.6" r="2.2"/><circle cx="632.0" cy="564.0" r="2.2"/><circle cx="632.5" cy="566.7" r="2.2"/><circle cx="632.9" cy="564.3" r="2.2"/><circle cx="633.3" cy="567.1" r="2.2"/><circle cx="633.7" cy="567.6" r="2.2"/><circle cx="634.2" cy="568.9" r="2.2"/><circle cx="634.6" cy="561.5" r="2.2"/><circle cx="635.0" cy="565.8" r="2.2"/><circle cx="635.4" cy="564.7" r="2.2"/><circle cx="635.9" cy="565.3" r="2.2"/><circle cx="636.3" cy="564.9" r="2.2"/><circle cx="636.7" cy="565.1" r="2.2"/><circle cx="637.2" cy="561.4" r="2.2"/><circle cx="637.6" cy="567.3" r="2.2"/><circle cx="638.0" cy="568.3" r="2.2"/><circle cx="638.4" cy="567.2" r="2.2"/><circle cx="638.9" cy="567.9" r="2.2"/><circle cx="639.3" cy="563.7" r="2.2"/><circle cx="639.7" cy="563.6" r="2.2"/><circle cx="640.2" cy="567.1" r="2.2"/><circle cx="640.6" cy="568.0" r="2.2"/><circle cx="641.0" cy="565.9" r="2.2"/><circle cx="641.4" cy="562.4" r="2.2"/><circle cx="641.9" cy="570.8" r="2.2"/><circle cx="642.3" cy="564.2" r="2.2"/><circle cx="642.7" cy="567.3" r="2.2"/><circle cx="643.2" cy="563.1" r="2.2"/><circle cx="643.6" cy="567.4" r="2.2"/><circle cx="644.0" cy="565.8" r="2.2"/><circle cx="644.4" cy="568.2" r="2.2"/><circle cx="644.9" cy="567.2" r="2.2"/><circle cx="645.3" cy="562.5" r="2.2"/><circle cx="645.7" cy="563.6" r="2.2"/><circle cx="646.1" cy="566.0" r="2.2"/><circle cx="646.6" cy="566.9" r="2.2"/><circle cx="647.0" cy="569.0" r="2.2"/><circle cx="647.4" cy="566.0" r="2.2"/><circle cx="647.9" cy="565.3" r="2.2"/><circle cx="648.3" cy="565.4" r="2.2"/><circle cx="648.7" cy="565.4" r="2.2"/><circle cx="649.1" cy="567.4" r="2.2"/><circle cx="649.6" cy="565.3" r="2.2"/><circle cx="650.0" cy="565.3" r="2.2"/><circle cx="650.4" cy="562.6" r="2.2"/><circle cx="650.9" cy="561.5" r="2.2"/><circle cx="651.3" cy="565.5" r="2.2"/><circle cx="651.7" cy="566.7" r="2.2"/><circle cx="652.1" cy="565.3" r="2.2"/><circle cx="652.6" cy="566.4" r="2.2"/><circle cx="653.0" cy="567.1" r="2.2"/><circle cx="653.4" cy="566.7" r="2.2"/><circle cx="653.9" cy="570.4" r="2.2"/><circle cx="654.3" cy="569.3" r="2.2"/><circle cx="654.7" cy="573.3" r="2.2"/><circle cx="655.1" cy="575.5" r="2.2"/><circle cx="655.6" cy="579.5" r="2.2"/><circle cx="656.0" cy="583.7" r="2.2"/><circle cx="656.4" cy="587.3" r="2.2"/><circle cx="656.8" cy="589.0" r="2.2"/><circle cx="657.3" cy="592.5" r="2.2"/><circle cx="657.7" cy="593.8" r="2.2"/><circle cx="658.1" cy="596.9" r="2.2"/><circle cx="658.6" cy="602.0" r="2.2"/><circle cx="659.0" cy="601.5" r="2.2"/><circle cx="659.4" cy="606.5" r="2.2"/><circle cx="659.8" cy="607.1" r="2.2"/><circle cx="660.3" cy="608.5" r="2.2"/><circle cx="660.7" cy="614.0" r="2.2"/><circle cx="661.1" cy="611.6" r="2.2"/><circle cx="661.6" cy="613.3" r="2.2"/><circle cx="662.0" cy="615.8" r="2.2"/><circle cx="662.4" cy="618.1" r="2.2"/><circle cx="662.8" cy="619.8" r="2.2"/><circle cx="663.3" cy="622.8" r="2.2"/><circle cx="663.7" cy="623.1" r="2.2"/><circle cx="664.1" cy="625.4" r="2.2"/><circle cx="664.6" cy="625.8" r="2.2"/><circle cx="665.0" cy="630.0" r="2.2"/><circle cx="665.4" cy="628.8" r="2.2"/><circle cx="665.8" cy="630.6" r="2.2"/><circle cx="666.3" cy="632.7" r="2.2"/><circle cx="666.7" cy="634.8" r="2.2"/><circle cx="667.1" cy="634.4" r="2.2"/><circle cx="667.5" cy="640.2" r="2.2"/><circle cx="668.0" cy="637.5" r="2.2"/><circle cx="668.4" cy="639.3" r="2.2"/><circle cx="668.8" cy="640.6" r="2.2"/><circle cx="669.3" cy="641.7" r="2.2"/><circle cx="669.7" cy="645.1" r="2.2"/><circle cx="670.1" cy="645.6" r="2.2"/><circle cx="670.5" cy="645.1" r="2.2"/><circle cx="671.0" cy="646.7" r="2.2"/><circle cx="671.4" cy="648.4" r="2.2"/><circle cx="671.8" cy="653.0" r="2.2"/><circle cx="672.3" cy="650.1" r="2.2"/><circle cx="672.7" cy="650.0" r="2.2"/><circle cx="673.1" cy="651.4" r="2.2"/><circle cx="673.5" cy="654.0" r="2.2"/><circle cx="674.0" cy="658.7" r="2.2"/><circle cx="674.4" cy="654.8" r="2.2"/><circle cx="674.8" cy="658.0" r="2.2"/><circle cx="675.3" cy="663.7" r="2.2"/><circle cx="675.7" cy="658.9" r="2.2"/><circle cx="676.1" cy="663.6" r="2.2"/><circle cx="676.5" cy="664.2" r="2.2"/><circle cx="677.0" cy="663.8" r="2.2"/><circle cx="677.4" cy="660.9" r="2.2"/><circle cx="677.8" cy="665.1" r="2.2"/><circle cx="678.2" cy="664.7" r="2.2"/><circle cx="678.7" cy="662.6" r="2.2"/><circle cx="679.1" cy="663.8" r="2.2"/><circle cx="679.5" cy="668.0" r="2.2"/><circle cx="680.0" cy="669.1" r="2.2"/><circle cx="680.4" cy="671.9" r="2.2"/><circle cx="680.8" cy="671.6" r="2.2"/><circle cx="681.2" cy="670.1" r="2.2"/><circle cx="681.7" cy="670.9" r="2.2"/><circle cx="682.1" cy="672.2" r="2.2"/><circle cx="682.5" cy="671.2" r="2.2"/><circle cx="683.0" cy="675.4" r="2.2"/><circle cx="683.4" cy="674.7" r="2.2"/><circle cx="683.8" cy="673.8" r="2.2"/><circle cx="684.2" cy="674.8" r="2.2"/><circle cx="684.7" cy="674.5" r="2.2"/><circle cx="685.1" cy="676.5" r="2.2"/><circle cx="685.5" cy="678.5" r="2.2"/><circle cx="686.0" cy="677.8" r="2.2"/><circle cx="686.4" cy="681.1" r="2.2"/><circle cx="686.8" cy="683.0" r="2.2"/><circle cx="687.2" cy="679.2" r="2.2"/><circle cx="687.7" cy="681.0" r="2.2"/><circle cx="688.1" cy="680.8" r="2.2"/><circle cx="688.5" cy="685.4" r="2.2"/><circle cx="688.9" cy="683.3" r="2.2"/><circle cx="689.4" cy="684.3" r="2.2"/><circle cx="689.8" cy="685.3" r="2.2"/><circle cx="690.2" cy="688.6" r="2.2"/><circle cx="690.7" cy="685.3" r="2.2"/><circle cx="691.1" cy="683.4" r="2.2"/><circle cx="691.5" cy="684.9" r="2.2"/><circle cx="691.9" cy="687.3" r="2.2"/><circle cx="692.4" cy="686.6" r="2.2"/><circle cx="692.8" cy="685.5" r="2.2"/><circle cx="693.2" cy="693.0" r="2.2"/><circle cx="693.7" cy="688.2" r="2.2"/><circle cx="694.1" cy="687.3" r="2.2"/><circle cx="694.5" cy="687.4" r="2.2"/><circle cx="694.9" cy="685.8" r="2.2"/><circle cx="695.4" cy="687.4" r="2.2"/><circle cx="695.8" cy="689.4" r="2.2"/><circle cx="696.2" cy="689.8" r="2.2"/><circle cx="696.7" cy="689.3" r="2.2"/><circle cx="697.1" cy="692.3" r="2.2"/><circle cx="697.5" cy="691.7" r="2.2"/><circle cx="697.9" cy="690.2" r="2.2"/><circle cx="698.4" cy="688.4" r="2.2"/><circle cx="698.8" cy="693.0" r="2.2"/><circle cx="699.2" cy="693.1" r="2.2"/><circle cx="699.6" cy="693.0" r="2.2"/><circle cx="700.1" cy="691.1" r="2.2"/><circle cx="700.5" cy="694.1" r="2.2"/><circle cx="700.9" cy="691.5" r="2.2"/><circle cx="701.4" cy="696.6" r="2.2"/><circle cx="701.8" cy="695.4" r="2.2"/><circle cx="702.2" cy="695.7" r="2.2"/><circle cx="702.6" cy="694.1" r="2.2"/><circle cx="703.1" cy="693.9" r="2.2"/><circle cx="703.5" cy="699.2" r="2.2"/><circle cx="703.9" cy="698.3" r="2.2"/><circle cx="704.4" cy="696.1" r="2.2"/><circle cx="704.8" cy="698.4" r="2.2"/><circle cx="705.2" cy="700.4" r="2.2"/><circle cx="705.6" cy="695.6" r="2.2"/><circle cx="706.1" cy="696.9" r="2.2"/><circle cx="706.5" cy="697.2" r="2.2"/><circle cx="706.9" cy="699.3" r="2.2"/><circle cx="707.4" cy="696.6" r="2.2"/><circle cx="707.8" cy="699.4" r="2.2"/><circle cx="708.2" cy="697.0" r="2.2"/><circle cx="708.6" cy="701.2" r="2.2"/><circle cx="709.1" cy="701.3" r="2.2"/><circle cx="709.5" cy="699.4" r="2.2"/><circle cx="709.9" cy="701.5" r="2.2"/><circle cx="710.3" cy="698.9" r="2.2"/><circle cx="710.8" cy="700.0" r="2.2"/><circle cx="711.2" cy="702.6" r="2.2"/><circle cx="711.6" cy="700.8" r="2.2"/><circle cx="712.1" cy="701.8" r="2.2"/><circle cx="712.5" cy="699.5" r="2.2"/><circle cx="712.9" cy="702.8" r="2.2"/><circle cx="713.3" cy="702.6" r="2.2"/><circle cx="713.8" cy="699.5" r="2.2"/><circle cx="714.2" cy="697.7" r="2.2"/><circle cx="714.6" cy="698.3" r="2.2"/><circle cx="715.1" cy="702.4" r="2.2"/><circle cx="715.5" cy="702.2" r="2.2"/><circle cx="715.9" cy="699.8" r="2.2"/><circle cx="716.3" cy="703.3" r="2.2"/><circle cx="716.8" cy="705.1" r="2.2"/><circle cx="717.2" cy="703.1" r="2.2"/><circle cx="717.6" cy="702.6" r="2.2"/><circle cx="718.1" cy="705.3" r="2.2"/><circle cx="718.5" cy="707.1" r="2.2"/><circle cx="718.9" cy="706.9" r="2.2"/><circle cx="719.3" cy="702.8" r="2.2"/><circle cx="719.8" cy="705.8" r="2.2"/><circle cx="720.2" cy="704.7" r="2.2"/><circle cx="720.6" cy="704.2" r="2.2"/><circle cx="721.0" cy="703.5" r="2.2"/><circle cx="721.5" cy="705.6" r="2.2"/><circle cx="721.9" cy="704.0" r="2.2"/><circle cx="722.3" cy="706.9" r="2.2"/><circle cx="722.8" cy="706.0" r="2.2"/><circle cx="723.2" cy="707.5" r="2.2"/><circle cx="723.6" cy="703.3" r="2.2"/><circle cx="724.0" cy="705.8" r="2.2"/><circle cx="724.5" cy="707.3" r="2.2"/><circle cx="724.9" cy="706.7" r="2.2"/><circle cx="725.3" cy="706.5" r="2.2"/><circle cx="725.8" cy="704.8" r="2.2"/><circle cx="726.2" cy="709.5" r="2.2"/><circle cx="726.6" cy="708.5" r="2.2"/><circle cx="727.0" cy="707.3" r="2.2"/><circle cx="727.5" cy="701.6" r="2.2"/><circle cx="727.9" cy="704.9" r="2.2"/><circle cx="728.3" cy="707.1" r="2.2"/><circle cx="728.8" cy="705.6" r="2.2"/><circle cx="729.2" cy="703.0" r="2.2"/><circle cx="729.6" cy="707.7" r="2.2"/><circle cx="730.0" cy="708.0" r="2.2"/><circle cx="730.5" cy="705.0" r="2.2"/><circle cx="730.9" cy="706.5" r="2.2"/><circle cx="731.3" cy="706.3" r="2.2"/><circle cx="731.7" cy="708.7" r="2.2"/><circle cx="732.2" cy="704.0" r="2.2"/><circle cx="732.6" cy="704.5" r="2.2"/><circle cx="733.0" cy="706.8" r="2.2"/><circle cx="733.5" cy="706.7" r="2.2"/><circle cx="733.9" cy="712.2" r="2.2"/><circle cx="734.3" cy="707.0" r="2.2"/><circle cx="734.7" cy="708.7" r="2.2"/><circle cx="735.2" cy="707.5" r="2.2"/><circle cx="735.6" cy="707.1" r="2.2"/><circle cx="736.0" cy="709.2" r="2.2"/><circle cx="736.5" cy="712.0" r="2.2"/><circle cx="736.9" cy="708.0" r="2.2"/><circle cx="737.3" cy="710.3" r="2.2"/><circle cx="737.7" cy="709.5" r="2.2"/><circle cx="738.2" cy="710.1" r="2.2"/><circle cx="738.6" cy="709.7" r="2.2"/><circle cx="739.0" cy="713.7" r="2.2"/><circle cx="739.5" cy="706.7" r="2.2"/><circle cx="739.9" cy="708.7" r="2.2"/><circle cx="740.3" cy="707.1" r="2.2"/><circle cx="740.7" cy="705.4" r="2.2"/><circle cx="741.2" cy="709.4" r="2.2"/><circle cx="741.6" cy="713.1" r="2.2"/><circle cx="742.0" cy="711.3" r="2.2"/><circle cx="742.4" cy="712.0" r="2.2"/><circle cx="742.9" cy="710.7" r="2.2"/><circle cx="743.3" cy="709.6" r="2.2"/><circle cx="743.7" cy="713.8" r="2.2"/><circle cx="744.2" cy="709.2" r="2.2"/><circle cx="744.6" cy="712.9" r="2.2"/><circle cx="745.0" cy="709.4" r="2.2"/><circle cx="745.4" cy="710.3" r="2.2"/><circle cx="745.9" cy="710.7" r="2.2"/><circle cx="746.3" cy="710.3" r="2.2"/><circle cx="746.7" cy="711.3" r="2.2"/><circle cx="747.2" cy="711.5" r="2.2"/><circle cx="747.6" cy="713.7" r="2.2"/><circle cx="748.0" cy="710.4" r="2.2"/><circle cx="748.4" cy="706.7" r="2.2"/><circle cx="748.9" cy="706.5" r="2.2"/><circle cx="749.3" cy="707.9" r="2.2"/><circle cx="749.7" cy="709.2" r="2.2"/><circle cx="750.2" cy="712.0" r="2.2"/><circle cx="750.6" cy="707.8" r="2.2"/><circle cx="751.0" cy="710.8" r="2.2"/><circle cx="751.4" cy="710.9" r="2.2"/><circle cx="751.9" cy="711.4" r="2.2"/><circle cx="752.3" cy="710.7" r="2.2"/><circle cx="752.7" cy="711.7" r="2.2"/><circle cx="753.1" cy="711.1" r="2.2"/><circle cx="753.6" cy="713.1" r="2.2"/><circle cx="754.0" cy="711.7" r="2.2"/><circle cx="754.4" cy="706.5" r="2.2"/><circle cx="754.9" cy="711.2" r="2.2"/><circle cx="755.3" cy="711.6" r="2.2"/><circle cx="755.7" cy="710.1" r="2.2"/><circle cx="756.1" cy="709.8" r="2.2"/><circle cx="756.6" cy="713.5" r="2.2"/><circle cx="757.0" cy="711.7" r="2.2"/><circle cx="757.4" cy="709.5" r="2.2"/><circle cx="757.9" cy="710.8" r="2.2"/><circle cx="758.3" cy="711.1" r="2.2"/><circle cx="758.7" cy="708.3" r="2.2"/><circle cx="759.1" cy="712.8" r="2.2"/><circle cx="759.6" cy="711.3" r="2.2"/><circle cx="760.0" cy="712.6" r="2.2"/><circle cx="760.4" cy="708.6" r="2.2"/><circle cx="760.9" cy="715.5" r="2.2"/><circle cx="761.3" cy="712.9" r="2.2"/><circle cx="761.7" cy="712.7" r="2.2"/><circle cx="762.1" cy="710.4" r="2.2"/><circle cx="762.6" cy="710.5" r="2.2"/><circle cx="763.0" cy="709.0" r="2.2"/><circle cx="763.4" cy="714.9" r="2.2"/><circle cx="763.8" cy="710.3" r="2.2"/><circle cx="764.3" cy="712.4" r="2.2"/><circle cx="764.7" cy="713.2" r="2.2"/><circle cx="765.1" cy="710.8" r="2.2"/><circle cx="765.6" cy="713.7" r="2.2"/><circle cx="766.0" cy="716.1" r="2.2"/><circle cx="766.4" cy="712.7" r="2.2"/><circle cx="766.8" cy="715.0" r="2.2"/><circle cx="767.3" cy="713.3" r="2.2"/><circle cx="767.7" cy="711.3" r="2.2"/><circle cx="768.1" cy="711.4" r="2.2"/><circle cx="768.6" cy="708.9" r="2.2"/><circle cx="769.0" cy="712.5" r="2.2"/><circle cx="769.4" cy="715.2" r="2.2"/><circle cx="769.8" cy="713.6" r="2.2"/><circle cx="770.3" cy="714.0" r="2.2"/><circle cx="770.7" cy="714.6" r="2.2"/><circle cx="771.1" cy="711.3" r="2.2"/><circle cx="771.6" cy="713.5" r="2.2"/><circle cx="772.0" cy="716.2" r="2.2"/><circle cx="772.4" cy="710.9" r="2.2"/><circle cx="772.8" cy="712.5" r="2.2"/><circle cx="773.3" cy="711.6" r="2.2"/><circle cx="773.7" cy="712.1" r="2.2"/><circle cx="774.1" cy="711.1" r="2.2"/><circle cx="774.5" cy="712.3" r="2.2"/><circle cx="775.0" cy="709.9" r="2.2"/><circle cx="775.4" cy="711.6" r="2.2"/><circle cx="775.8" cy="711.7" r="2.2"/><circle cx="776.3" cy="711.6" r="2.2"/><circle cx="776.7" cy="715.4" r="2.2"/><circle cx="777.1" cy="712.8" r="2.2"/><circle cx="777.5" cy="713.0" r="2.2"/><circle cx="778.0" cy="712.1" r="2.2"/><circle cx="778.4" cy="715.2" r="2.2"/><circle cx="778.8" cy="709.3" r="2.2"/><circle cx="779.3" cy="712.4" r="2.2"/><circle cx="779.7" cy="715.0" r="2.2"/><circle cx="780.1" cy="716.0" r="2.2"/><circle cx="780.5" cy="713.2" r="2.2"/><circle cx="781.0" cy="712.8" r="2.2"/><circle cx="781.4" cy="714.1" r="2.2"/><circle cx="781.8" cy="712.5" r="2.2"/><circle cx="782.3" cy="713.9" r="2.2"/><circle cx="782.7" cy="711.6" r="2.2"/><circle cx="783.1" cy="714.1" r="2.2"/><circle cx="783.5" cy="712.8" r="2.2"/><circle cx="784.0" cy="710.8" r="2.2"/><circle cx="784.4" cy="707.6" r="2.2"/><circle cx="784.8" cy="714.8" r="2.2"/><circle cx="785.2" cy="713.7" r="2.2"/><circle cx="785.7" cy="714.5" r="2.2"/><circle cx="786.1" cy="711.2" r="2.2"/><circle cx="786.5" cy="715.1" r="2.2"/><circle cx="787.0" cy="713.8" r="2.2"/><circle cx="787.4" cy="712.9" r="2.2"/><circle cx="787.8" cy="714.8" r="2.2"/><circle cx="788.2" cy="714.8" r="2.2"/><circle cx="788.7" cy="713.8" r="2.2"/><circle cx="789.1" cy="717.1" r="2.2"/><circle cx="789.5" cy="715.8" r="2.2"/><circle cx="790.0" cy="713.7" r="2.2"/><circle cx="790.4" cy="712.6" r="2.2"/><circle cx="790.8" cy="713.3" r="2.2"/><circle cx="791.2" cy="716.5" r="2.2"/><circle cx="791.7" cy="713.9" r="2.2"/><circle cx="792.1" cy="711.4" r="2.2"/><circle cx="792.5" cy="711.9" r="2.2"/><circle cx="793.0" cy="713.1" r="2.2"/><circle cx="793.4" cy="714.7" r="2.2"/><circle cx="793.8" cy="711.7" r="2.2"/><circle cx="794.2" cy="714.2" r="2.2"/><circle cx="794.7" cy="715.3" r="2.2"/><circle cx="795.1" cy="714.6" r="2.2"/><circle cx="795.5" cy="710.1" r="2.2"/><circle cx="795.9" cy="712.6" r="2.2"/><circle cx="796.4" cy="710.7" r="2.2"/><circle cx="796.8" cy="714.0" r="2.2"/><circle cx="797.2" cy="711.2" r="2.2"/><circle cx="797.7" cy="714.3" r="2.2"/><circle cx="798.1" cy="713.4" r="2.2"/><circle cx="798.5" cy="708.1" r="2.2"/><circle cx="798.9" cy="711.6" r="2.2"/><circle cx="799.4" cy="714.1" r="2.2"/><circle cx="799.8" cy="713.3" r="2.2"/><circle cx="800.2" cy="712.5" r="2.2"/><circle cx="800.7" cy="710.7" r="2.2"/><circle cx="801.1" cy="714.1" r="2.2"/><circle cx="801.5" cy="716.6" r="2.2"/><circle cx="801.9" cy="713.7" r="2.2"/><circle cx="802.4" cy="713.1" r="2.2"/><circle cx="802.8" cy="712.9" r="2.2"/><circle cx="803.2" cy="710.5" r="2.2"/><circle cx="803.7" cy="712.5" r="2.2"/><circle cx="804.1" cy="711.6" r="2.2"/><circle cx="804.5" cy="715.4" r="2.2"/><circle cx="804.9" cy="711.5" r="2.2"/><circle cx="805.4" cy="709.0" r="2.2"/><circle cx="805.8" cy="711.7" r="2.2"/><circle cx="806.2" cy="712.7" r="2.2"/><circle cx="806.6" cy="712.9" r="2.2"/><circle cx="807.1" cy="709.7" r="2.2"/><circle cx="807.5" cy="715.1" r="2.2"/><circle cx="807.9" cy="713.5" r="2.2"/><circle cx="808.4" cy="712.3" r="2.2"/><circle cx="808.8" cy="711.8" r="2.2"/><circle cx="809.2" cy="714.1" r="2.2"/><circle cx="809.6" cy="712.6" r="2.2"/><circle cx="810.1" cy="713.8" r="2.2"/><circle cx="810.5" cy="713.0" r="2.2"/><circle cx="810.9" cy="713.5" r="2.2"/><circle cx="811.4" cy="715.5" r="2.2"/><circle cx="811.8" cy="713.3" r="2.2"/><circle cx="812.2" cy="711.5" r="2.2"/><circle cx="812.6" cy="715.2" r="2.2"/><circle cx="813.1" cy="713.8" r="2.2"/><circle cx="813.5" cy="712.0" r="2.2"/><circle cx="813.9" cy="715.4" r="2.2"/><circle cx="814.4" cy="712.9" r="2.2"/><circle cx="814.8" cy="715.4" r="2.2"/><circle cx="815.2" cy="711.1" r="2.2"/><circle cx="815.6" cy="708.7" r="2.2"/><circle cx="816.1" cy="709.3" r="2.2"/><circle cx="816.5" cy="713.8" r="2.2"/><circle cx="816.9" cy="711.9" r="2.2"/><circle cx="817.3" cy="713.1" r="2.2"/><circle cx="817.8" cy="713.1" r="2.2"/><circle cx="818.2" cy="710.3" r="2.2"/><circle cx="818.6" cy="716.0" r="2.2"/><circle cx="819.1" cy="711.3" r="2.2"/><circle cx="819.5" cy="713.5" r="2.2"/><circle cx="819.9" cy="710.6" r="2.2"/><circle cx="820.3" cy="713.0" r="2.2"/><circle cx="820.8" cy="714.7" r="2.2"/><circle cx="821.2" cy="712.8" r="2.2"/><circle cx="821.6" cy="711.9" r="2.2"/><circle cx="822.1" cy="713.3" r="2.2"/><circle cx="822.5" cy="715.6" r="2.2"/><circle cx="822.9" cy="731.7" r="2.2"/><circle cx="823.3" cy="757.3" r="2.2"/><circle cx="823.8" cy="777.4" r="2.2"/><circle cx="824.2" cy="804.2" r="2.2"/><circle cx="824.6" cy="829.5" r="2.2"/><circle cx="825.1" cy="849.9" r="2.2"/><circle cx="825.5" cy="863.6" r="2.2"/><circle cx="825.9" cy="877.3" r="2.2"/><circle cx="826.3" cy="884.2" r="2.2"/><circle cx="826.8" cy="885.8" r="2.2"/><circle cx="827.2" cy="882.8" r="2.2"/><circle cx="827.6" cy="885.5" r="2.2"/><circle cx="828.0" cy="876.7" r="2.2"/><circle cx="828.5" cy="876.2" r="2.2"/><circle cx="828.9" cy="872.9" r="2.2"/><circle cx="829.3" cy="864.4" r="2.2"/><circle cx="829.8" cy="863.9" r="2.2"/><circle cx="830.2" cy="863.9" r="2.2"/><circle cx="830.6" cy="860.3" r="2.2"/><circle cx="831.0" cy="856.8" r="2.2"/><circle cx="831.5" cy="855.9" r="2.2"/><circle cx="831.9" cy="859.2" r="2.2"/><circle cx="832.3" cy="857.9" r="2.2"/><circle cx="832.8" cy="857.9" r="2.2"/><circle cx="833.2" cy="861.3" r="2.2"/><circle cx="833.6" cy="859.9" r="2.2"/><circle cx="834.0" cy="861.3" r="2.2"/><circle cx="834.5" cy="862.8" r="2.2"/><circle cx="834.9" cy="863.1" r="2.2"/><circle cx="835.3" cy="862.3" r="2.2"/><circle cx="835.8" cy="862.5" r="2.2"/><circle cx="836.2" cy="863.7" r="2.2"/><circle cx="836.6" cy="863.4" r="2.2"/><circle cx="837.0" cy="860.3" r="2.2"/><circle cx="837.5" cy="862.0" r="2.2"/><circle cx="837.9" cy="860.5" r="2.2"/><circle cx="838.3" cy="859.8" r="2.2"/><circle cx="838.7" cy="860.9" r="2.2"/><circle cx="839.2" cy="857.5" r="2.2"/><circle cx="839.6" cy="863.6" r="2.2"/><circle cx="840.0" cy="860.3" r="2.2"/><circle cx="840.5" cy="862.5" r="2.2"/><circle cx="840.9" cy="858.2" r="2.2"/><circle cx="841.3" cy="858.5" r="2.2"/><circle cx="841.7" cy="865.8" r="2.2"/><circle cx="842.2" cy="863.8" r="2.2"/><circle cx="842.6" cy="860.6" r="2.2"/><circle cx="843.0" cy="860.4" r="2.2"/><circle cx="843.5" cy="860.5" r="2.2"/><circle cx="843.9" cy="862.1" r="2.2"/><circle cx="844.3" cy="861.1" r="2.2"/><circle cx="844.7" cy="860.7" r="2.2"/><circle cx="845.2" cy="862.2" r="2.2"/><circle cx="845.6" cy="860.0" r="2.2"/><circle cx="846.0" cy="866.5" r="2.2"/><circle cx="846.5" cy="860.7" r="2.2"/><circle cx="846.9" cy="864.1" r="2.2"/><circle cx="847.3" cy="860.1" r="2.2"/><circle cx="847.7" cy="862.4" r="2.2"/><circle cx="848.2" cy="863.8" r="2.2"/><circle cx="848.6" cy="861.2" r="2.2"/><circle cx="849.0" cy="863.8" r="2.2"/><circle cx="849.4" cy="863.8" r="2.2"/><circle cx="849.9" cy="865.1" r="2.2"/><circle cx="850.3" cy="862.0" r="2.2"/><circle cx="850.7" cy="861.0" r="2.2"/><circle cx="851.2" cy="860.0" r="2.2"/><circle cx="851.6" cy="862.3" r="2.2"/><circle cx="852.0" cy="859.9" r="2.2"/><circle cx="852.4" cy="862.0" r="2.2"/><circle cx="852.9" cy="862.2" r="2.2"/><circle cx="853.3" cy="860.8" r="2.2"/><circle cx="853.7" cy="859.9" r="2.2"/><circle cx="854.2" cy="862.7" r="2.2"/><circle cx="854.6" cy="862.5" r="2.2"/><circle cx="855.0" cy="862.3" r="2.2"/><circle cx="855.4" cy="861.8" r="2.2"/><circle cx="855.9" cy="863.8" r="2.2"/><circle cx="856.3" cy="859.9" r="2.2"/><circle cx="856.7" cy="862.8" r="2.2"/><circle cx="857.2" cy="861.1" r="2.2"/><circle cx="857.6" cy="863.6" r="2.2"/><circle cx="858.0" cy="861.3" r="2.2"/><circle cx="858.4" cy="861.2" r="2.2"/><circle cx="858.9" cy="862.8" r="2.2"/><circle cx="859.3" cy="858.0" r="2.2"/><circle cx="859.7" cy="861.3" r="2.2"/><circle cx="860.1" cy="858.5" r="2.2"/><circle cx="860.6" cy="860.1" r="2.2"/><circle cx="861.0" cy="863.3" r="2.2"/><circle cx="861.4" cy="862.7" r="2.2"/><circle cx="861.9" cy="861.1" r="2.2"/><circle cx="862.3" cy="861.9" r="2.2"/><circle cx="862.7" cy="861.9" r="2.2"/><circle cx="863.1" cy="862.6" r="2.2"/><circle cx="863.6" cy="865.6" r="2.2"/><circle cx="864.0" cy="862.4" r="2.2"/><circle cx="864.4" cy="866.4" r="2.2"/><circle cx="864.9" cy="861.3" r="2.2"/><circle cx="865.3" cy="863.4" r="2.2"/><circle cx="865.7" cy="863.4" r="2.2"/><circle cx="866.1" cy="862.4" r="2.2"/><circle cx="866.6" cy="861.4" r="2.2"/><circle cx="867.0" cy="864.8" r="2.2"/><circle cx="867.4" cy="865.5" r="2.2"/><circle cx="867.9" cy="864.1" r="2.2"/><circle cx="868.3" cy="865.7" r="2.2"/><circle cx="868.7" cy="862.6" r="2.2"/><circle cx="869.1" cy="855.9" r="2.2"/><circle cx="869.6" cy="859.0" r="2.2"/><circle cx="870.0" cy="852.9" r="2.2"/><circle cx="870.4" cy="853.8" r="2.2"/><circle cx="870.8" cy="847.1" r="2.2"/><circle cx="871.3" cy="844.9" r="2.2"/><circle cx="871.7" cy="840.8" r="2.2"/><circle cx="872.1" cy="836.1" r="2.2"/><circle cx="872.6" cy="830.4" r="2.2"/><circle cx="873.0" cy="830.3" r="2.2"/><circle cx="873.4" cy="827.5" r="2.2"/><circle cx="873.8" cy="826.8" r="2.2"/><circle cx="874.3" cy="821.0" r="2.2"/><circle cx="874.7" cy="820.2" r="2.2"/><circle cx="875.1" cy="815.7" r="2.2"/><circle cx="875.6" cy="815.1" r="2.2"/><circle cx="876.0" cy="809.4" r="2.2"/><circle cx="876.4" cy="814.7" r="2.2"/><circle cx="876.8" cy="809.3" r="2.2"/><circle cx="877.3" cy="805.0" r="2.2"/><circle cx="877.7" cy="805.5" r="2.2"/><circle cx="878.1" cy="804.4" r="2.2"/><circle cx="878.6" cy="801.5" r="2.2"/><circle cx="879.0" cy="801.8" r="2.2"/><circle cx="879.4" cy="797.0" r="2.2"/><circle cx="879.8" cy="790.6" r="2.2"/><circle cx="880.3" cy="791.4" r="2.2"/><circle cx="880.7" cy="794.2" r="2.2"/><circle cx="881.1" cy="792.0" r="2.2"/><circle cx="881.5" cy="789.4" r="2.2"/><circle cx="882.0" cy="785.0" r="2.2"/><circle cx="882.4" cy="787.1" r="2.2"/><circle cx="882.8" cy="785.3" r="2.2"/><circle cx="883.3" cy="780.6" r="2.2"/><circle cx="883.7" cy="779.2" r="2.2"/><circle cx="884.1" cy="780.3" r="2.2"/><circle cx="884.5" cy="780.4" r="2.2"/><circle cx="885.0" cy="779.9" r="2.2"/><circle cx="885.4" cy="776.9" r="2.2"/><circle cx="885.8" cy="778.6" r="2.2"/><circle cx="886.3" cy="771.5" r="2.2"/><circle cx="886.7" cy="773.0" r="2.2"/><circle cx="887.1" cy="769.6" r="2.2"/><circle cx="887.5" cy="765.6" r="2.2"/><circle cx="888.0" cy="765.9" r="2.2"/><circle cx="888.4" cy="769.4" r="2.2"/><circle cx="888.8" cy="764.3" r="2.2"/><circle cx="889.3" cy="762.6" r="2.2"/><circle cx="889.7" cy="765.4" r="2.2"/><circle cx="890.1" cy="764.8" r="2.2"/><circle cx="890.5" cy="762.1" r="2.2"/><circle cx="891.0" cy="764.1" r="2.2"/><circle cx="891.4" cy="757.0" r="2.2"/><circle cx="891.8" cy="763.8" r="2.2"/><circle cx="892.2" cy="760.3" r="2.2"/><circle cx="892.7" cy="757.7" r="2.2"/><circle cx="893.1" cy="756.8" r="2.2"/><circle cx="893.5" cy="755.2" r="2.2"/><circle cx="894.0" cy="754.1" r="2.2"/><circle cx="894.4" cy="754.3" r="2.2"/><circle cx="894.8" cy="750.8" r="2.2"/><circle cx="895.2" cy="756.5" r="2.2"/><circle cx="895.7" cy="751.5" r="2.2"/><circle cx="896.1" cy="752.2" r="2.2"/><circle cx="896.5" cy="749.8" r="2.2"/><circle cx="897.0" cy="748.9" r="2.2"/><circle cx="897.4" cy="750.4" r="2.2"/><circle cx="897.8" cy="749.2" r="2.2"/><circle cx="898.2" cy="745.7" r="2.2"/><circle cx="898.7" cy="745.9" r="2.2"/><circle cx="899.1" cy="747.3" r="2.2"/><circle cx="899.5" cy="741.3" r="2.2"/><circle cx="900.0" cy="740.1" r="2.2"/><circle cx="900.4" cy="747.0" r="2.2"/><circle cx="900.8" cy="742.9" r="2.2"/><circle cx="901.2" cy="738.0" r="2.2"/><circle cx="901.7" cy="740.9" r="2.2"/><circle cx="902.1" cy="741.4" r="2.2"/><circle cx="902.5" cy="741.7" r="2.2"/><circle cx="902.9" cy="741.9" r="2.2"/><circle cx="903.4" cy="740.7" r="2.2"/><circle cx="903.8" cy="740.9" r="2.2"/><circle cx="904.2" cy="737.8" r="2.2"/><circle cx="904.7" cy="739.6" r="2.2"/><circle cx="905.1" cy="739.2" r="2.2"/><circle cx="905.5" cy="740.2" r="2.2"/><circle cx="905.9" cy="737.5" r="2.2"/><circle cx="906.4" cy="738.7" r="2.2"/><circle cx="906.8" cy="736.9" r="2.2"/><circle cx="907.2" cy="734.0" r="2.2"/><circle cx="907.7" cy="734.9" r="2.2"/><circle cx="908.1" cy="734.2" r="2.2"/><circle cx="908.5" cy="734.1" r="2.2"/><circle cx="908.9" cy="734.3" r="2.2"/><circle cx="909.4" cy="734.3" r="2.2"/><circle cx="909.8" cy="734.3" r="2.2"/><circle cx="910.2" cy="731.8" r="2.2"/><circle cx="910.7" cy="735.1" r="2.2"/><circle cx="911.1" cy="729.9" r="2.2"/><circle cx="911.5" cy="732.2" r="2.2"/><circle cx="911.9" cy="733.4" r="2.2"/><circle cx="912.4" cy="732.5" r="2.2"/><circle cx="912.8" cy="732.6" r="2.2"/><circle cx="913.2" cy="730.6" r="2.2"/><circle cx="913.6" cy="732.0" r="2.2"/><circle cx="914.1" cy="728.0" r="2.2"/><circle cx="914.5" cy="731.5" r="2.2"/><circle cx="914.9" cy="734.2" r="2.2"/><circle cx="915.4" cy="730.8" r="2.2"/><circle cx="915.8" cy="733.1" r="2.2"/><circle cx="916.2" cy="728.9" r="2.2"/><circle cx="916.6" cy="726.4" r="2.2"/><circle cx="917.1" cy="727.0" r="2.2"/><circle cx="917.5" cy="730.7" r="2.2"/><circle cx="917.9" cy="729.3" r="2.2"/><circle cx="918.4" cy="724.0" r="2.2"/><circle cx="918.8" cy="726.6" r="2.2"/><circle cx="919.2" cy="727.0" r="2.2"/><circle cx="919.6" cy="724.7" r="2.2"/><circle cx="920.1" cy="721.6" r="2.2"/><circle cx="920.5" cy="723.7" r="2.2"/><circle cx="920.9" cy="725.8" r="2.2"/><circle cx="921.4" cy="725.1" r="2.2"/><circle cx="921.8" cy="724.4" r="2.2"/><circle cx="922.2" cy="726.6" r="2.2"/><circle cx="922.6" cy="727.3" r="2.2"/><circle cx="923.1" cy="724.9" r="2.2"/><circle cx="923.5" cy="726.7" r="2.2"/><circle cx="923.9" cy="724.7" r="2.2"/><circle cx="924.3" cy="724.2" r="2.2"/><circle cx="924.8" cy="719.6" r="2.2"/><circle cx="925.2" cy="725.7" r="2.2"/><circle cx="925.6" cy="724.1" r="2.2"/><circle cx="926.1" cy="724.0" r="2.2"/><circle cx="926.5" cy="722.6" r="2.2"/><circle cx="926.9" cy="721.2" r="2.2"/><circle cx="927.3" cy="724.1" r="2.2"/><circle cx="927.8" cy="724.6" r="2.2"/><circle cx="928.2" cy="726.1" r="2.2"/><circle cx="928.6" cy="724.5" r="2.2"/><circle cx="929.1" cy="721.4" r="2.2"/><circle cx="929.5" cy="722.2" r="2.2"/><circle cx="929.9" cy="724.2" r="2.2"/><circle cx="930.3" cy="722.8" r="2.2"/><circle cx="930.8" cy="721.8" r="2.2"/><circle cx="931.2" cy="720.7" r="2.2"/><circle cx="931.6" cy="722.8" r="2.2"/><circle cx="932.1" cy="721.9" r="2.2"/><circle cx="932.5" cy="724.9" r="2.2"/><circle cx="932.9" cy="723.5" r="2.2"/><circle cx="933.3" cy="717.8" r="2.2"/><circle cx="933.8" cy="725.3" r="2.2"/><circle cx="934.2" cy="721.5" r="2.2"/><circle cx="934.6" cy="720.2" r="2.2"/><circle cx="935.0" cy="721.3" r="2.2"/><circle cx="935.5" cy="722.0" r="2.2"/><circle cx="935.9" cy="720.4" r="2.2"/><circle cx="936.3" cy="720.2" r="2.2"/><circle cx="936.8" cy="720.2" r="2.2"/><circle cx="937.2" cy="723.7" r="2.2"/><circle cx="937.6" cy="720.1" r="2.2"/><circle cx="938.0" cy="721.4" r="2.2"/><circle cx="938.5" cy="720.7" r="2.2"/><circle cx="938.9" cy="719.1" r="2.2"/><circle cx="939.3" cy="718.2" r="2.2"/><circle cx="939.8" cy="717.6" r="2.2"/><circle cx="940.2" cy="720.2" r="2.2"/><circle cx="940.6" cy="717.3" r="2.2"/><circle cx="941.0" cy="716.7" r="2.2"/><circle cx="941.5" cy="716.7" r="2.2"/><circle cx="941.9" cy="716.1" r="2.2"/><circle cx="942.3" cy="719.1" r="2.2"/><circle cx="942.8" cy="719.0" r="2.2"/><circle cx="943.2" cy="717.0" r="2.2"/><circle cx="943.6" cy="721.2" r="2.2"/><circle cx="944.0" cy="718.0" r="2.2"/><circle cx="944.5" cy="719.4" r="2.2"/><circle cx="944.9" cy="719.0" r="2.2"/><circle cx="945.3" cy="721.6" r="2.2"/><circle cx="945.7" cy="719.9" r="2.2"/><circle cx="946.2" cy="718.1" r="2.2"/><circle cx="946.6" cy="716.2" r="2.2"/><circle cx="947.0" cy="715.9" r="2.2"/><circle cx="947.5" cy="718.0" r="2.2"/><circle cx="947.9" cy="718.1" r="2.2"/><circle cx="948.3" cy="719.3" r="2.2"/><circle cx="948.7" cy="716.8" r="2.2"/><circle cx="949.2" cy="718.0" r="2.2"/><circle cx="949.6" cy="716.3" r="2.2"/><circle cx="950.0" cy="713.9" r="2.2"/><circle cx="950.5" cy="717.4" r="2.2"/><circle cx="950.9" cy="720.2" r="2.2"/><circle cx="951.3" cy="718.9" r="2.2"/><circle cx="951.7" cy="720.0" r="2.2"/><circle cx="952.2" cy="719.5" r="2.2"/><circle cx="952.6" cy="714.4" r="2.2"/><circle cx="953.0" cy="716.5" r="2.2"/><circle cx="953.5" cy="719.9" r="2.2"/><circle cx="953.9" cy="715.6" r="2.2"/><circle cx="954.3" cy="714.3" r="2.2"/><circle cx="954.7" cy="717.5" r="2.2"/><circle cx="955.2" cy="718.0" r="2.2"/><circle cx="955.6" cy="717.3" r="2.2"/><circle cx="956.0" cy="716.0" r="2.2"/><circle cx="956.4" cy="715.3" r="2.2"/><circle cx="956.9" cy="714.1" r="2.2"/><circle cx="957.3" cy="714.0" r="2.2"/><circle cx="957.7" cy="714.0" r="2.2"/><circle cx="958.2" cy="713.6" r="2.2"/><circle cx="958.6" cy="715.0" r="2.2"/><circle cx="959.0" cy="719.3" r="2.2"/><circle cx="959.4" cy="716.5" r="2.2"/><circle cx="959.9" cy="715.5" r="2.2"/><circle cx="960.3" cy="716.9" r="2.2"/><circle cx="960.7" cy="714.3" r="2.2"/><circle cx="961.2" cy="716.7" r="2.2"/><circle cx="961.6" cy="717.8" r="2.2"/><circle cx="962.0" cy="713.1" r="2.2"/><circle cx="962.4" cy="714.6" r="2.2"/><circle cx="962.9" cy="715.4" r="2.2"/><circle cx="963.3" cy="714.0" r="2.2"/><circle cx="963.7" cy="713.7" r="2.2"/><circle cx="964.2" cy="715.1" r="2.2"/><circle cx="964.6" cy="720.6" r="2.2"/><circle cx="965.0" cy="717.0" r="2.2"/><circle cx="965.4" cy="716.6" r="2.2"/><circle cx="965.9" cy="717.6" r="2.2"/><circle cx="966.3" cy="715.2" r="2.2"/><circle cx="966.7" cy="713.2" r="2.2"/><circle cx="967.1" cy="716.5" r="2.2"/><circle cx="967.6" cy="717.7" r="2.2"/><circle cx="968.0" cy="711.4" r="2.2"/><circle cx="968.4" cy="716.3" r="2.2"/><circle cx="968.9" cy="717.8" r="2.2"/><circle cx="969.3" cy="714.9" r="2.2"/><circle cx="969.7" cy="714.5" r="2.2"/><circle cx="970.1" cy="716.7" r="2.2"/><circle cx="970.6" cy="713.7" r="2.2"/><circle cx="971.0" cy="716.2" r="2.2"/><circle cx="971.4" cy="717.1" r="2.2"/><circle cx="971.9" cy="714.8" r="2.2"/><circle cx="972.3" cy="713.6" r="2.2"/><circle cx="972.7" cy="716.4" r="2.2"/><circle cx="973.1" cy="714.5" r="2.2"/><circle cx="973.6" cy="715.3" r="2.2"/><circle cx="974.0" cy="709.5" r="2.2"/><circle cx="974.4" cy="716.4" r="2.2"/><circle cx="974.9" cy="712.3" r="2.2"/><circle cx="975.3" cy="715.1" r="2.2"/><circle cx="975.7" cy="715.2" r="2.2"/><circle cx="976.1" cy="713.5" r="2.2"/><circle cx="976.6" cy="713.1" r="2.2"/><circle cx="977.0" cy="712.4" r="2.2"/><circle cx="977.4" cy="714.2" r="2.2"/><circle cx="608.7" cy="706.0" r="2.2"/><circle cx="609.1" cy="687.0" r="2.2"/><circle cx="609.6" cy="660.1" r="2.2"/><circle cx="610.0" cy="633.3" r="2.2"/><circle cx="610.4" cy="606.1" r="2.2"/><circle cx="610.8" cy="585.9" r="2.2"/><circle cx="611.3" cy="566.5" r="2.2"/><circle cx="611.7" cy="552.4" r="2.2"/><circle cx="612.1" cy="546.7" r="2.2"/><circle cx="822.7" cy="725.5" r="2.2"/><circle cx="823.1" cy="743.7" r="2.2"/><circle cx="823.6" cy="769.0" r="2.2"/><circle cx="824.0" cy="789.2" r="2.2"/><circle cx="824.4" cy="819.9" r="2.2"/><circle cx="824.8" cy="837.8" r="2.2"/><circle cx="825.3" cy="857.2" r="2.2"/><circle cx="825.7" cy="868.0" r="2.2"/><circle cx="826.1" cy="878.0" r="2.2"/></g><polyline points="430.0,713.6 430.4,713.6 430.9,713.6 431.3,713.6 431.7,713.6 432.1,713.6 432.6,713.6 433.0,713.6 433.4,713.6 433.9,713.6 434.3,713.6 434.7,713.6 435.1,713.6 435.6,713.6 436.0,713.6 436.4,713.6 436.9,713.6 437.3,713.6 437.7,713.6 438.1,713.6 438.6,713.6 439.0,713.6 439.4,713.6 439.9,713.6 440.3,713.6 440.7,713.6 441.1,713.6 441.6,713.6 442.0,713.6 442.4,713.6 442.8,713.6 443.3,713.6 443.7,713.6 444.1,713.6 444.6,713.6 445.0,713.6 445.4,713.6 445.8,713.6 446.3,713.6 446.7,713.6 447.1,713.6 447.6,713.6 448.0,713.6 448.4,713.6 448.8,713.6 449.3,713.6 449.7,713.6 450.1,713.6 450.6,713.6 451.0,713.6 451.4,713.6 451.8,713.6 452.3,713.6 452.7,713.6 453.1,713.6 453.5,713.6 454.0,713.6 454.4,713.6 454.8,713.6 455.3,713.6 455.7,713.6 456.1,713.6 456.5,713.6 457.0,713.6 457.4,713.6 457.8,713.6 458.3,713.6 458.7,713.6 459.1,713.6 459.5,713.6 460.0,713.6 460.4,713.6 460.8,713.6 461.3,713.6 461.7,713.6 462.1,713.6 462.5,713.6 463.0,713.6 463.4,713.6 463.8,713.6 464.2,713.6 464.7,713.6 465.1,713.6 465.5,713.6 466.0,713.6 466.4,713.6 466.8,713.6 467.2,713.6 467.7,713.6 468.1,713.6 468.5,713.6 469.0,713.6 469.4,713.6 469.8,713.6 470.2,713.6 470.7,713.6 471.1,713.6 471.5,713.6 472.0,713.6 472.4,713.6 472.8,713.6 473.2,713.6 473.7,713.6 474.1,713.6 474.5,713.6 474.9,713.6 475.4,713.6 475.8,713.6 476.2,713.6 476.7,713.6 477.1,713.6 477.5,713.6 477.9,713.6 478.4,713.6 478.8,713.6 479.2,713.6 479.7,713.6 480.1,713.6 480.5,713.6 480.9,713.6 481.4,713.6 481.8,713.6 482.2,713.6 482.7,713.6 483.1,713.6 483.5,713.6 483.9,713.6 484.4,713.6 484.8,713.6 485.2,713.6 485.6,713.6 486.1,713.6 486.5,713.6 486.9,713.6 487.4,713.6 487.8,713.6 488.2,713.6 488.6,713.6 489.1,713.6 489.5,713.6 489.9,713.6 490.4,713.6 490.8,713.6 491.2,713.6 491.6,713.6 492.1,713.6 492.5,713.6 492.9,713.6 493.4,713.6 493.8,713.6 494.2,713.6 494.6,713.6 495.1,713.6 495.5,713.6 495.9,713.6 496.3,713.6 496.8,713.6 497.2,713.6 497.6,713.6 498.1,713.6 498.5,713.6 498.9,713.6 499.3,713.6 499.8,713.6 500.2,713.6 500.6,713.6 501.1,713.6 501.5,713.6 501.9,713.6 502.3,713.6 502.8,713.6 503.2,713.6 503.6,713.6 504.1,713.6 504.5,713.6 504.9,713.6 505.3,713.6 505.8,713.6 506.2,713.6 506.6,713.6 507.0,713.6 507.5,713.6 507.9,713.6 508.3,713.6 508.8,713.6 509.2,713.6 509.6,713.6 510.0,713.6 510.5,713.6 510.9,713.6 511.3,713.6 511.8,713.6 512.2,713.6 512.6,713.6 513.0,713.6 513.5,713.6 513.9,713.6 514.3,713.6 514.8,713.6 515.2,713.6 515.6,713.6 516.0,713.6 516.5,713.6 516.9,713.6 517.3,713.6 517.7,713.6 518.2,713.6 518.6,713.6 519.0,713.6 519.5,713.6 519.9,713.6 520.3,713.6 520.7,713.6 521.2,713.6 521.6,713.6 522.0,713.6 522.5,713.6 522.9,713.6 523.3,713.6 523.7,713.6 524.2,713.6 524.6,713.6 525.0,713.6 525.5,713.6 525.9,713.6 526.3,713.6 526.7,713.6 527.2,713.6 527.6,713.6 528.0,713.6 528.4,713.6 528.9,713.6 529.3,713.6 529.7,713.6 530.2,713.6 530.6,713.6 531.0,713.6 531.4,713.6 531.9,713.6 532.3,713.6 532.7,713.6 533.2,713.6 533.6,713.6 534.0,713.6 534.4,713.6 534.9,713.6 535.3,713.6 535.7,713.6 536.2,713.6 536.6,713.6 537.0,713.6 537.4,713.6 537.9,713.6 538.3,713.6 538.7,713.6 539.1,713.6 539.6,713.6 540.0,713.6 540.4,713.6 540.9,713.6 541.3,713.6 541.7,713.6 542.1,713.6 542.6,713.6 543.0,713.6 543.4,713.6 543.9,713.6 544.3,713.6 544.7,713.6 545.1,713.6 545.6,713.6 546.0,713.6 546.4,713.6 546.9,713.6 547.3,713.6 547.7,713.6 548.1,713.6 548.6,713.6 549.0,713.6 549.4,713.6 549.8,713.6 550.3,713.6 550.7,713.6 551.1,713.6 551.6,713.6 552.0,713.6 552.4,713.6 552.8,713.6 553.3,713.6 553.7,713.6 554.1,713.6 554.6,713.6 555.0,713.6 555.4,713.6 555.8,713.6 556.3,713.6 556.7,713.6 557.1,713.6 557.6,713.6 558.0,713.6 558.4,713.6 558.8,713.6 559.3,713.6 559.7,713.6 560.1,713.6 560.5,713.6 561.0,713.6 561.4,713.6 561.8,713.6 562.3,713.6 562.7,713.6 563.1,713.6 563.5,713.6 564.0,713.6 564.4,713.6 564.8,713.6 565.3,713.6 565.7,713.6 566.1,713.6 566.5,713.6 567.0,713.6 567.4,713.6 567.8,713.6 568.3,713.6 568.7,713.6 569.1,713.6 569.5,713.6 570.0,713.6 570.4,713.6 570.8,713.6 571.2,713.6 571.7,713.6 572.1,713.6 572.5,713.6 573.0,713.6 573.4,713.6 573.8,713.6 574.2,713.6 574.7,713.6 575.1,713.6 575.5,713.6 576.0,713.6 576.4,713.6 576.8,713.6 577.2,713.6 577.7,713.6 578.1,713.6 578.5,713.6 579.0,713.6 579.4,713.6 579.8,713.6 580.2,713.6 580.7,713.6 581.1,713.6 581.5,713.6 581.9,713.6 582.4,713.6 582.8,713.6 583.2,713.6 583.7,713.6 584.1,713.6 584.5,713.6 584.9,713.6 585.4,713.6 585.8,713.6 586.2,713.6 586.7,713.6 587.1,713.6 587.5,713.6 587.9,713.6 588.4,713.6 588.8,713.6 589.2,713.6 589.7,713.6 590.1,713.6 590.5,713.6 590.9,713.6 591.4,713.6 591.8,713.6 592.2,713.6 592.6,713.6 593.1,713.6 593.5,713.6 593.9,713.6 594.4,713.6 594.8,713.6 595.2,713.6 595.6,713.6 596.1,713.6 596.5,713.6 596.9,713.6 597.4,713.6 597.8,713.6 598.2,713.6 598.6,713.6 599.1,713.6 599.5,713.6 599.9,713.6 600.4,713.6 600.8,713.6 601.2,713.6 601.6,713.6 602.1,713.6 602.5,713.6 602.9,713.6 603.3,713.6 603.8,713.6 604.2,713.6 604.6,713.6 605.1,713.6 605.5,713.6 605.9,713.6 606.3,671.4 606.8,673.5 607.2,676.2 607.6,679.8 608.1,681.6 608.5,685.2 608.9,688.0 609.3,691.4 609.8,693.7 610.2,695.8 610.6,699.9 611.1,701.4 611.5,704.3 611.9,707.1 612.3,711.4 612.8,712.8 613.2,713.2 613.6,714.1 614.0,713.5 614.5,715.1 614.9,713.2 615.3,714.0 615.8,713.0 616.2,714.8 616.6,713.2 617.0,713.8 617.5,713.1 617.9,714.2 618.3,714.0 618.8,712.2 619.2,714.1 619.6,714.1 620.0,713.8 620.5,714.3 620.9,712.8 621.3,712.5 621.8,714.0 622.2,714.7 622.6,712.9 623.0,712.9 623.5,713.1 623.9,712.9 624.3,714.2 624.7,713.7 625.2,714.5 625.6,714.5 626.0,713.0 626.5,714.0 626.9,712.1 627.3,713.6 627.7,714.0 628.2,713.1 628.6,712.4 629.0,713.3 629.5,714.4 629.9,713.4 630.3,712.7 630.7,713.9 631.2,714.1 631.6,713.0 632.0,713.5 632.5,714.3 632.9,713.8 633.3,714.1 633.7,713.4 634.2,713.5 634.6,712.9 635.0,713.1 635.4,714.6 635.9,713.3 636.3,713.0 636.7,713.3 637.2,712.9 637.6,714.0 638.0,714.2 638.4,713.0 638.9,714.3 639.3,715.0 639.7,712.9 640.2,714.1 640.6,713.8 641.0,714.5 641.4,714.4 641.9,714.3 642.3,713.8 642.7,713.4 643.2,715.1 643.6,713.1 644.0,714.4 644.4,714.3 644.9,713.2 645.3,713.6 645.7,714.6 646.1,712.4 646.6,714.1 647.0,713.4 647.4,713.5 647.9,712.7 648.3,713.9 648.7,713.0 649.1,714.1 649.6,712.9 650.0,714.1 650.4,713.8 650.9,712.4 651.3,713.4 651.7,713.5 652.1,712.2 652.6,713.4 653.0,714.1 653.4,713.1 653.9,714.4 654.3,712.9 654.7,712.8 655.1,714.0 655.6,714.0 656.0,713.5 656.4,713.6 656.8,714.2 657.3,713.2 657.7,714.9 658.1,713.9 658.6,713.9 659.0,713.8 659.4,713.4 659.8,714.4 660.3,713.2 660.7,713.7 661.1,714.0 661.6,714.5 662.0,714.4 662.4,713.4 662.8,714.2 663.3,713.6 663.7,712.9 664.1,712.9 664.6,712.6 665.0,713.8 665.4,714.3 665.8,712.9 666.3,713.4 666.7,712.9 667.1,713.6 667.5,712.8 668.0,713.1 668.4,713.1 668.8,713.3 669.3,713.3 669.7,713.5 670.1,713.5 670.5,713.0 671.0,713.9 671.4,712.5 671.8,713.7 672.3,713.0 672.7,713.7 673.1,713.8 673.5,712.3 674.0,713.8 674.4,714.4 674.8,714.1 675.3,713.8 675.7,712.2 676.1,713.5 676.5,713.0 677.0,714.2 677.4,713.4 677.8,713.2 678.2,712.4 678.7,714.0 679.1,713.2 679.5,713.4 680.0,714.3 680.4,713.6 680.8,713.8 681.2,715.1 681.7,713.2 682.1,713.3 682.5,713.9 683.0,714.5 683.4,712.7 683.8,713.4 684.2,713.0 684.7,712.7 685.1,713.9 685.5,713.1 686.0,713.8 686.4,713.6 686.8,713.7 687.2,713.6 687.7,712.9 688.1,713.5 688.5,713.7 688.9,713.8 689.4,713.4 689.8,714.2 690.2,713.9 690.7,713.6 691.1,714.0 691.5,713.7 691.9,714.0 692.4,712.3 692.8,712.8 693.2,713.3 693.7,713.6 694.1,712.2 694.5,713.4 694.9,713.7 695.4,713.4 695.8,713.4 696.2,712.7 696.7,713.6 697.1,712.3 697.5,714.2 697.9,713.2 698.4,714.2 698.8,712.4 699.2,713.8 699.6,713.6 700.1,713.0 700.5,712.8 700.9,714.3 701.4,713.8 701.8,714.5 702.2,713.5 702.6,713.7 703.1,713.8 703.5,714.0 703.9,713.8 704.4,714.1 704.8,713.3 705.2,712.6 705.6,714.8 706.1,713.7 706.5,713.9 706.9,713.3 707.4,714.2 707.8,713.7 708.2,714.3 708.6,713.2 709.1,713.5 709.5,713.7 709.9,713.4 710.3,713.8 710.8,714.6 711.2,713.2 711.6,713.4 712.1,713.7 712.5,713.0 712.9,712.8 713.3,714.3 713.8,714.1 714.2,712.6 714.6,712.7 715.1,714.1 715.5,714.4 715.9,714.0 716.3,713.9 716.8,714.6 717.2,713.6 717.6,714.4 718.1,714.4 718.5,713.0 718.9,714.0 719.3,713.6 719.8,713.2 720.2,713.1 720.6,713.8 721.0,713.6 721.5,714.1 721.9,712.5 722.3,713.2 722.8,714.3 723.2,713.6 723.6,713.1 724.0,713.3 724.5,712.4 724.9,712.7 725.3,713.9 725.8,713.7 726.2,714.4 726.6,713.4 727.0,713.5 727.5,711.9 727.9,713.5 728.3,714.9 728.8,714.0 729.2,713.5 729.6,714.4 730.0,714.2 730.5,713.8 730.9,713.4 731.3,713.7 731.7,714.2 732.2,713.1 732.6,713.9 733.0,713.9 733.5,714.5 733.9,714.1 734.3,713.2 734.7,714.6 735.2,713.6 735.6,713.1 736.0,713.8 736.5,713.4 736.9,714.3 737.3,712.8 737.7,712.9 738.2,713.4 738.6,714.7 739.0,714.3 739.5,713.0 739.9,712.5 740.3,713.4 740.7,712.8 741.2,714.0 741.6,713.7 742.0,713.6 742.4,713.3 742.9,714.6 743.3,713.0 743.7,712.8 744.2,714.3 744.6,714.5 745.0,713.4 745.4,714.0 745.9,715.1 746.3,713.1 746.7,713.5 747.2,713.9 747.6,712.2 748.0,713.5 748.4,714.1 748.9,713.5 749.3,714.3 749.7,714.1 750.2,713.4 750.6,714.0 751.0,713.9 751.4,712.5 751.9,713.1 752.3,713.1 752.7,713.3 753.1,713.3 753.6,712.7 754.0,713.6 754.4,712.4 754.9,714.2 755.3,713.8 755.7,714.5 756.1,713.8 756.6,713.3 757.0,712.7 757.4,714.0 757.9,713.6 758.3,713.8 758.7,714.1 759.1,714.4 759.6,713.6 760.0,714.7 760.4,713.5 760.9,713.6 761.3,714.0 761.7,714.2 762.1,714.5 762.6,712.4 763.0,714.5 763.4,712.6 763.8,713.2 764.3,713.8 764.7,714.3 765.1,712.9 765.6,712.5 766.0,714.2 766.4,713.8 766.8,712.9 767.3,713.4 767.7,712.3 768.1,714.0 768.6,713.3 769.0,714.4 769.4,712.3 769.8,714.1 770.3,715.0 770.7,713.7 771.1,713.7 771.6,712.4 772.0,713.8 772.4,713.6 772.8,713.2 773.3,712.6 773.7,713.6 774.1,712.9 774.5,713.3 775.0,713.8 775.4,713.6 775.8,713.6 776.3,714.2 776.7,712.8 777.1,714.5 777.5,712.9 778.0,713.0 778.4,713.7 778.8,714.1 779.3,713.7 779.7,713.3 780.1,713.1 780.5,713.4 781.0,713.0 781.4,714.0 781.8,713.5 782.3,714.6 782.7,713.1 783.1,713.5 783.5,713.9 784.0,712.9 784.4,713.2 784.8,715.4 785.2,713.6 785.7,714.5 786.1,712.9 786.5,712.0 787.0,713.9 787.4,713.6 787.8,713.8 788.2,713.4 788.7,713.2 789.1,712.8 789.5,714.2 790.0,712.6 790.4,714.2 790.8,713.4 791.2,712.9 791.7,713.1 792.1,714.2 792.5,714.0 793.0,713.9 793.4,713.6 793.8,712.9 794.2,714.4 794.7,713.3 795.1,713.2 795.5,713.2 795.9,713.3 796.4,712.6 796.8,713.3 797.2,713.1 797.7,713.2 798.1,712.5 798.5,714.8 798.9,712.8 799.4,713.8 799.8,713.8 800.2,714.2 800.7,714.8 801.1,713.8 801.5,714.0 801.9,713.3 802.4,714.5 802.8,712.7 803.2,713.4 803.7,713.8 804.1,714.1 804.5,714.1 804.9,714.3 805.4,713.9 805.8,713.6 806.2,713.7 806.6,714.5 807.1,713.8 807.5,714.2 807.9,713.5 808.4,712.4 808.8,713.2 809.2,713.8 809.6,714.6 810.1,714.5 810.5,714.7 810.9,713.1 811.4,714.1 811.8,713.6 812.2,714.0 812.6,713.5 813.1,712.7 813.5,714.0 813.9,713.8 814.4,714.1 814.8,713.0 815.2,714.3 815.6,714.3 816.1,714.5 816.5,714.5 816.9,713.3 817.3,712.0 817.8,714.2 818.2,713.0 818.6,713.4 819.1,714.3 819.5,713.8 819.9,713.7 820.3,741.7 820.8,737.9 821.2,738.2 821.6,734.7 822.1,732.6 822.5,731.0 822.9,728.4 823.3,725.8 823.8,724.2 824.2,721.9 824.6,719.5 825.1,719.2 825.5,714.8 825.9,712.1 826.3,713.0 826.8,713.0 827.2,714.5 827.6,713.7 828.0,714.1 828.5,714.0 828.9,713.0 829.3,714.1 829.8,713.7 830.2,714.8 830.6,713.7 831.0,713.5 831.5,714.1 831.9,714.1 832.3,712.4 832.8,714.4 833.2,714.3 833.6,714.1 834.0,712.8 834.5,712.3 834.9,713.4 835.3,714.1 835.8,713.9 836.2,712.9 836.6,714.2 837.0,712.7 837.5,712.7 837.9,713.6 838.3,713.2 838.7,713.1 839.2,712.6 839.6,714.3 840.0,712.8 840.5,713.8 840.9,714.1 841.3,713.5 841.7,713.7 842.2,714.2 842.6,714.6 843.0,714.2 843.5,712.7 843.9,712.3 844.3,713.2 844.7,712.8 845.2,713.9 845.6,713.6 846.0,713.4 846.5,714.3 846.9,714.2 847.3,713.5 847.7,713.8 848.2,714.3 848.6,713.4 849.0,713.8 849.4,712.9 849.9,713.6 850.3,713.8 850.7,713.5 851.2,713.7 851.6,714.0 852.0,713.9 852.4,713.1 852.9,713.2 853.3,712.8 853.7,714.7 854.2,713.9 854.6,713.9 855.0,713.5 855.4,713.9 855.9,713.9 856.3,713.1 856.7,713.5 857.2,714.3 857.6,712.7 858.0,713.0 858.4,714.0 858.9,713.1 859.3,714.1 859.7,712.9 860.1,713.7 860.6,714.1 861.0,713.8 861.4,714.1 861.9,713.5 862.3,713.5 862.7,713.6 863.1,714.0 863.6,715.9 864.0,713.5 864.4,714.8 864.9,713.4 865.3,712.9 865.7,713.4 866.1,713.8 866.6,713.7 867.0,713.7 867.4,714.0 867.9,714.0 868.3,714.2 868.7,712.8 869.1,713.6 869.6,713.0 870.0,713.8 870.4,713.6 870.8,713.7 871.3,713.3 871.7,713.1 872.1,713.4 872.6,714.0 873.0,714.1 873.4,712.5 873.8,713.8 874.3,713.8 874.7,712.7 875.1,712.9 875.6,713.3 876.0,713.9 876.4,712.1 876.8,713.3 877.3,713.3 877.7,713.7 878.1,714.5 878.6,714.5 879.0,713.3 879.4,713.3 879.8,713.8 880.3,714.3 880.7,714.5 881.1,713.8 881.5,714.5 882.0,713.0 882.4,712.9 882.8,711.8 883.3,713.0 883.7,714.0 884.1,714.2 884.5,715.8 885.0,714.0 885.4,713.7 885.8,713.0 886.3,713.2 886.7,713.2 887.1,713.5 887.5,713.2 888.0,712.7 888.4,714.3 888.8,713.9 889.3,714.5 889.7,712.6 890.1,712.8 890.5,713.1 891.0,714.4 891.4,713.5 891.8,713.7 892.2,713.5 892.7,713.7 893.1,713.3 893.5,713.9 894.0,713.1 894.4,713.4 894.8,713.8 895.2,713.7 895.7,713.9 896.1,713.1 896.5,713.8 897.0,713.4 897.4,713.9 897.8,714.5 898.2,713.0 898.7,714.3 899.1,713.2 899.5,713.3 900.0,714.7 900.4,714.2 900.8,713.9 901.2,714.1 901.7,714.4 902.1,713.1 902.5,713.8 902.9,713.4 903.4,713.9 903.8,713.4 904.2,714.1 904.7,713.6 905.1,713.2 905.5,713.6 905.9,713.9 906.4,714.3 906.8,713.5 907.2,713.4 907.7,713.8 908.1,714.1 908.5,713.3 908.9,712.0 909.4,713.8 909.8,713.4 910.2,713.4 910.7,715.2 911.1,713.5 911.5,714.1 911.9,712.7 912.4,713.8 912.8,714.1 913.2,713.7 913.6,713.5 914.1,714.0 914.5,713.6 914.9,714.5 915.4,713.7 915.8,713.1 916.2,712.3 916.6,713.1 917.1,713.4 917.5,712.8 917.9,712.9 918.4,712.5 918.8,712.9 919.2,713.7 919.6,713.4 920.1,713.5 920.5,713.4 920.9,713.5 921.4,714.1 921.8,714.9 922.2,714.0 922.6,714.9 923.1,713.6 923.5,713.6 923.9,714.7 924.3,713.2 924.8,713.0 925.2,713.5 925.6,712.5 926.1,712.4 926.5,714.4 926.9,712.9 927.3,713.3 927.8,713.3 928.2,713.0 928.6,714.1 929.1,714.0 929.5,714.1 929.9,714.1 930.3,713.7 930.8,714.5 931.2,714.3 931.6,713.2 932.1,713.6 932.5,713.4 932.9,714.8 933.3,714.1 933.8,714.0 934.2,713.6 934.6,714.0 935.0,713.0 935.5,713.6 935.9,713.6 936.3,713.6 936.8,713.1 937.2,713.9 937.6,712.9 938.0,713.3 938.5,713.5 938.9,713.6 939.3,713.3 939.8,713.0 940.2,713.0 940.6,713.4 941.0,713.0 941.5,713.5 941.9,712.8 942.3,713.6 942.8,714.9 943.2,712.7 943.6,713.5 944.0,714.3 944.5,713.7 944.9,714.2 945.3,712.3 945.7,713.3 946.2,714.6 946.6,713.3 947.0,713.9 947.5,712.4 947.9,714.3 948.3,715.0 948.7,713.6 949.2,713.8 949.6,713.9 950.0,715.0 950.5,713.3 950.9,712.5 951.3,714.8 951.7,712.9 952.2,714.0 952.6,712.1 953.0,713.3 953.5,713.7 953.9,712.9 954.3,713.3 954.7,714.0 955.2,713.1 955.6,713.9 956.0,714.7 956.4,712.3 956.9,713.8 957.3,714.0 957.7,713.4 958.2,714.6 958.6,714.5 959.0,713.9 959.4,713.9 959.9,713.6 960.3,712.9 960.7,713.9 961.2,713.3 961.6,713.2 962.0,714.3 962.4,713.5 962.9,714.2 963.3,712.9 963.7,713.3 964.2,713.6 964.6,714.5 965.0,713.5 965.4,714.1 965.9,713.1 966.3,713.7 966.7,714.1 967.1,713.0 967.6,713.1 968.0,714.0 968.4,712.9 968.9,713.8 969.3,713.8 969.7,713.5 970.1,714.1 970.6,713.9 971.0,713.7 971.4,712.6 971.9,712.6 972.3,713.8 972.7,712.6 973.1,713.6 973.6,713.4 974.0,713.0 974.4,713.4 974.9,712.1 975.3,713.4 975.7,714.4 976.1,712.8 976.6,713.9 977.0,713.8 977.4,715.5" fill="none" stroke="#b08834" stroke-width="4.4" stroke-linejoin="round" stroke-linecap="round"/><polyline points="430.0,713.6 430.4,713.6 430.9,713.6 431.3,713.6 431.7,713.6 432.1,713.6 432.6,713.6 433.0,713.6 433.4,713.6 433.9,713.6 434.3,713.6 434.7,713.6 435.1,713.6 435.6,713.6 436.0,713.6 436.4,713.6 436.9,713.6 437.3,713.6 437.7,713.6 438.1,713.6 438.6,713.6 439.0,713.6 439.4,713.6 439.9,713.6 440.3,713.6 440.7,713.6 441.1,713.6 441.6,713.6 442.0,713.6 442.4,713.6 442.8,713.6 443.3,713.6 443.7,713.6 444.1,713.6 444.6,713.6 445.0,713.6 445.4,713.6 445.8,713.6 446.3,713.6 446.7,713.6 447.1,713.6 447.6,713.6 448.0,713.6 448.4,713.6 448.8,713.6 449.3,713.6 449.7,713.6 450.1,713.6 450.6,713.6 451.0,713.6 451.4,713.6 451.8,713.6 452.3,713.6 452.7,713.6 453.1,713.6 453.5,713.6 454.0,713.6 454.4,713.6 454.8,713.6 455.3,713.6 455.7,713.6 456.1,713.6 456.5,713.6 457.0,713.6 457.4,713.6 457.8,713.6 458.3,713.6 458.7,713.6 459.1,713.6 459.5,713.6 460.0,713.6 460.4,713.6 460.8,713.6 461.3,713.6 461.7,713.6 462.1,713.6 462.5,713.6 463.0,713.6 463.4,713.6 463.8,713.6 464.2,713.6 464.7,713.6 465.1,713.6 465.5,713.6 466.0,713.6 466.4,713.6 466.8,713.6 467.2,713.6 467.7,713.6 468.1,713.6 468.5,713.6 469.0,713.6 469.4,713.6 469.8,713.6 470.2,713.6 470.7,713.6 471.1,713.6 471.5,713.6 472.0,713.6 472.4,713.6 472.8,713.6 473.2,713.6 473.7,713.6 474.1,713.6 474.5,713.6 474.9,713.6 475.4,713.6 475.8,713.6 476.2,713.6 476.7,713.6 477.1,713.6 477.5,713.6 477.9,713.6 478.4,713.6 478.8,713.6 479.2,713.6 479.7,713.6 480.1,713.6 480.5,713.6 480.9,713.6 481.4,713.6 481.8,713.6 482.2,713.6 482.7,713.6 483.1,713.6 483.5,713.6 483.9,713.6 484.4,713.6 484.8,713.6 485.2,713.6 485.6,713.6 486.1,713.6 486.5,713.6 486.9,713.6 487.4,713.6 487.8,713.6 488.2,713.6 488.6,713.6 489.1,713.6 489.5,713.6 489.9,713.6 490.4,713.6 490.8,713.6 491.2,713.6 491.6,713.6 492.1,713.6 492.5,713.6 492.9,713.6 493.4,713.6 493.8,713.6 494.2,713.6 494.6,713.6 495.1,713.6 495.5,713.6 495.9,713.6 496.3,713.6 496.8,713.6 497.2,713.6 497.6,713.6 498.1,713.6 498.5,713.6 498.9,713.6 499.3,713.6 499.8,713.6 500.2,713.6 500.6,713.6 501.1,713.6 501.5,713.6 501.9,713.6 502.3,713.6 502.8,713.6 503.2,713.6 503.6,713.6 504.1,713.6 504.5,713.6 504.9,713.6 505.3,713.6 505.8,713.6 506.2,713.6 506.6,713.6 507.0,713.6 507.5,713.6 507.9,713.6 508.3,713.6 508.8,713.6 509.2,713.6 509.6,713.6 510.0,713.6 510.5,713.6 510.9,713.6 511.3,713.6 511.8,713.6 512.2,713.6 512.6,713.6 513.0,713.6 513.5,713.6 513.9,713.6 514.3,713.6 514.8,713.6 515.2,713.6 515.6,713.6 516.0,713.6 516.5,713.6 516.9,713.6 517.3,713.6 517.7,713.6 518.2,713.6 518.6,713.6 519.0,713.6 519.5,713.6 519.9,713.6 520.3,713.6 520.7,713.6 521.2,713.6 521.6,713.6 522.0,713.6 522.5,713.6 522.9,713.6 523.3,713.6 523.7,713.6 524.2,713.6 524.6,713.6 525.0,713.6 525.5,713.6 525.9,713.6 526.3,713.6 526.7,713.6 527.2,713.6 527.6,713.6 528.0,713.6 528.4,713.6 528.9,713.6 529.3,713.6 529.7,713.6 530.2,713.6 530.6,713.6 531.0,713.6 531.4,713.6 531.9,713.6 532.3,713.6 532.7,713.6 533.2,713.6 533.6,713.6 534.0,713.6 534.4,713.6 534.9,713.6 535.3,713.6 535.7,713.6 536.2,713.6 536.6,713.6 537.0,713.6 537.4,713.6 537.9,713.6 538.3,713.6 538.7,713.6 539.1,713.6 539.6,713.6 540.0,713.6 540.4,713.6 540.9,713.6 541.3,713.6 541.7,713.6 542.1,713.6 542.6,713.6 543.0,713.6 543.4,713.6 543.9,713.6 544.3,713.6 544.7,713.6 545.1,713.6 545.6,713.6 546.0,713.6 546.4,713.6 546.9,713.6 547.3,713.6 547.7,713.6 548.1,713.6 548.6,713.6 549.0,713.6 549.4,713.6 549.8,713.6 550.3,713.6 550.7,713.6 551.1,713.6 551.6,713.6 552.0,713.6 552.4,713.6 552.8,713.6 553.3,713.6 553.7,713.6 554.1,713.6 554.6,713.6 555.0,713.6 555.4,713.6 555.8,713.6 556.3,713.6 556.7,713.6 557.1,713.6 557.6,713.6 558.0,713.6 558.4,713.6 558.8,713.6 559.3,713.6 559.7,713.6 560.1,713.6 560.5,713.6 561.0,713.6 561.4,713.6 561.8,713.6 562.3,713.6 562.7,713.6 563.1,713.6 563.5,713.6 564.0,713.6 564.4,713.6 564.8,713.6 565.3,713.6 565.7,713.6 566.1,713.6 566.5,713.6 567.0,713.6 567.4,713.6 567.8,713.6 568.3,713.6 568.7,713.6 569.1,713.6 569.5,713.6 570.0,713.6 570.4,713.6 570.8,713.6 571.2,713.6 571.7,713.6 572.1,713.6 572.5,713.6 573.0,713.6 573.4,713.6 573.8,713.6 574.2,713.6 574.7,713.6 575.1,713.6 575.5,713.6 576.0,713.6 576.4,713.6 576.8,713.6 577.2,713.6 577.7,713.6 578.1,713.6 578.5,713.6 579.0,713.6 579.4,713.6 579.8,713.6 580.2,713.6 580.7,713.6 581.1,713.6 581.5,713.6 581.9,713.6 582.4,713.6 582.8,713.6 583.2,713.6 583.7,713.6 584.1,713.6 584.5,713.6 584.9,713.6 585.4,713.6 585.8,713.6 586.2,713.6 586.7,713.6 587.1,713.6 587.5,713.6 587.9,713.6 588.4,713.6 588.8,713.6 589.2,713.6 589.7,713.6 590.1,713.6 590.5,713.6 590.9,713.6 591.4,713.6 591.8,713.6 592.2,713.6 592.6,713.6 593.1,713.6 593.5,713.6 593.9,713.6 594.4,713.6 594.8,713.6 595.2,713.6 595.6,713.6 596.1,713.6 596.5,713.6 596.9,713.6 597.4,713.6 597.8,713.6 598.2,713.6 598.6,713.6 599.1,713.6 599.5,713.6 599.9,713.6 600.4,713.6 600.8,713.6 601.2,713.6 601.6,713.6 602.1,713.6 602.5,713.6 602.9,713.6 603.3,713.6 603.8,713.6 604.2,713.6 604.6,713.6 605.1,713.6 605.5,713.6 605.9,713.6" fill="none" stroke="#a00a36" stroke-width="5" stroke-linejoin="round" stroke-linecap="round"/><polyline points="606.3,571.6 606.8,571.6 607.2,571.6 607.6,571.6 608.1,571.6 608.5,571.6 608.9,571.6 609.3,571.6 609.8,571.6 610.2,571.6 610.6,571.6 611.1,571.6 611.5,571.6 611.9,571.6 612.3,571.6 612.8,571.6 613.2,571.6 613.6,571.6 614.0,571.6 614.5,571.6 614.9,571.6 615.3,571.6 615.8,571.6 616.2,571.6 616.6,571.6 617.0,571.6 617.5,571.6 617.9,571.6 618.3,571.6 618.8,571.6 619.2,571.6 619.6,571.6 620.0,571.6 620.5,571.6 620.9,571.6 621.3,571.6 621.8,571.6 622.2,571.6 622.6,571.6 623.0,571.6 623.5,571.6 623.9,571.6 624.3,571.6 624.7,571.6 625.2,571.6 625.6,571.6 626.0,571.6 626.5,571.6 626.9,571.6 627.3,571.6 627.7,571.6 628.2,571.6 628.6,571.6 629.0,571.6 629.5,571.6 629.9,571.6 630.3,571.6 630.7,571.6 631.2,571.6 631.6,571.6 632.0,571.6 632.5,571.6 632.9,571.6 633.3,571.6 633.7,571.6 634.2,571.6 634.6,571.6 635.0,571.6 635.4,571.6 635.9,571.6 636.3,571.6 636.7,571.6 637.2,571.6 637.6,571.6 638.0,571.6 638.4,571.6 638.9,571.6 639.3,571.6 639.7,571.6 640.2,571.6 640.6,571.6 641.0,571.6 641.4,571.6 641.9,571.6 642.3,571.6 642.7,571.6 643.2,571.6 643.6,571.6 644.0,571.6 644.4,571.6 644.9,571.6 645.3,571.6 645.7,571.6 646.1,571.6 646.6,571.6 647.0,571.6 647.4,571.6 647.9,571.6 648.3,571.6 648.7,571.6 649.1,571.6 649.6,571.6 650.0,571.6 650.4,571.6 650.9,573.3 651.3,576.1 651.7,578.8 652.1,581.4 652.6,584.0 653.0,586.6 653.4,589.1 653.9,591.5 654.3,593.9 654.7,596.2 655.1,598.5 655.6,600.7 656.0,602.9 656.4,605.0 656.8,607.1 657.3,609.2 657.7,611.2 658.1,613.1 658.6,615.1 659.0,616.9 659.4,618.8 659.8,620.6 660.3,622.3 660.7,624.1 661.1,625.8 661.6,627.4 662.0,629.1 662.4,630.6 662.8,632.2 663.3,633.7 663.7,635.2 664.1,636.7 664.6,638.1 665.0,639.5 665.4,640.9 665.8,642.3 666.3,643.6 666.7,644.9 667.1,646.1 667.5,647.4 668.0,648.6 668.4,649.8 668.8,651.0 669.3,652.1 669.7,653.2 670.1,654.3 670.5,655.4 671.0,656.5 671.4,657.5 671.8,658.5 672.3,659.5 672.7,660.5 673.1,661.5 673.5,662.4 674.0,663.3 674.4,664.2 674.8,665.1 675.3,666.0 675.7,666.8 676.1,667.6 676.5,668.5 677.0,669.3 677.4,670.1 677.8,670.8 678.2,671.6 678.7,672.3 679.1,673.1 679.5,673.8 680.0,674.5 680.4,675.2 680.8,675.8 681.2,676.5 681.7,677.1 682.1,677.8 682.5,678.4 683.0,679.0 683.4,679.6 683.8,680.2 684.2,680.8 684.7,681.4 685.1,681.9 685.5,682.5 686.0,683.0 686.4,683.5 686.8,684.1 687.2,684.6 687.7,685.1 688.1,685.5 688.5,686.0 688.9,686.5 689.4,687.0 689.8,687.4 690.2,687.9 690.7,688.3 691.1,688.7 691.5,689.2 691.9,689.6 692.4,690.0 692.8,690.4 693.2,690.8 693.7,691.2 694.1,691.5 694.5,691.9 694.9,692.3 695.4,692.6 695.8,693.0 696.2,693.3 696.7,693.7 697.1,694.0 697.5,694.3 697.9,694.7 698.4,695.0 698.8,695.3 699.2,695.6 699.6,695.9 700.1,696.2 700.5,696.5 700.9,696.8 701.4,697.0 701.8,697.3 702.2,697.6 702.6,697.8 703.1,698.1 703.5,698.4 703.9,698.6 704.4,698.9 704.8,699.1 705.2,699.3 705.6,699.6 706.1,699.8 706.5,700.0 706.9,700.3 707.4,700.5 707.8,700.7 708.2,700.9 708.6,701.1 709.1,701.3 709.5,701.5 709.9,701.7 710.3,701.9 710.8,702.1 711.2,702.3 711.6,702.5 712.1,702.6 712.5,702.8 712.9,703.0 713.3,703.2 713.8,703.3 714.2,703.5 714.6,703.7 715.1,703.8 715.5,704.0 715.9,704.1 716.3,704.3 716.8,704.4 717.2,704.6 717.6,704.7 718.1,704.9 718.5,705.0 718.9,705.2 719.3,705.3 719.8,705.4 720.2,705.6 720.6,705.7 721.0,705.8 721.5,705.9 721.9,706.1 722.3,706.2 722.8,706.3 723.2,706.4 723.6,706.5 724.0,706.6 724.5,706.8 724.9,706.9 725.3,707.0 725.8,707.1 726.2,707.2 726.6,707.3 727.0,707.4 727.5,707.5 727.9,707.6 728.3,707.7 728.8,707.8 729.2,707.9 729.6,708.0 730.0,708.0 730.5,708.1 730.9,708.2 731.3,708.3 731.7,708.4 732.2,708.5 732.6,708.5 733.0,708.6 733.5,708.7 733.9,708.8 734.3,708.9 734.7,708.9 735.2,709.0 735.6,709.1 736.0,709.2 736.5,709.2 736.9,709.3 737.3,709.4 737.7,709.4 738.2,709.5 738.6,709.6 739.0,709.6 739.5,709.7 739.9,709.7 740.3,709.8 740.7,709.9 741.2,709.9 741.6,710.0 742.0,710.0 742.4,710.1 742.9,710.1 743.3,710.2 743.7,710.3 744.2,710.3 744.6,710.4 745.0,710.4 745.4,710.5 745.9,710.5 746.3,710.6 746.7,710.6 747.2,710.7 747.6,710.7 748.0,710.7 748.4,710.8 748.9,710.8 749.3,710.9 749.7,710.9 750.2,711.0 750.6,711.0 751.0,711.0 751.4,711.1 751.9,711.1 752.3,711.2 752.7,711.2 753.1,711.2 753.6,711.3 754.0,711.3 754.4,711.3 754.9,711.4 755.3,711.4 755.7,711.4 756.1,711.5 756.6,711.5 757.0,711.5 757.4,711.6 757.9,711.6 758.3,711.6 758.7,711.7 759.1,711.7 759.6,711.7 760.0,711.8 760.4,711.8 760.9,711.8 761.3,711.8 761.7,711.9 762.1,711.9 762.6,711.9 763.0,711.9 763.4,712.0 763.8,712.0 764.3,712.0 764.7,712.0 765.1,712.1 765.6,712.1 766.0,712.1 766.4,712.1 766.8,712.2 767.3,712.2 767.7,712.2 768.1,712.2 768.6,712.3 769.0,712.3 769.4,712.3 769.8,712.3 770.3,712.3 770.7,712.4 771.1,712.4 771.6,712.4 772.0,712.4 772.4,712.4 772.8,712.4 773.3,712.5 773.7,712.5 774.1,712.5 774.5,712.5 775.0,712.5 775.4,712.5 775.8,712.6 776.3,712.6 776.7,712.6 777.1,712.6 777.5,712.6 778.0,712.6 778.4,712.7 778.8,712.7 779.3,712.7 779.7,712.7 780.1,712.7 780.5,712.7 781.0,712.7 781.4,712.8 781.8,712.8 782.3,712.8 782.7,712.8 783.1,712.8 783.5,712.8 784.0,712.8 784.4,712.8 784.8,712.9 785.2,712.9 785.7,712.9 786.1,712.9 786.5,712.9 787.0,712.9 787.4,712.9 787.8,712.9 788.2,712.9 788.7,712.9 789.1,713.0 789.5,713.0 790.0,713.0 790.4,713.0 790.8,713.0 791.2,713.0 791.7,713.0 792.1,713.0 792.5,713.0 793.0,713.0 793.4,713.1 793.8,713.1 794.2,713.1 794.7,713.1 795.1,713.1 795.5,713.1 795.9,713.1 796.4,713.1 796.8,713.1 797.2,713.1 797.7,713.1 798.1,713.1 798.5,713.1 798.9,713.2 799.4,713.2 799.8,713.2 800.2,713.2 800.7,713.2 801.1,713.2 801.5,713.2 801.9,713.2 802.4,713.2 802.8,713.2 803.2,713.2 803.7,713.2 804.1,713.2 804.5,713.2 804.9,713.2 805.4,713.2 805.8,713.2 806.2,713.3 806.6,713.3 807.1,713.3 807.5,713.3 807.9,713.3 808.4,713.3 808.8,713.3 809.2,713.3 809.6,713.3 810.1,713.3 810.5,713.3 810.9,713.3 811.4,713.3 811.8,713.3 812.2,713.3 812.6,713.3 813.1,713.3 813.5,713.3 813.9,713.3 814.4,713.3 814.8,713.3 815.2,713.4 815.6,713.4 816.1,713.4 816.5,713.4 816.9,713.4 817.3,713.4 817.8,713.4 818.2,713.4 818.6,713.4 819.1,713.4 819.5,713.4 819.9,713.4" fill="none" stroke="#a00a36" stroke-width="5" stroke-linejoin="round" stroke-linecap="round"/><polyline points="820.3,855.6 820.8,855.6 821.2,855.6 821.6,855.6 822.1,855.6 822.5,855.6 822.9,855.6 823.3,855.6 823.8,855.6 824.2,855.6 824.6,855.6 825.1,855.6 825.5,855.6 825.9,855.6 826.3,855.6 826.8,855.6 827.2,855.6 827.6,855.6 828.0,855.6 828.5,855.6 828.9,855.6 829.3,855.6 829.8,855.6 830.2,855.6 830.6,855.6 831.0,855.6 831.5,855.6 831.9,855.6 832.3,855.6 832.8,855.6 833.2,855.6 833.6,855.6 834.0,855.6 834.5,855.6 834.9,855.6 835.3,855.6 835.8,855.6 836.2,855.6 836.6,855.6 837.0,855.6 837.5,855.6 837.9,855.6 838.3,855.6 838.7,855.6 839.2,855.6 839.6,855.6 840.0,855.6 840.5,855.6 840.9,855.6 841.3,855.6 841.7,855.6 842.2,855.6 842.6,855.6 843.0,855.6 843.5,855.6 843.9,855.6 844.3,855.6 844.7,855.6 845.2,855.6 845.6,855.6 846.0,855.6 846.5,855.6 846.9,855.6 847.3,855.6 847.7,855.6 848.2,855.6 848.6,855.6 849.0,855.6 849.4,855.6 849.9,855.6 850.3,855.6 850.7,855.6 851.2,855.6 851.6,855.6 852.0,855.6 852.4,855.6 852.9,855.6 853.3,855.6 853.7,855.6 854.2,855.6 854.6,855.6 855.0,855.6 855.4,855.6 855.9,855.6 856.3,855.6 856.7,855.6 857.2,855.6 857.6,855.6 858.0,855.6 858.4,855.6 858.9,855.6 859.3,855.6 859.7,855.6 860.1,855.6 860.6,855.6 861.0,855.6 861.4,855.6 861.9,855.6 862.3,855.6 862.7,855.6 863.1,855.6 863.6,855.6 864.0,855.6 864.4,855.6 864.9,855.6 865.3,855.6 865.7,855.6 866.1,854.6 866.6,851.4 867.0,848.2 867.4,845.1 867.9,842.1 868.3,839.2 868.7,836.3 869.1,833.6 869.6,830.9 870.0,828.2 870.4,825.7 870.8,823.1 871.3,820.7 871.7,818.3 872.1,816.0 872.6,813.7 873.0,811.5 873.4,809.4 873.8,807.3 874.3,805.2 874.7,803.2 875.1,801.3 875.6,799.4 876.0,797.5 876.4,795.7 876.8,793.9 877.3,792.2 877.7,790.5 878.1,788.9 878.6,787.3 879.0,785.7 879.4,784.2 879.8,782.7 880.3,781.2 880.7,779.8 881.1,778.4 881.5,777.1 882.0,775.7 882.4,774.4 882.8,773.2 883.3,771.9 883.7,770.7 884.1,769.6 884.5,768.4 885.0,767.3 885.4,766.2 885.8,765.1 886.3,764.1 886.7,763.0 887.1,762.0 887.5,761.1 888.0,760.1 888.4,759.2 888.8,758.3 889.3,757.4 889.7,756.5 890.1,755.6 890.5,754.8 891.0,754.0 891.4,753.2 891.8,752.4 892.2,751.6 892.7,750.9 893.1,750.2 893.5,749.4 894.0,748.7 894.4,748.1 894.8,747.4 895.2,746.7 895.7,746.1 896.1,745.5 896.5,744.8 897.0,744.2 897.4,743.6 897.8,743.1 898.2,742.5 898.7,742.0 899.1,741.4 899.5,740.9 900.0,740.4 900.4,739.9 900.8,739.4 901.2,738.9 901.7,738.4 902.1,737.9 902.5,737.5 902.9,737.0 903.4,736.6 903.8,736.1 904.2,735.7 904.7,735.3 905.1,734.9 905.5,734.5 905.9,734.1 906.4,733.7 906.8,733.4 907.2,733.0 907.7,732.6 908.1,732.3 908.5,732.0 908.9,731.6 909.4,731.3 909.8,731.0 910.2,730.6 910.7,730.3 911.1,730.0 911.5,729.7 911.9,729.4 912.4,729.1 912.8,728.9 913.2,728.6 913.6,728.3 914.1,728.1 914.5,727.8 914.9,727.5 915.4,727.3 915.8,727.0 916.2,726.8 916.6,726.6 917.1,726.3 917.5,726.1 917.9,725.9 918.4,725.7 918.8,725.4 919.2,725.2 919.6,725.0 920.1,724.8 920.5,724.6 920.9,724.4 921.4,724.2 921.8,724.0 922.2,723.9 922.6,723.7 923.1,723.5 923.5,723.3 923.9,723.2 924.3,723.0 924.8,722.8 925.2,722.7 925.6,722.5 926.1,722.3 926.5,722.2 926.9,722.0 927.3,721.9 927.8,721.8 928.2,721.6 928.6,721.5 929.1,721.3 929.5,721.2 929.9,721.1 930.3,720.9 930.8,720.8 931.2,720.7 931.6,720.6 932.1,720.4 932.5,720.3 932.9,720.2 933.3,720.1 933.8,720.0 934.2,719.9 934.6,719.8 935.0,719.7 935.5,719.6 935.9,719.4 936.3,719.3 936.8,719.2 937.2,719.2 937.6,719.1 938.0,719.0 938.5,718.9 938.9,718.8 939.3,718.7 939.8,718.6 940.2,718.5 940.6,718.4 941.0,718.4 941.5,718.3 941.9,718.2 942.3,718.1 942.8,718.0 943.2,718.0 943.6,717.9 944.0,717.8 944.5,717.7 944.9,717.7 945.3,717.6 945.7,717.5 946.2,717.5 946.6,717.4 947.0,717.3 947.5,717.3 947.9,717.2 948.3,717.1 948.7,717.1 949.2,717.0 949.6,717.0 950.0,716.9 950.5,716.9 950.9,716.8 951.3,716.7 951.7,716.7 952.2,716.6 952.6,716.6 953.0,716.5 953.5,716.5 953.9,716.4 954.3,716.4 954.7,716.3 955.2,716.3 955.6,716.3 956.0,716.2 956.4,716.2 956.9,716.1 957.3,716.1 957.7,716.0 958.2,716.0 958.6,716.0 959.0,715.9 959.4,715.9 959.9,715.8 960.3,715.8 960.7,715.8 961.2,715.7 961.6,715.7 962.0,715.7 962.4,715.6 962.9,715.6 963.3,715.6 963.7,715.5 964.2,715.5 964.6,715.5 965.0,715.4 965.4,715.4 965.9,715.4 966.3,715.3 966.7,715.3 967.1,715.3 967.6,715.3 968.0,715.2 968.4,715.2 968.9,715.2 969.3,715.1 969.7,715.1 970.1,715.1 970.6,715.1 971.0,715.0 971.4,715.0 971.9,715.0 972.3,715.0 972.7,715.0 973.1,714.9 973.6,714.9 974.0,714.9 974.4,714.9 974.9,714.8 975.3,714.8 975.7,714.8 976.1,714.8 976.6,714.8 977.0,714.7 977.4,714.7" fill="none" stroke="#a00a36" stroke-width="5" stroke-linejoin="round" stroke-linecap="round"/><line x1="606.0" y1="713.6" x2="606.0" y2="571.6" stroke="#a00a36" stroke-width="1.5"/><line x1="819.9" y1="713.6" x2="819.9" y2="855.6" stroke="#a00a36" stroke-width="1.5"/></g><rect x="441.5" y="64.5" width="148" height="48" fill="#141414" stroke="#4a4852" stroke-width="1"/><rect x="448" y="71" width="9" height="9" fill="#fc0a4e"/><rect x="448" y="84" width="9" height="9" fill="#555555"/><rect x="448" y="97" width="9" height="9" fill="#6adbe8"/><rect x="441.5" y="513.5" width="148" height="48" fill="#141414" stroke="#4a4852" stroke-width="1"/><rect x="448" y="520" width="9" height="9" fill="#d6398c"/><rect x="448" y="533" width="9" height="9" fill="#b08834"/><rect x="448" y="546" width="9" height="9" fill="#a00a36"/></svg>
<div style="position:absolute;left:0;top:0;width:995px;height:946px;will-change:transform"><div class="t" style="left:12px;top:3px;color:#fff;">File</div><div class="t" style="left:56px;top:3px;color:#fff;">Options</div><div class="t" style="left:120px;top:3px;color:#fff;">Window</div><div class="t" style="left:179px;top:3px;color:#fff;">Help</div><div class="t" style="left:26px;top:22px;color:#fff;">Var Viewer</div><div class="t" style="left:109px;top:22px;color:#fff;">Trace Viewer</div><div class="t" style="left:-111px;width:600px;text-align:center;top:64px;color:#fff;">STOPPED</div><div class="t" style="left:-108px;width:600px;text-align:center;top:100px;color:#fff;">Variables</div><div class="t" style="left:-108px;width:600px;text-align:center;top:127px;color:#fff;">Add variable</div><div class="t" style="left:-108px;width:600px;text-align:center;top:156px;color:#fff;">Update variable addresses</div><div class="t" style="left:40px;top:198px;color:#fff;">actual_pos</div><div class="t" style="left:181px;top:201px;color:#fff;">0x20003858</div><div class="t" style="left:323px;top:201px;color:#fff;">F32</div><div class="t" style="left:40px;top:221px;color:#fff;">actual_vel</div><div class="t" style="left:181px;top:224px;color:#fff;">0x2000385c</div><div class="t" style="left:323px;top:224px;color:#fff;">F32</div><div class="t" style="left:40px;top:244px;color:#fff;">positionPID.output</div><div class="t" style="left:181px;top:247px;color:#fff;">0x200027f0</div><div class="t" style="left:323px;top:247px;color:#fff;">F32</div><div class="t" style="left:40px;top:267px;color:#fff;">positionPID.target</div><div class="t" style="left:181px;top:270px;color:#fff;">0x200027ec</div><div class="t" style="left:323px;top:270px;color:#fff;">F32</div><div class="t" style="left:40px;top:290px;color:#fff;">velocityPID.output</div><div class="t" style="left:181px;top:293px;color:#fff;">0x200029c0</div><div class="t" style="left:323px;top:293px;color:#fff;">F32</div><div class="t" style="left:40px;top:313px;color:#fff;">velocityPID.target</div><div class="t" style="left:181px;top:316px;color:#fff;">0x200029bc</div><div class="t" style="left:323px;top:316px;color:#fff;">F32</div><div class="t" style="left:13px;top:181px;color:#fff;">Name</div><div class="t" style="left:181px;top:181px;color:#fff;">Address</div><div class="t" style="left:323px;top:181px;color:#fff;">Type</div><div class="t" style="left:-108px;width:600px;text-align:center;top:483px;color:#fff;">Plots</div><div class="t" style="left:-108px;width:600px;text-align:center;top:510px;color:#fff;">Add plot</div><div class="t" style="left:43px;top:544px;color:#fff;">position PID</div><div class="t" style="left:43px;top:567px;color:#fff;">velocity PID</div><div class="t" style="left:166px;top:533px;color:#fff;">name</div><div class="t" style="left:255px;top:536px;color:#fff;">position PID</div><div class="t" style="left:166px;top:556px;color:#fff;">type</div><div class="t" style="left:255px;top:559px;color:#fff;">curve</div><div class="t" style="left:166px;top:579px;color:#fff;">x0 marker</div><div class="t" style="left:166px;top:602px;color:#fff;">x1 marker</div><div class="t" style="left:166px;top:625px;color:#fff;">statistics</div><div class="t" style="left:255px;top:628px;color:#fff;">OFF</div><div class="t" style="left:224px;top:654px;color:#fff;">actual_pos</div><div class="t" style="left:224px;top:677px;color:#fff;">positionPID.output</div><div class="t" style="left:224px;top:700px;color:#fff;">positionPID.target</div><div class="t" style="left:-30px;width:600px;text-align:center;top:833px;color:#fff;">Export plot to *.csv</div><div class="t" style="left:403px;width:600px;text-align:center;top:37px;color:#fff;">position PID</div><div class="t" style="left:403px;width:600px;text-align:center;top:486px;color:#fff;">velocity PID</div><div class="t" style="left:-173px;width:600px;text-align:right;top:418px;color:#fff;">0</div><div class="t" style="left:-173px;width:600px;text-align:right;top:360px;color:#fff;">0.5</div><div class="t" style="left:-173px;width:600px;text-align:right;top:302px;color:#fff;">1</div><div class="t" style="left:-173px;width:600px;text-align:right;top:244px;color:#fff;">1.5</div><div class="t" style="left:-173px;width:600px;text-align:right;top:185px;color:#fff;">2</div><div class="t" style="left:-173px;width:600px;text-align:right;top:127px;color:#fff;">2.5</div><div class="t" style="left:-173px;width:600px;text-align:right;top:69px;color:#fff;">3</div><div class="t" style="left:-173px;width:600px;text-align:right;top:850px;color:#fff;">-20</div><div class="t" style="left:-173px;width:600px;text-align:right;top:779px;color:#fff;">-10</div><div class="t" style="left:-173px;width:600px;text-align:right;top:708px;color:#fff;">0</div><div class="t" style="left:-173px;width:600px;text-align:right;top:637px;color:#fff;">10</div><div class="t" style="left:-173px;width:600px;text-align:right;top:566px;color:#fff;">20</div><div class="t" style="left:189.5px;width:600px;text-align:center;top:445px;color:#fff;">1.8</div><div class="t" style="left:189.5px;width:600px;text-align:center;top:894px;color:#fff;">1.8</div><div class="t" style="left:275.5px;width:600px;text-align:center;top:445px;color:#fff;">2</div><div class="t" style="left:275.5px;width:600px;text-align:center;top:894px;color:#fff;">2</div><div class="t" style="left:360.5px;width:600px;text-align:center;top:445px;color:#fff;">2.2</div><div class="t" style="left:360.5px;width:600px;text-align:center;top:894px;color:#fff;">2.2</div><div class="t" style="left:446.5px;width:600px;text-align:center;top:445px;color:#fff;">2.4</div><div class="t" style="left:446.5px;width:600px;text-align:center;top:894px;color:#fff;">2.4</div><div class="t" style="left:531.5px;width:600px;text-align:center;top:445px;color:#fff;">2.6</div><div class="t" style="left:531.5px;width:600px;text-align:center;top:894px;color:#fff;">2.6</div><div class="t" style="left:617.5px;width:600px;text-align:center;top:445px;color:#fff;">2.8</div><div class="t" style="left:617.5px;width:600px;text-align:center;top:894px;color:#fff;">2.8</div><div class="t" style="left:403px;width:600px;text-align:center;top:462px;color:#fff;">time[s]</div><div class="t" style="left:403px;width:600px;text-align:center;top:911px;color:#fff;">time[s]</div><div class="t" style="left:459px;top:70px;color:#fff;">actual_pos</div><div class="t" style="left:459px;top:83px;color:#5a5a5a;">positionPID.output</div><div class="t" style="left:459px;top:96px;color:#fff;">positionPID.target</div><div class="t" style="left:459px;top:519px;color:#fff;">actual_vel</div><div class="t" style="left:459px;top:532px;color:#fff;">velocityPID.output</div><div class="t" style="left:459px;top:545px;color:#fff;">velocityPID.target</div></div>
</body></html>
